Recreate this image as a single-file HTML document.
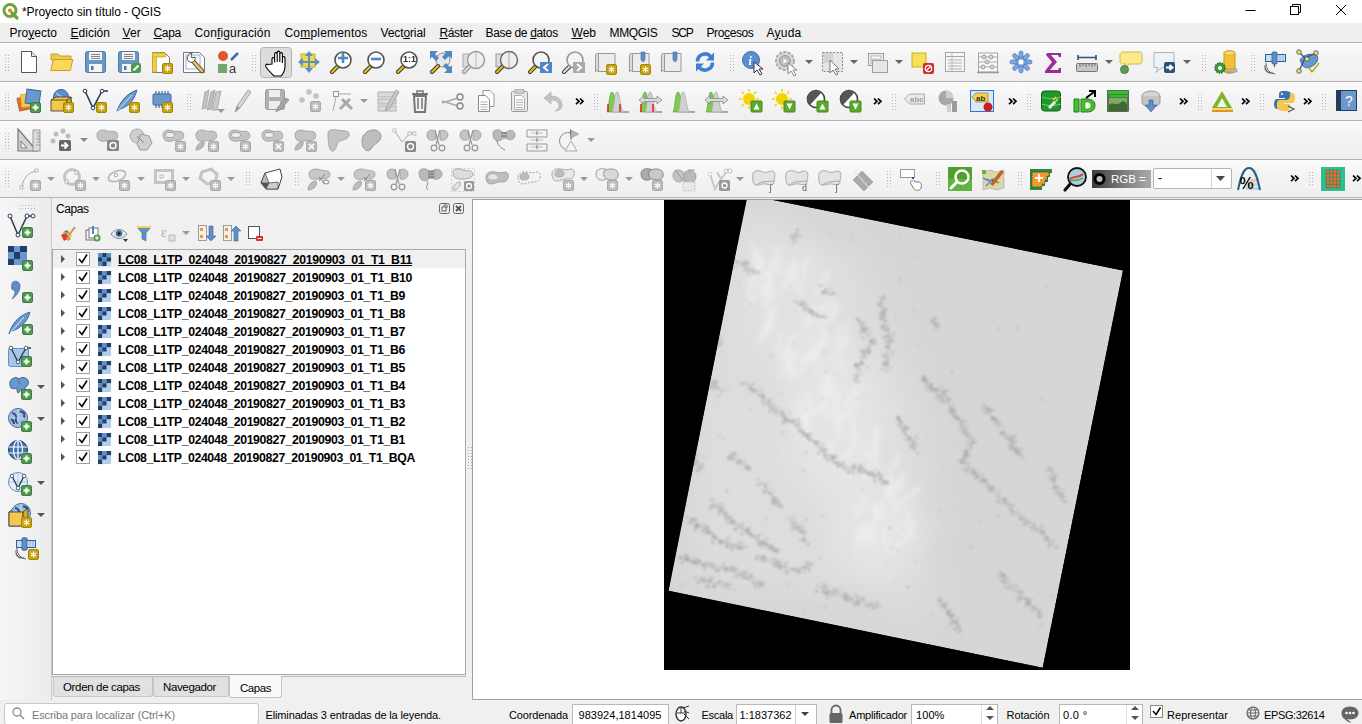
<!DOCTYPE html>
<html><head><meta charset="utf-8">
<style>
*{margin:0;padding:0;box-sizing:border-box}
html,body{width:1362px;height:724px;overflow:hidden;background:#f0f0f0;font-family:"Liberation Sans",sans-serif;position:relative}
.a{position:absolute}
.t{position:absolute;white-space:nowrap}
svg{position:absolute;left:0;top:0}
</style></head><body>
<div class="a" style="left:0px;top:0px;width:1362px;height:23px;background:#fff"></div><div class="t" style="left:22px;top:5.64px;font-size:12px;line-height:13.40px;font-weight:400;color:#000;letter-spacing:-0.064px;">*Proyecto sin título - QGIS</div><div class="a" style="left:0px;top:23px;width:1362px;height:19px;background:#efefef"></div><div class="a" style="left:0px;top:42px;width:1362px;height:1px;background:#b4b4b4"></div><div class="t" style="left:9.5px;top:26.64px;font-size:12px;line-height:13.40px;font-weight:400;color:#000;letter-spacing:0.003px;">Pro<u>y</u>ecto</div><div class="t" style="left:70.5px;top:26.64px;font-size:12px;line-height:13.40px;font-weight:400;color:#000;letter-spacing:0.018px;"><u>E</u>dición</div><div class="t" style="left:122.5px;top:26.64px;font-size:12px;line-height:13.40px;font-weight:400;color:#000;letter-spacing:0.061px;"><u>V</u>er</div><div class="t" style="left:153.5px;top:26.64px;font-size:12px;line-height:13.40px;font-weight:400;color:#000;letter-spacing:-0.326px;"><u>C</u>apa</div><div class="t" style="left:194.5px;top:26.64px;font-size:12px;line-height:13.40px;font-weight:400;color:#000;letter-spacing:0.149px;">Con<u>f</u>iguración</div><div class="t" style="left:284.5px;top:26.64px;font-size:12px;line-height:13.40px;font-weight:400;color:#000;letter-spacing:0.190px;">Co<u>m</u>plementos</div><div class="t" style="left:380.5px;top:26.64px;font-size:12px;line-height:13.40px;font-weight:400;color:#000;letter-spacing:-0.118px;">Vect<u>o</u>rial</div><div class="t" style="left:439.5px;top:26.64px;font-size:12px;line-height:13.40px;font-weight:400;color:#000;letter-spacing:-0.393px;"><u>R</u>áster</div><div class="t" style="left:485.5px;top:26.64px;font-size:12px;line-height:13.40px;font-weight:400;color:#000;letter-spacing:-0.335px;">Base de <u>d</u>atos</div><div class="t" style="left:571.5px;top:26.64px;font-size:12px;line-height:13.40px;font-weight:400;color:#000;letter-spacing:0.010px;"><u>W</u>eb</div><div class="t" style="left:609.5px;top:26.64px;font-size:12px;line-height:13.40px;font-weight:400;color:#000;letter-spacing:-0.333px;">MMQGIS</div><div class="t" style="left:671.5px;top:26.64px;font-size:12px;line-height:13.40px;font-weight:400;color:#000;letter-spacing:-1.229px;">SCP</div><div class="t" style="left:706.5px;top:26.64px;font-size:12px;line-height:13.40px;font-weight:400;color:#000;letter-spacing:-0.381px;">Pro<u>c</u>esos</div><div class="t" style="left:766.5px;top:26.64px;font-size:12px;line-height:13.40px;font-weight:400;color:#000;letter-spacing:0.234px;">A<u>y</u>uda</div><div class="a" style="left:0px;top:43px;width:1362px;height:38px;background:linear-gradient(#fbfbfb,#f4f4f4 40%,#efefef)"></div><div class="a" style="left:0px;top:81px;width:1362px;height:1px;background:#b4b4b4"></div><div class="a" style="left:0px;top:82px;width:1362px;height:38px;background:linear-gradient(#fbfbfb,#f4f4f4 40%,#efefef)"></div><div class="a" style="left:0px;top:120px;width:1362px;height:1px;background:#b4b4b4"></div><div class="a" style="left:0px;top:121px;width:1362px;height:38px;background:linear-gradient(#fbfbfb,#f4f4f4 40%,#efefef)"></div><div class="a" style="left:0px;top:159px;width:1362px;height:1px;background:#b4b4b4"></div><div class="a" style="left:0px;top:160px;width:1362px;height:37px;background:linear-gradient(#fbfbfb,#f4f4f4 40%,#efefef)"></div><div class="a" style="left:0px;top:197px;width:1362px;height:1px;background:#b4b4b4"></div><div class="a" style="left:0px;top:198px;width:51px;height:502px;background:linear-gradient(90deg,#f6f6f6,#ececec)"></div><div class="a" style="left:51px;top:198px;width:1px;height:502px;background:#c8c8c8"></div><div class="a" style="left:52px;top:198px;width:420px;height:502px;background:#f0f0f0"></div><div class="t" style="left:56px;top:203.14px;font-size:12px;line-height:13.40px;font-weight:400;color:#000;letter-spacing:-0.438px;">Capas</div><div class="a" style="left:52px;top:249px;width:414px;height:426px;background:#fff;border:1px solid #a9a9a9"></div><div class="a" style="left:53px;top:250px;width:412px;height:18px;background:#f0f0f0"></div><div class="t" style="left:118px;top:254.27px;font-size:12.3px;line-height:13.74px;font-weight:700;color:#000;text-decoration:underline;letter-spacing:-0.327px;">LC08_L1TP_024048_20190827_20190903_01_T1_B11</div><div class="t" style="left:118px;top:272.27px;font-size:12.3px;line-height:13.74px;font-weight:700;color:#000;letter-spacing:-0.342px;">LC08_L1TP_024048_20190827_20190903_01_T1_B10</div><div class="t" style="left:118px;top:290.27px;font-size:12.3px;line-height:13.74px;font-weight:700;color:#000;letter-spacing:-0.354px;">LC08_L1TP_024048_20190827_20190903_01_T1_B9</div><div class="t" style="left:118px;top:308.27px;font-size:12.3px;line-height:13.74px;font-weight:700;color:#000;letter-spacing:-0.354px;">LC08_L1TP_024048_20190827_20190903_01_T1_B8</div><div class="t" style="left:118px;top:326.27px;font-size:12.3px;line-height:13.74px;font-weight:700;color:#000;letter-spacing:-0.354px;">LC08_L1TP_024048_20190827_20190903_01_T1_B7</div><div class="t" style="left:118px;top:344.27px;font-size:12.3px;line-height:13.74px;font-weight:700;color:#000;letter-spacing:-0.354px;">LC08_L1TP_024048_20190827_20190903_01_T1_B6</div><div class="t" style="left:118px;top:362.27px;font-size:12.3px;line-height:13.74px;font-weight:700;color:#000;letter-spacing:-0.354px;">LC08_L1TP_024048_20190827_20190903_01_T1_B5</div><div class="t" style="left:118px;top:380.27px;font-size:12.3px;line-height:13.74px;font-weight:700;color:#000;letter-spacing:-0.354px;">LC08_L1TP_024048_20190827_20190903_01_T1_B4</div><div class="t" style="left:118px;top:398.27px;font-size:12.3px;line-height:13.74px;font-weight:700;color:#000;letter-spacing:-0.354px;">LC08_L1TP_024048_20190827_20190903_01_T1_B3</div><div class="t" style="left:118px;top:416.27px;font-size:12.3px;line-height:13.74px;font-weight:700;color:#000;letter-spacing:-0.354px;">LC08_L1TP_024048_20190827_20190903_01_T1_B2</div><div class="t" style="left:118px;top:434.27px;font-size:12.3px;line-height:13.74px;font-weight:700;color:#000;letter-spacing:-0.354px;">LC08_L1TP_024048_20190827_20190903_01_T1_B1</div><div class="t" style="left:118px;top:452.27px;font-size:12.3px;line-height:13.74px;font-weight:700;color:#000;letter-spacing:-0.382px;">LC08_L1TP_024048_20190827_20190903_01_T1_BQA</div><div class="a" style="left:52px;top:676px;width:414px;height:1px;background:#b8b8b8"></div><div class="a" style="left:53px;top:677px;width:100px;height:20px;background:#e1e1e1;border:1px solid #c4c4c4;border-top:none;border-radius:0 0 3px 3px"></div><div class="a" style="left:153px;top:677px;width:76px;height:20px;background:#e1e1e1;border:1px solid #c4c4c4;border-top:none;border-radius:0 0 3px 3px"></div><div class="a" style="left:229px;top:676px;width:53px;height:22px;background:#fafafa;border:1px solid #c4c4c4;border-top:none;border-radius:0 0 3px 3px"></div><div class="t" style="left:63px;top:681.09px;font-size:11.5px;line-height:12.85px;font-weight:400;color:#000;letter-spacing:-0.346px;">Orden de capas</div><div class="t" style="left:163px;top:681.09px;font-size:11.5px;line-height:12.85px;font-weight:400;color:#000;letter-spacing:-0.363px;">Navegador</div><div class="t" style="left:240px;top:682.09px;font-size:11.5px;line-height:12.85px;font-weight:400;color:#000;letter-spacing:-0.450px;">Capas</div><div class="a" style="left:472px;top:199px;width:890px;height:501px;background:#fff;border-left:1px solid #a0a0a0;border-top:1px solid #a0a0a0;border-bottom:1px solid #a0a0a0"></div><div class="a" style="left:0px;top:700px;width:1362px;height:24px;background:#f0f0f0"></div><div class="a" style="left:4px;top:703px;width:255px;height:22px;background:#fff;border:1px solid #c8c8c8;border-radius:3px"></div><div class="t" style="left:32px;top:709.04px;font-size:11px;line-height:12.29px;font-weight:400;color:#777;letter-spacing:-0.110px;">Escriba para localizar (Ctrl+K)</div><div class="t" style="left:265.5px;top:709.04px;font-size:11px;line-height:12.29px;font-weight:400;color:#000;letter-spacing:-0.136px;">Eliminadas 3 entradas de la leyenda.</div><div class="t" style="left:509px;top:709.04px;font-size:11px;line-height:12.29px;font-weight:400;color:#000;letter-spacing:-0.156px;">Coordenada</div><div class="a" style="left:572px;top:704px;width:97px;height:21px;background:#fff;border:1px solid #b8b8b8"></div><div class="t" style="left:578.5px;top:709.04px;font-size:11px;line-height:12.29px;font-weight:400;color:#000;letter-spacing:0.029px;">983924,1814095</div><div class="t" style="left:701.5px;top:709.04px;font-size:11px;line-height:12.29px;font-weight:400;color:#000;letter-spacing:-0.255px;">Escala</div><div class="a" style="left:736px;top:704px;width:81px;height:21px;background:#fff;border:1px solid #b8b8b8"></div><div class="a" style="left:795px;top:705px;width:1px;height:19px;background:#d0d0d0"></div><div class="t" style="left:739.5px;top:709.04px;font-size:11px;line-height:12.29px;font-weight:400;color:#000;letter-spacing:0.000px;">1:1837362</div><div class="t" style="left:849px;top:709.04px;font-size:11px;line-height:12.29px;font-weight:400;color:#000;letter-spacing:-0.211px;">Amplificador</div><div class="a" style="left:911px;top:704px;width:87px;height:21px;background:#fff;border:1px solid #b8b8b8"></div><div class="t" style="left:916px;top:709.04px;font-size:11px;line-height:12.29px;font-weight:400;color:#000;letter-spacing:0.090px;">100%</div><div class="t" style="left:1006.5px;top:709.04px;font-size:11px;line-height:12.29px;font-weight:400;color:#000;letter-spacing:-0.053px;">Rotación</div><div class="a" style="left:1059px;top:704px;width:84px;height:21px;background:#fff;border:1px solid #b8b8b8"></div><div class="t" style="left:1063px;top:709.04px;font-size:11px;line-height:12.29px;font-weight:400;color:#000;letter-spacing:0.350px;">0.0 °</div><div class="t" style="left:1167px;top:709.04px;font-size:11px;line-height:12.29px;font-weight:400;color:#000;letter-spacing:0.041px;">Representar</div><div class="t" style="left:1264px;top:709.04px;font-size:11px;line-height:12.29px;font-weight:400;color:#000;letter-spacing:-0.372px;">EPSG:32614</div><div class="a" style="left:1092px;top:170px;width:59px;height:18px;background:linear-gradient(90deg,#3c3c3c,#8a8a8a 65%,#a9a9a9)"></div><div class="t" style="left:1111px;top:173.09px;font-size:11.5px;line-height:12.85px;font-weight:400;color:#fff;">RGB =</div><div class="a" style="left:1153px;top:168px;width:79px;height:21px;background:#fff;border:1px solid #b4b4b4;border-radius:2px"></div><div class="a" style="left:1211px;top:169px;width:1px;height:19px;background:#d4d4d4"></div><div class="t" style="left:1158px;top:172.14px;font-size:12px;line-height:13.40px;font-weight:400;color:#000;">-</div>
<svg width="1362" height="724" viewBox="0 0 1362 724">
<defs>
<clipPath id="mc"><rect x="664" y="200" width="466" height="470"/></clipPath>
<filter id="bl" x="-50%" y="-50%" width="200%" height="200%"><feGaussianBlur stdDeviation="6"/></filter>
<filter id="bl2" x="-50%" y="-50%" width="200%" height="200%"><feGaussianBlur stdDeviation="0.9"/></filter>
<filter id="bl3" x="-50%" y="-50%" width="200%" height="200%"><feGaussianBlur stdDeviation="16"/></filter>
<filter id="bl4" x="-50%" y="-50%" width="200%" height="200%"><feGaussianBlur stdDeviation="1"/></filter>
<filter id="cloud" x="0" y="0" width="100%" height="100%"><feTurbulence type="fractalNoise" baseFrequency="0.09 0.05" numOctaves="3" seed="11"/><feColorMatrix type="matrix" values="0 0 0 0 0.95  0 0 0 0 0.95  0 0 0 0 0.95  2.2 0 0 0 -1.15"/></filter>
<filter id="bl5" x="-50%" y="-50%" width="200%" height="200%"><feGaussianBlur stdDeviation="2.5"/></filter>
<filter id="noise" x="0" y="0" width="100%" height="100%"><feTurbulence type="fractalNoise" baseFrequency="0.35" numOctaves="2" seed="4"/><feColorMatrix type="matrix" values="0 0 0 0 0.72  0 0 0 0 0.72  0 0 0 0 0.72  0.9 0 0 0 -0.42"/></filter>
</defs>
<rect x="664" y="200" width="466" height="470" fill="#000"/>
<clipPath id="pc"><polygon points="747.6,194.9 1123,270.4 1042.7,667.8 668.5,590.7"/></clipPath>
<g clip-path="url(#mc)"><g clip-path="url(#pc)">
<polygon points="747.6,194.9 1123,270.4 1042.7,667.8 668.5,590.7" fill="#d6d6d6"/>
<g filter="url(#bl3)"><polygon points="720,230 860,250 930,420 930,600 690,590 700,400" fill="#dedede" opacity=".8"/><ellipse cx="790" cy="300" rx="45" ry="70" fill="#e2e2e2" opacity="0.9"/><ellipse cx="835" cy="420" rx="50" ry="80" fill="#e6e6e6" opacity="0.9"/><ellipse cx="875" cy="530" rx="45" ry="50" fill="#e6e6e6" opacity="0.9"/><ellipse cx="730" cy="470" rx="35" ry="80" fill="#dedede" opacity="0.8"/><ellipse cx="720" cy="560" rx="35" ry="30" fill="#dcdcdc" opacity="0.7"/><ellipse cx="760" cy="240" rx="35" ry="30" fill="#e0e0e0" opacity="0.8"/><ellipse cx="905" cy="600" rx="30" ry="30" fill="#dedede" opacity="0.6"/></g>
<g filter="url(#bl5)" stroke="#eeeeee" fill="none" stroke-linecap="round"><path d="M791.0,350.2L777.4,363.1" stroke-width="4.5" opacity="0.42"/><path d="M802.5,401.9L795.4,408.6" stroke-width="4.7" opacity="0.73"/><path d="M761.7,286.5L766.2,305.5" stroke-width="4.6" opacity="0.79"/><path d="M808.2,258.8L801.3,266.5" stroke-width="4.2" opacity="0.73"/><path d="M804.2,304.9L795.9,321.9" stroke-width="3.3" opacity="0.42"/><path d="M816.1,306.1L806.3,323.2" stroke-width="4.8" opacity="0.52"/><path d="M891.1,476.6L887.3,494.7" stroke-width="6.5" opacity="0.69"/><path d="M850.3,319.3L841.4,340.6" stroke-width="3.6" opacity="0.60"/><path d="M791.2,262.2L785.9,287.2" stroke-width="4.3" opacity="0.68"/><path d="M852.2,418.6L855.1,445.4" stroke-width="4.9" opacity="0.67"/><path d="M790.5,265.9L797.5,289.3" stroke-width="4.1" opacity="0.55"/><path d="M822.1,450.5L815.4,458.4" stroke-width="3.2" opacity="0.71"/><path d="M765.9,285.8L767.3,295.3" stroke-width="4.8" opacity="0.62"/><path d="M914.8,524.1L906.0,537.8" stroke-width="4.4" opacity="0.75"/><path d="M870.3,527.5L862.9,537.8" stroke-width="4.9" opacity="0.64"/><path d="M768.7,322.7L760.2,340.1" stroke-width="6.8" opacity="0.68"/><path d="M856.1,406.2L836.8,423.7" stroke-width="6.1" opacity="0.75"/><path d="M872.4,483.9L857.9,498.7" stroke-width="3.2" opacity="0.43"/><path d="M773.1,310.1L767.2,315.5" stroke-width="3.6" opacity="0.44"/><path d="M780.2,369.9L778.4,380.7" stroke-width="4.0" opacity="0.54"/><path d="M784.7,366.4L789.7,383.0" stroke-width="4.9" opacity="0.43"/><path d="M770.2,273.0L771.2,284.2" stroke-width="3.1" opacity="0.78"/><path d="M817.5,408.8L803.3,420.8" stroke-width="6.9" opacity="0.75"/><path d="M848.9,450.9L833.8,468.8" stroke-width="5.1" opacity="0.71"/><path d="M787.2,351.2L794.2,375.3" stroke-width="6.2" opacity="0.73"/><path d="M846.3,473.7L842.4,481.3" stroke-width="3.1" opacity="0.51"/><path d="M823.8,334.0L814.3,358.9" stroke-width="7.0" opacity="0.78"/><path d="M798.8,351.4L791.3,361.0" stroke-width="5.5" opacity="0.76"/><path d="M877.3,506.9L877.9,516.6" stroke-width="5.6" opacity="0.76"/><path d="M899.2,479.8L884.2,498.2" stroke-width="4.3" opacity="0.72"/><path d="M885.4,532.6L890.6,554.5" stroke-width="3.7" opacity="0.45"/><path d="M830.2,300.4L813.9,318.7" stroke-width="6.9" opacity="0.66"/><path d="M830.0,340.3L808.9,357.8" stroke-width="5.6" opacity="0.61"/><path d="M885.5,540.2L886.6,552.3" stroke-width="4.0" opacity="0.52"/><path d="M810.2,315.0L806.1,324.8" stroke-width="6.6" opacity="0.54"/><path d="M841.3,392.4L831.2,416.7" stroke-width="5.0" opacity="0.61"/><path d="M802.1,407.1L797.0,413.4" stroke-width="6.2" opacity="0.47"/><path d="M854.0,390.7L845.1,406.8" stroke-width="5.2" opacity="0.71"/><path d="M794.9,269.4L782.3,289.2" stroke-width="5.0" opacity="0.62"/><path d="M903.3,472.4L900.3,490.2" stroke-width="5.0" opacity="0.68"/><path d="M829.0,379.3L834.0,400.7" stroke-width="6.5" opacity="0.78"/><path d="M807.9,340.8L809.1,351.5" stroke-width="3.5" opacity="0.58"/><path d="M759.8,252.2L757.5,275.7" stroke-width="6.6" opacity="0.46"/><path d="M873.7,445.6L878.1,472.6" stroke-width="3.9" opacity="0.78"/><path d="M820.2,383.6L821.3,394.8" stroke-width="4.7" opacity="0.61"/><path d="M789.9,347.1L789.6,355.5" stroke-width="5.2" opacity="0.58"/><path d="M760.2,259.7L757.6,268.6" stroke-width="6.9" opacity="0.72"/><path d="M873.6,531.7L855.8,547.2" stroke-width="4.1" opacity="0.45"/><path d="M860.9,386.7L854.8,395.8" stroke-width="6.7" opacity="0.63"/><path d="M828.8,443.6L827.6,460.1" stroke-width="3.3" opacity="0.78"/><path d="M876.0,428.2L877.2,437.5" stroke-width="6.5" opacity="0.58"/><path d="M821.2,365.1L815.4,374.0" stroke-width="5.1" opacity="0.50"/><path d="M761.5,268.7L752.8,280.0" stroke-width="4.2" opacity="0.70"/><path d="M809.6,328.6L805.8,336.0" stroke-width="4.0" opacity="0.41"/><path d="M873.7,453.0L865.1,478.2" stroke-width="3.4" opacity="0.73"/><path d="M829.5,386.4L822.0,402.9" stroke-width="5.8" opacity="0.79"/><path d="M842.2,356.0L840.0,372.0" stroke-width="4.4" opacity="0.42"/><path d="M755.7,296.5L749.4,305.8" stroke-width="3.3" opacity="0.74"/><path d="M900.8,503.9L892.8,515.3" stroke-width="4.8" opacity="0.46"/><path d="M806.5,393.5L811.5,411.7" stroke-width="4.0" opacity="0.79"/><path d="M802.5,325.0L795.0,340.8" stroke-width="5.0" opacity="0.48"/><path d="M801.7,393.7L790.3,405.0" stroke-width="3.2" opacity="0.41"/><path d="M791.2,337.7L785.2,359.9" stroke-width="5.6" opacity="0.69"/><path d="M873.9,508.2L877.0,518.8" stroke-width="5.9" opacity="0.66"/><path d="M804.2,268.7L800.9,291.1" stroke-width="6.2" opacity="0.46"/><path d="M837.6,409.9L839.2,434.4" stroke-width="5.3" opacity="0.76"/><path d="M878.3,448.3L870.2,455.2" stroke-width="4.4" opacity="0.44"/><path d="M884.9,498.9L881.7,520.3" stroke-width="5.0" opacity="0.40"/><path d="M896.3,484.2L890.9,504.6" stroke-width="3.3" opacity="0.69"/><path d="M768.9,317.6L768.6,329.7" stroke-width="6.0" opacity="0.79"/><path d="M825.7,390.9L823.9,414.2" stroke-width="5.5" opacity="0.66"/><path d="M751.9,263.8L751.8,277.9" stroke-width="5.3" opacity="0.40"/><path d="M760.1,267.6L758.6,289.1" stroke-width="4.2" opacity="0.61"/><path d="M826.7,377.1L828.7,388.9" stroke-width="6.9" opacity="0.77"/><path d="M766.8,261.6L771.2,278.1" stroke-width="4.1" opacity="0.48"/><path d="M875.9,534.2L863.6,548.0" stroke-width="6.8" opacity="0.45"/><path d="M877.7,506.4L877.0,519.0" stroke-width="6.6" opacity="0.59"/><path d="M736.0,255.6L731.0,268.8" stroke-width="3.6" opacity="0.54"/><path d="M838.3,322.5L838.3,347.3" stroke-width="3.5" opacity="0.77"/><path d="M898.3,455.5L891.3,469.7" stroke-width="7.0" opacity="0.64"/><path d="M814.9,353.1L807.4,359.8" stroke-width="6.3" opacity="0.51"/><path d="M873.2,523.0L869.9,534.3" stroke-width="4.5" opacity="0.78"/><path d="M907.3,511.1L912.5,537.4" stroke-width="5.2" opacity="0.69"/><path d="M795.0,257.9L795.1,278.8" stroke-width="4.1" opacity="0.42"/><path d="M863.9,526.0L857.4,538.4" stroke-width="6.0" opacity="0.79"/><path d="M818.1,319.3L814.5,334.8" stroke-width="3.7" opacity="0.46"/><path d="M837.3,306.8L821.7,327.8" stroke-width="7.0" opacity="0.58"/><path d="M765.8,280.3L761.2,288.9" stroke-width="4.0" opacity="0.50"/><path d="M878.2,425.9L871.8,440.9" stroke-width="5.1" opacity="0.55"/><path d="M777.6,344.7L780.3,354.9" stroke-width="5.0" opacity="0.65"/><path d="M864.0,500.4L854.9,513.6" stroke-width="4.8" opacity="0.78"/><path d="M918.6,488.0L901.7,502.5" stroke-width="6.6" opacity="0.59"/><path d="M803.8,415.9L808.9,439.9" stroke-width="6.4" opacity="0.79"/><path d="M773.9,308.8L768.1,329.6" stroke-width="6.8" opacity="0.69"/><path d="M876.4,443.7L874.3,452.2" stroke-width="6.1" opacity="0.49"/><path d="M905.7,520.3L896.8,529.9" stroke-width="5.5" opacity="0.68"/><path d="M751.8,281.7L748.6,297.1" stroke-width="3.9" opacity="0.64"/><path d="M752.9,246.8L758.1,267.1" stroke-width="6.5" opacity="0.59"/><path d="M780.7,332.2L779.9,346.3" stroke-width="3.1" opacity="0.60"/><path d="M852.6,436.9L850.0,463.2" stroke-width="3.9" opacity="0.41"/><path d="M815.0,352.5L800.2,371.3" stroke-width="6.0" opacity="0.60"/><path d="M833.7,304.6L834.8,317.2" stroke-width="3.9" opacity="0.70"/><path d="M848.4,338.5L840.6,348.2" stroke-width="4.7" opacity="0.67"/><path d="M873.3,525.4L856.8,547.4" stroke-width="3.6" opacity="0.42"/><path d="M767.5,273.8L771.1,296.2" stroke-width="7.0" opacity="0.77"/><path d="M787.7,362.5L787.6,371.2" stroke-width="5.7" opacity="0.55"/><path d="M810.5,353.0L799.8,361.5" stroke-width="4.4" opacity="0.78"/><path d="M828.8,272.5L817.7,294.2" stroke-width="6.3" opacity="0.57"/><path d="M773.1,260.2L775.5,271.8" stroke-width="4.5" opacity="0.76"/><path d="M766.7,269.0L766.9,277.8" stroke-width="3.1" opacity="0.43"/><path d="M868.9,531.2L871.5,545.7" stroke-width="4.1" opacity="0.78"/><path d="M834.5,440.7L827.8,452.5" stroke-width="3.0" opacity="0.70"/><path d="M904.7,539.2L895.0,547.3" stroke-width="4.9" opacity="0.78"/><path d="M888.3,525.4L881.6,542.0" stroke-width="6.7" opacity="0.47"/><path d="M893.1,495.4L893.7,515.5" stroke-width="4.3" opacity="0.53"/><path d="M846.7,341.8L832.5,360.0" stroke-width="4.0" opacity="0.43"/><path d="M775.1,247.6L782.1,272.3" stroke-width="7.0" opacity="0.51"/><path d="M749.1,271.7L748.2,288.6" stroke-width="3.9" opacity="0.57"/><path d="M863.3,438.0L865.8,459.1" stroke-width="3.5" opacity="0.74"/><path d="M813.6,333.3L813.5,345.3" stroke-width="4.0" opacity="0.50"/></g>
<g filter="url(#bl2)" fill="none" stroke="#a9a9a9" stroke-linecap="round" stroke-linejoin="round"><path d="M745.0,383.2 L749.2,384.5 L751.7,389.5 L755.0,390.2 L758.9,394.5 L762.5,395.8 L763.9,401.0 L768.0,404.2 L768.6,405.4 L772.4,407.7 L778.4,411.5 L781.8,413.5 L785.1,416.3 L786.8,420.0 L792.3,420.6 L794.8,424.7 L797.2,426.6 L799.9,429.1 L803.3,433.3 L807.5,435.1 L808.5,438.5 L813.5,441.1 L815.4,444.1 L819.9,448.1 L821.0,449.6 L825.4,453.8 L829.4,455.3 L831.3,459.9 L835.4,461.5 L838.4,466.4 L842.4,466.2 L846.6,466.7 L852.1,469.5 L854.6,468.1 L859.7,469.1 L861.5,472.2 L866.8,473.0 L870.9,475.1 L875.3,475.0 L878.1,478.2 L884.2,481.2 L888.0,482.0" stroke-width="2" opacity=".4"/><path d="M768.6,405.4l1.3,-6.4" stroke-width="1.6" opacity=".6"/><path d="M778.4,411.5l-4.7,2.4" stroke-width="1.6" opacity=".6"/><path d="M785.1,416.3l-3.5,-6.8" stroke-width="1.6" opacity=".6"/><path d="M792.3,420.6l3.2,-0.5" stroke-width="1.6" opacity=".6"/><path d="M797.2,426.6l1.5,-7.5" stroke-width="1.6" opacity=".6"/><path d="M803.3,433.3l-5.1,-2.6" stroke-width="1.6" opacity=".6"/><path d="M808.5,438.5l-4.6,-5.5" stroke-width="1.6" opacity=".6"/><path d="M815.4,444.1l3.8,-1.3" stroke-width="1.6" opacity=".6"/><path d="M821.0,449.6l0.3,-3.6" stroke-width="1.6" opacity=".6"/><path d="M829.4,455.3l4.1,1.5" stroke-width="1.6" opacity=".6"/><path d="M852.1,469.5l1.6,-4.7" stroke-width="1.6" opacity=".6"/><path d="M866.8,473.0l-4.6,-5.4" stroke-width="1.6" opacity=".6"/><path d="M875.3,475.0l-1.6,5.5" stroke-width="1.6" opacity=".6"/><path d="M884.2,481.2l-3.0,3.0" stroke-width="1.6" opacity=".6"/><path d="M859.3,322.2 L861.6,327.1 L864.2,331.8 L867.1,335.2 L870.1,340.9 L869.7,345.0 L870.0,348.9 L865.5,353.0 L864.8,354.5 L860.7,361.4 L860.5,363.3 L857.8,367.6 L857.2,374.2 L857.0,378.0" stroke-width="2" opacity=".4"/><path d="M859.3,322.2l-1.5,-3.3" stroke-width="1.6" opacity=".6"/><path d="M864.2,331.8l2.5,-2.7" stroke-width="1.6" opacity=".6"/><path d="M870.1,340.9l6.5,2.1" stroke-width="1.6" opacity=".6"/><path d="M864.8,354.5l-4.5,-4.7" stroke-width="1.6" opacity=".6"/><path d="M857.2,374.2l-2.5,6.2" stroke-width="1.6" opacity=".6"/><path d="M797.6,302.2 L801.3,304.9 L803.9,307.6 L808.1,309.4 L812.4,311.1 L815.2,314.5 L819.0,316.0" stroke-width="2" opacity=".4"/><path d="M797.6,302.2l-3.7,-0.4" stroke-width="1.6" opacity=".6"/><path d="M812.4,311.1l-3.9,-2.7" stroke-width="1.6" opacity=".6"/><path d="M819.0,316.0l7.8,1.7" stroke-width="1.6" opacity=".6"/><path d="M825.0,288.2 L826.8,292.3 L830.0,295.0" stroke-width="2" opacity=".4"/><path d="M792.0,238.6 L794.4,237.1 L796.0,233.0" stroke-width="2" opacity=".4"/><path d="M792.0,238.6l6.5,-3.1" stroke-width="1.6" opacity=".6"/><path d="M796.0,233.0l-3.8,6.0" stroke-width="1.6" opacity=".6"/><path d="M941.7,392.6 L945.2,394.9 L948.1,399.3 L948.7,403.0 L950.3,409.0 L952.5,411.0 L955.0,415.5 L958.2,418.8 L960.8,422.2 L962.9,427.5 L963.1,430.4 L965.7,433.3 L967.8,437.1 L972.5,442.5 L970.9,443.8 L967.6,450.2 L965.5,453.7 L964.8,458.4 L962.5,461.9 L966.6,463.0 L968.7,468.2 L973.4,469.4 L976.3,474.7 L978.7,476.8 L981.6,478.7 L986.6,483.4 L988.0,484.6 L990.8,489.3 L995.0,491.3 L997.1,495.3 L1001.6,498.9 L1004.2,500.1 L1005.7,504.7 L1009.7,507.7 L1011.7,510.9 L1015.9,513.7 L1020.8,515.2 L1021.7,519.1 L1026.4,521.6 L1029.2,522.2 L1034.2,525.4 L1035.6,528.0 L1040.3,529.5 L1043.6,534.3 L1047.0,536.9 L1051.1,542.4 L1054.0,545.0" stroke-width="2" opacity=".4"/><path d="M941.7,392.6l5.8,-2.7" stroke-width="1.6" opacity=".6"/><path d="M950.3,409.0l6.1,2.2" stroke-width="1.6" opacity=".6"/><path d="M960.8,422.2l6.1,-1.2" stroke-width="1.6" opacity=".6"/><path d="M963.1,430.4l4.5,1.7" stroke-width="1.6" opacity=".6"/><path d="M970.9,443.8l0.3,5.6" stroke-width="1.6" opacity=".6"/><path d="M962.5,461.9l0.3,-3.8" stroke-width="1.6" opacity=".6"/><path d="M968.7,468.2l-6.6,1.6" stroke-width="1.6" opacity=".6"/><path d="M976.3,474.7l-1.2,4.7" stroke-width="1.6" opacity=".6"/><path d="M988.0,484.6l1.7,2.9" stroke-width="1.6" opacity=".6"/><path d="M1001.6,498.9l4.2,3.4" stroke-width="1.6" opacity=".6"/><path d="M1034.2,525.4l2.4,5.7" stroke-width="1.6" opacity=".6"/><path d="M1047.0,536.9l2.8,6.5" stroke-width="1.6" opacity=".6"/><path d="M986.0,406.6 L988.5,410.8 L989.6,413.0 L991.0,415.9 L994.6,418.7 L997.2,422.5 L999.0,427.0" stroke-width="2" opacity=".4"/><path d="M986.0,406.6l-3.9,-1.4" stroke-width="1.6" opacity=".6"/><path d="M989.6,413.0l-5.9,-0.5" stroke-width="1.6" opacity=".6"/><path d="M1004.8,435.5 L1009.0,436.1 L1011.7,440.3 L1012.0,445.4 L1015.5,448.2 L1016.6,451.5 L1020.0,454.0" stroke-width="2" opacity=".4"/><path d="M1011.7,440.3l3.7,1.0" stroke-width="1.6" opacity=".6"/><path d="M1015.5,448.2l5.9,0.2" stroke-width="1.6" opacity=".6"/><path d="M1020.0,454.0l3.9,5.0" stroke-width="1.6" opacity=".6"/><path d="M922.2,378.1 L926.4,382.5 L926.6,384.2 L931.8,388.1 L934.8,390.4 L937.4,392.6 L939.3,396.9 L943.0,399.0" stroke-width="2" opacity=".4"/><path d="M922.2,378.1l4.7,1.8" stroke-width="1.6" opacity=".6"/><path d="M926.6,384.2l-0.2,5.3" stroke-width="1.6" opacity=".6"/><path d="M934.8,390.4l-5.0,-4.3" stroke-width="1.6" opacity=".6"/><path d="M932.3,320.2 L936.5,323.3 L940.0,326.0" stroke-width="2" opacity=".4"/><path d="M932.3,320.2l2.3,3.1" stroke-width="1.6" opacity=".6"/><path d="M1000.4,572.0 L1002.4,574.5 L1005.9,577.9 L1007.5,582.2 L1009.8,584.7 L1012.7,587.4 L1016.7,591.1 L1018.7,593.2 L1022.6,597.3 L1027.0,599.4 L1027.7,601.3 L1030.7,604.8 L1033.5,607.1 L1037.9,611.4 L1040.0,614.0" stroke-width="2" opacity=".4"/><path d="M1005.9,577.9l-7.0,-1.2" stroke-width="1.6" opacity=".6"/><path d="M1022.6,597.3l-5.3,4.9" stroke-width="1.6" opacity=".6"/><path d="M1027.7,601.3l2.4,3.5" stroke-width="1.6" opacity=".6"/><path d="M1033.5,607.1l4.2,2.6" stroke-width="1.6" opacity=".6"/><path d="M678.9,558.5 L683.6,559.1 L687.2,559.6 L691.5,560.6 L694.6,561.1 L700.2,561.7 L703.0,564.7 L707.3,564.5 L711.7,567.2 L715.8,567.7 L722.6,567.6 L725.8,570.5 L730.9,570.4 L733.6,571.8 L738.6,574.6 L742.4,575.7 L747.4,578.9 L750.6,579.7 L755.2,583.3 L758.1,585.4 L763.0,586.0" stroke-width="2" opacity=".4"/><path d="M687.2,559.6l6.1,4.1" stroke-width="1.6" opacity=".6"/><path d="M694.6,561.1l2.9,4.9" stroke-width="1.6" opacity=".6"/><path d="M703.0,564.7l1.6,4.8" stroke-width="1.6" opacity=".6"/><path d="M711.7,567.2l2.4,-2.0" stroke-width="1.6" opacity=".6"/><path d="M722.6,567.6l1.5,-5.7" stroke-width="1.6" opacity=".6"/><path d="M730.9,570.4l0.0,-3.8" stroke-width="1.6" opacity=".6"/><path d="M738.6,574.6l2.6,-2.2" stroke-width="1.6" opacity=".6"/><path d="M747.4,578.9l-5.7,-3.9" stroke-width="1.6" opacity=".6"/><path d="M755.2,583.3l0.2,6.0" stroke-width="1.6" opacity=".6"/><path d="M763.0,586.0l-4.8,-4.4" stroke-width="1.6" opacity=".6"/><path d="M714.5,503.9 L717.7,507.3 L719.2,510.3 L723.3,511.7 L725.2,514.2 L730.0,518.5 L731.1,520.5 L733.9,523.1 L737.7,525.8 L743.4,530.2 L746.4,530.9 L749.0,534.2 L753.7,536.4 L756.4,537.1 L759.9,541.4 L763.9,541.4 L767.2,544.5 L769.0,548.7 L774.0,550.4 L777.0,552.0" stroke-width="2" opacity=".4"/><path d="M714.5,503.9l-4.7,6.1" stroke-width="1.6" opacity=".6"/><path d="M725.2,514.2l1.3,-3.3" stroke-width="1.6" opacity=".6"/><path d="M737.7,525.8l6.2,-2.5" stroke-width="1.6" opacity=".6"/><path d="M746.4,530.9l3.9,-4.1" stroke-width="1.6" opacity=".6"/><path d="M759.9,541.4l-1.8,2.8" stroke-width="1.6" opacity=".6"/><path d="M767.2,544.5l-4.8,3.3" stroke-width="1.6" opacity=".6"/><path d="M774.0,550.4l-3.2,-6.0" stroke-width="1.6" opacity=".6"/><path d="M820.2,587.2 L823.6,588.5 L827.2,590.3 L829.5,591.3 L835.0,592.6 L837.6,592.6 L842.5,596.4 L845.3,596.1 L849.2,597.2 L854.5,601.3 L858.9,600.9 L862.6,601.4 L867.0,603.6 L868.5,606.0 L874.0,607.0" stroke-width="2" opacity=".4"/><path d="M827.2,590.3l0.6,7.9" stroke-width="1.6" opacity=".6"/><path d="M842.5,596.4l6.6,4.4" stroke-width="1.6" opacity=".6"/><path d="M849.2,597.2l4.0,1.3" stroke-width="1.6" opacity=".6"/><path d="M858.9,600.9l-3.6,-6.7" stroke-width="1.6" opacity=".6"/><path d="M874.0,607.0l6.5,-1.1" stroke-width="1.6" opacity=".6"/><path d="M761.8,482.9 L766.5,486.7 L766.2,490.1 L770.2,493.5 L772.3,496.4 L775.0,500.4 L777.0,503.0" stroke-width="2" opacity=".4"/><path d="M761.8,482.9l-2.6,1.6" stroke-width="1.6" opacity=".6"/><path d="M777.0,503.0l5.6,4.4" stroke-width="1.6" opacity=".6"/><path d="M702.4,370.0 L704.1,374.4 L707.1,378.3 L709.7,381.2 L713.6,384.4 L714.8,385.1 L718.4,390.2 L722.0,392.0" stroke-width="2" opacity=".4"/><path d="M702.4,370.0l1.3,-4.2" stroke-width="1.6" opacity=".6"/><path d="M707.1,378.3l-3.6,3.2" stroke-width="1.6" opacity=".6"/><path d="M713.6,384.4l2.2,-2.4" stroke-width="1.6" opacity=".6"/><path d="M707.9,337.6 L711.4,338.2 L717.3,340.7 L722.0,344.0" stroke-width="2" opacity=".4"/><path d="M707.9,337.6l-6.6,1.2" stroke-width="1.6" opacity=".6"/><path d="M717.3,340.7l-6.0,0.0" stroke-width="1.6" opacity=".6"/><path d="M733.9,260.9 L739.8,263.1 L743.1,264.3 L746.7,266.0 L748.2,269.6 L753.7,270.4 L756.0,274.0" stroke-width="2" opacity=".4"/><path d="M733.9,260.9l-7.1,-1.3" stroke-width="1.6" opacity=".6"/><path d="M748.2,269.6l0.2,6.3" stroke-width="1.6" opacity=".6"/><path d="M881.4,299.1 L879.7,305.2 L882.2,307.0 L883.6,311.3 L883.2,315.6 L885.1,320.5 L884.7,324.7 L887.4,327.9 L888.5,332.9 L887.5,335.9 L890.5,340.6 L889.7,343.3 L889.9,349.4 L887.1,352.6 L888.5,356.3 L886.2,362.8 L886.9,364.9 L885.0,370.0" stroke-width="2" opacity=".4"/><path d="M881.4,299.1l3.2,-0.7" stroke-width="1.6" opacity=".6"/><path d="M882.2,307.0l2.9,4.9" stroke-width="1.6" opacity=".6"/><path d="M883.2,315.6l3.1,6.1" stroke-width="1.6" opacity=".6"/><path d="M890.5,340.6l-1.4,-6.5" stroke-width="1.6" opacity=".6"/><path d="M691.1,520.2 L691.9,523.0 L697.0,525.6 L701.4,526.1 L704.4,529.8 L706.0,530.7 L709.6,532.9 L713.0,534.4 L715.8,539.0 L719.7,540.4 L725.3,542.1 L727.6,543.9 L733.4,545.5 L737.4,546.1 L741.8,545.9 L745.0,548.0" stroke-width="2" opacity=".4"/><path d="M697.0,525.6l-2.2,5.1" stroke-width="1.6" opacity=".6"/><path d="M704.4,529.8l5.0,-1.8" stroke-width="1.6" opacity=".6"/><path d="M709.6,532.9l-2.4,-7.5" stroke-width="1.6" opacity=".6"/><path d="M725.3,542.1l3.9,-5.4" stroke-width="1.6" opacity=".6"/><path d="M733.4,545.5l-1.7,5.5" stroke-width="1.6" opacity=".6"/><path d="M698.9,579.6 L705.3,581.6 L708.8,582.0 L712.4,583.5 L717.3,582.6 L720.5,582.4 L726.9,585.2 L730.0,585.0" stroke-width="2" opacity=".4"/><path d="M708.8,582.0l4.4,-4.1" stroke-width="1.6" opacity=".6"/><path d="M726.9,585.2l2.2,4.4" stroke-width="1.6" opacity=".6"/><path d="M758.5,555.9 L764.6,556.9 L766.0,559.6 L771.0,561.1 L775.2,563.2 L778.5,565.8 L783.9,567.5 L786.6,567.6 L789.6,569.3 L795.2,569.9 L798.9,569.0 L803.5,567.6 L805.5,566.8 L810.0,565.0" stroke-width="2" opacity=".4"/><path d="M766.0,559.6l-3.6,-2.8" stroke-width="1.6" opacity=".6"/><path d="M775.2,563.2l3.3,-0.6" stroke-width="1.6" opacity=".6"/><path d="M783.9,567.5l3.3,-5.4" stroke-width="1.6" opacity=".6"/><path d="M805.5,566.8l4.9,1.6" stroke-width="1.6" opacity=".6"/><path d="M729.4,455.2 L731.9,457.2 L737.9,460.3 L741.0,461.0 L742.4,464.0 L747.7,466.3 L750.0,470.0" stroke-width="2" opacity=".4"/><path d="M729.4,455.2l-1.6,4.3" stroke-width="1.6" opacity=".6"/><path d="M750.0,470.0l-2.3,-2.3" stroke-width="1.6" opacity=".6"/><path d="M789.5,518.8 L793.2,524.0 L795.0,525.7 L798.0,529.8 L800.5,532.1 L803.7,535.2 L805.0,540.0" stroke-width="2" opacity=".4"/><path d="M805.0,540.0l-5.4,-0.6" stroke-width="1.6" opacity=".6"/><path d="M899.2,419.3 L901.9,423.8 L903.5,428.0 L904.7,431.3 L906.8,435.8 L910.0,439.6 L911.3,441.7 L914.4,446.3 L915.0,450.0" stroke-width="2" opacity=".4"/><path d="M899.2,419.3l2.9,2.8" stroke-width="1.6" opacity=".6"/><path d="M903.5,428.0l4.2,-0.4" stroke-width="1.6" opacity=".6"/><path d="M906.8,435.8l-4.2,-2.5" stroke-width="1.6" opacity=".6"/><path d="M915.0,450.0l-4.9,-4.9" stroke-width="1.6" opacity=".6"/><path d="M1050.1,469.7 L1052.4,472.6 L1052.3,478.3 L1054.3,482.7 L1054.8,484.9 L1056.6,487.3 L1057.8,491.3 L1060.1,496.0 L1062.0,500.0" stroke-width="2" opacity=".4"/><path d="M1052.3,478.3l4.0,-3.3" stroke-width="1.6" opacity=".6"/><path d="M1062.0,500.0l3.1,1.4" stroke-width="1.6" opacity=".6"/><path d="M938.9,599.0 L941.6,602.7 L945.7,607.9 L947.8,611.5 L948.7,614.2 L950.5,617.9 L954.3,620.7 L954.7,622.1 L959.1,626.8 L960.0,630.0" stroke-width="2" opacity=".4"/><path d="M945.7,607.9l-6.3,-2.1" stroke-width="1.6" opacity=".6"/><path d="M948.7,614.2l3.7,2.1" stroke-width="1.6" opacity=".6"/><path d="M954.3,620.7l-4.8,5.0" stroke-width="1.6" opacity=".6"/><path d="M959.1,626.8l0.5,3.0" stroke-width="1.6" opacity=".6"/><path d="M691.5,439.1 L690.0,445.1 L692.6,449.9 L694.0,452.3 L694.4,458.5 L697.2,461.3 L698.4,466.5 L700.0,470.0" stroke-width="2" opacity=".4"/><path d="M691.5,439.1l-4.7,-1.9" stroke-width="1.6" opacity=".6"/><path d="M692.6,449.9l-0.8,-3.2" stroke-width="1.6" opacity=".6"/><path d="M694.4,458.5l-2.1,6.2" stroke-width="1.6" opacity=".6"/><path d="M698.4,466.5l2.4,3.3" stroke-width="1.6" opacity=".6"/></g>
<g filter="url(#bl2)" fill="#a4a4a4"><ellipse cx="741.7" cy="384.1" rx="1.9" ry="1.7" opacity="0.29"/><ellipse cx="743.2" cy="383.3" rx="2.9" ry="1.1" opacity="0.37"/><ellipse cx="751.7" cy="388.2" rx="1.6" ry="1.2" opacity="0.49"/><ellipse cx="753.0" cy="384.3" rx="1.4" ry="2.2" opacity="0.35"/><ellipse cx="754.9" cy="390.4" rx="2.7" ry="1.2" opacity="0.45"/><ellipse cx="749.5" cy="388.7" rx="2.7" ry="2.1" opacity="0.30"/><ellipse cx="752.8" cy="389.4" rx="2.2" ry="1.5" opacity="0.28"/><ellipse cx="753.0" cy="392.0" rx="2.8" ry="1.1" opacity="0.39"/><ellipse cx="761.0" cy="390.8" rx="2.7" ry="1.2" opacity="0.40"/><ellipse cx="759.3" cy="395.5" rx="1.8" ry="1.5" opacity="0.40"/><ellipse cx="761.9" cy="397.1" rx="2.1" ry="1.6" opacity="0.26"/><ellipse cx="763.4" cy="395.7" rx="1.7" ry="2.0" opacity="0.44"/><ellipse cx="763.6" cy="398.4" rx="2.1" ry="1.1" opacity="0.28"/><ellipse cx="763.4" cy="397.7" rx="2.1" ry="1.7" opacity="0.26"/><ellipse cx="769.1" cy="400.9" rx="2.5" ry="2.0" opacity="0.38"/><ellipse cx="764.5" cy="404.3" rx="1.9" ry="2.2" opacity="0.28"/><ellipse cx="771.5" cy="409.4" rx="2.5" ry="2.1" opacity="0.30"/><ellipse cx="772.5" cy="405.3" rx="2.9" ry="2.2" opacity="0.29"/><ellipse cx="774.7" cy="411.1" rx="1.4" ry="1.5" opacity="0.44"/><ellipse cx="769.6" cy="410.9" rx="1.8" ry="2.1" opacity="0.29"/><ellipse cx="778.4" cy="414.9" rx="1.7" ry="1.3" opacity="0.38"/><ellipse cx="777.0" cy="407.8" rx="1.6" ry="1.2" opacity="0.48"/><ellipse cx="783.2" cy="416.7" rx="1.6" ry="2.0" opacity="0.28"/><ellipse cx="782.0" cy="414.6" rx="1.9" ry="2.1" opacity="0.39"/><ellipse cx="785.7" cy="419.4" rx="1.5" ry="2.3" opacity="0.41"/><ellipse cx="784.3" cy="418.7" rx="1.8" ry="2.3" opacity="0.39"/><ellipse cx="785.7" cy="422.1" rx="2.1" ry="1.2" opacity="0.44"/><ellipse cx="783.2" cy="422.5" rx="1.7" ry="1.8" opacity="0.50"/><ellipse cx="793.0" cy="421.9" rx="1.8" ry="1.0" opacity="0.26"/><ellipse cx="789.5" cy="421.5" rx="2.0" ry="1.7" opacity="0.47"/><ellipse cx="791.8" cy="422.6" rx="2.4" ry="1.0" opacity="0.25"/><ellipse cx="793.6" cy="421.6" rx="1.9" ry="1.3" opacity="0.40"/><ellipse cx="797.9" cy="424.2" rx="2.4" ry="1.6" opacity="0.28"/><ellipse cx="800.6" cy="424.6" rx="1.6" ry="1.1" opacity="0.41"/><ellipse cx="802.9" cy="431.4" rx="2.0" ry="1.3" opacity="0.25"/><ellipse cx="801.1" cy="429.6" rx="1.9" ry="1.8" opacity="0.36"/><ellipse cx="806.8" cy="435.2" rx="1.7" ry="2.2" opacity="0.26"/><ellipse cx="803.5" cy="432.5" rx="1.7" ry="1.1" opacity="0.44"/><ellipse cx="803.6" cy="435.5" rx="2.9" ry="1.2" opacity="0.30"/><ellipse cx="808.3" cy="435.2" rx="2.4" ry="2.1" opacity="0.29"/><ellipse cx="807.0" cy="436.9" rx="1.4" ry="2.2" opacity="0.45"/><ellipse cx="810.3" cy="434.5" rx="2.7" ry="2.0" opacity="0.37"/><ellipse cx="815.5" cy="440.7" rx="1.7" ry="1.1" opacity="0.31"/><ellipse cx="809.8" cy="439.7" rx="2.6" ry="1.9" opacity="0.46"/><ellipse cx="817.1" cy="442.2" rx="2.2" ry="1.6" opacity="0.45"/><ellipse cx="815.6" cy="442.2" rx="2.4" ry="2.3" opacity="0.30"/><ellipse cx="822.9" cy="444.3" rx="1.7" ry="1.3" opacity="0.44"/><ellipse cx="823.4" cy="450.1" rx="1.9" ry="2.1" opacity="0.33"/><ellipse cx="818.9" cy="452.9" rx="2.4" ry="1.9" opacity="0.42"/><ellipse cx="824.9" cy="449.4" rx="2.7" ry="1.9" opacity="0.46"/><ellipse cx="824.9" cy="455.6" rx="2.3" ry="1.4" opacity="0.30"/><ellipse cx="826.3" cy="450.4" rx="2.8" ry="1.2" opacity="0.26"/><ellipse cx="826.3" cy="458.7" rx="1.9" ry="1.2" opacity="0.26"/><ellipse cx="825.8" cy="456.8" rx="2.4" ry="1.9" opacity="0.43"/><ellipse cx="827.9" cy="460.6" rx="1.9" ry="2.1" opacity="0.45"/><ellipse cx="834.5" cy="456.4" rx="2.8" ry="2.2" opacity="0.49"/><ellipse cx="832.3" cy="459.2" rx="1.5" ry="1.0" opacity="0.46"/><ellipse cx="837.9" cy="462.6" rx="2.7" ry="1.8" opacity="0.32"/><ellipse cx="835.2" cy="463.1" rx="2.6" ry="1.3" opacity="0.33"/><ellipse cx="837.8" cy="462.5" rx="1.7" ry="1.4" opacity="0.43"/><ellipse cx="841.4" cy="464.8" rx="2.9" ry="1.7" opacity="0.46"/><ellipse cx="843.4" cy="462.4" rx="2.0" ry="1.6" opacity="0.44"/><ellipse cx="845.3" cy="468.4" rx="2.2" ry="1.3" opacity="0.47"/><ellipse cx="843.3" cy="469.3" rx="1.6" ry="1.0" opacity="0.30"/><ellipse cx="854.2" cy="473.3" rx="1.3" ry="1.6" opacity="0.37"/><ellipse cx="854.5" cy="467.0" rx="2.1" ry="1.5" opacity="0.46"/><ellipse cx="852.7" cy="471.6" rx="1.8" ry="1.3" opacity="0.42"/><ellipse cx="854.6" cy="465.0" rx="2.4" ry="1.1" opacity="0.45"/><ellipse cx="861.3" cy="471.4" rx="2.4" ry="1.5" opacity="0.35"/><ellipse cx="858.8" cy="472.2" rx="1.4" ry="2.2" opacity="0.26"/><ellipse cx="859.2" cy="470.3" rx="2.8" ry="1.7" opacity="0.34"/><ellipse cx="864.6" cy="470.1" rx="2.1" ry="1.7" opacity="0.44"/><ellipse cx="868.8" cy="474.1" rx="1.9" ry="1.4" opacity="0.29"/><ellipse cx="869.5" cy="474.3" rx="2.6" ry="1.2" opacity="0.36"/><ellipse cx="873.1" cy="475.8" rx="1.5" ry="1.6" opacity="0.47"/><ellipse cx="868.8" cy="472.7" rx="1.8" ry="1.9" opacity="0.46"/><ellipse cx="872.5" cy="472.2" rx="1.7" ry="1.4" opacity="0.38"/><ellipse cx="872.6" cy="473.6" rx="1.6" ry="2.3" opacity="0.43"/><ellipse cx="875.0" cy="481.9" rx="1.5" ry="1.5" opacity="0.50"/><ellipse cx="880.5" cy="480.0" rx="2.0" ry="1.3" opacity="0.41"/><ellipse cx="881.1" cy="478.9" rx="2.0" ry="1.0" opacity="0.35"/><ellipse cx="886.6" cy="482.8" rx="2.2" ry="1.8" opacity="0.37"/><ellipse cx="885.1" cy="482.8" rx="2.0" ry="2.0" opacity="0.48"/><ellipse cx="887.4" cy="482.6" rx="2.6" ry="1.5" opacity="0.31"/><circle cx="762.1" cy="402.2" r="1.1" opacity=".6"/><circle cx="786.6" cy="419.1" r="1.5" opacity=".6"/><circle cx="824.6" cy="454.5" r="1.5" opacity=".6"/><circle cx="833.0" cy="458.8" r="1.9" opacity=".6"/><circle cx="848.4" cy="472.3" r="2.0" opacity=".6"/><circle cx="860.3" cy="466.4" r="2.2" opacity=".6"/><circle cx="878.6" cy="473.5" r="2.0" opacity=".6"/><circle cx="881.1" cy="476.3" r="1.9" opacity=".6"/><ellipse cx="858.1" cy="319.5" rx="2.8" ry="2.0" opacity="0.29"/><ellipse cx="862.5" cy="323.1" rx="2.6" ry="1.9" opacity="0.47"/><ellipse cx="863.9" cy="329.8" rx="1.6" ry="1.9" opacity="0.38"/><ellipse cx="863.5" cy="326.6" rx="2.8" ry="1.7" opacity="0.32"/><ellipse cx="862.1" cy="328.9" rx="2.1" ry="1.1" opacity="0.37"/><ellipse cx="861.3" cy="331.7" rx="2.1" ry="1.7" opacity="0.47"/><ellipse cx="863.1" cy="337.9" rx="2.1" ry="1.7" opacity="0.42"/><ellipse cx="869.8" cy="334.2" rx="2.0" ry="2.2" opacity="0.27"/><ellipse cx="871.2" cy="342.0" rx="1.3" ry="1.8" opacity="0.42"/><ellipse cx="873.5" cy="339.5" rx="3.0" ry="1.7" opacity="0.37"/><ellipse cx="872.9" cy="341.3" rx="2.5" ry="1.8" opacity="0.33"/><ellipse cx="872.6" cy="343.9" rx="2.1" ry="1.7" opacity="0.44"/><ellipse cx="867.7" cy="348.3" rx="2.0" ry="1.7" opacity="0.46"/><ellipse cx="868.4" cy="351.5" rx="2.0" ry="1.7" opacity="0.32"/><ellipse cx="865.6" cy="356.8" rx="2.4" ry="2.0" opacity="0.33"/><ellipse cx="864.1" cy="351.4" rx="2.3" ry="1.8" opacity="0.45"/><ellipse cx="861.1" cy="356.3" rx="2.8" ry="1.7" opacity="0.26"/><ellipse cx="863.2" cy="350.6" rx="1.6" ry="2.2" opacity="0.40"/><ellipse cx="862.0" cy="363.7" rx="2.8" ry="1.8" opacity="0.40"/><ellipse cx="861.7" cy="362.9" rx="2.3" ry="1.9" opacity="0.30"/><ellipse cx="861.8" cy="362.9" rx="2.6" ry="1.1" opacity="0.30"/><ellipse cx="856.8" cy="365.4" rx="2.9" ry="1.9" opacity="0.34"/><ellipse cx="860.4" cy="369.9" rx="2.3" ry="1.3" opacity="0.33"/><ellipse cx="857.2" cy="366.1" rx="2.0" ry="1.8" opacity="0.48"/><ellipse cx="853.6" cy="374.7" rx="1.4" ry="1.2" opacity="0.45"/><ellipse cx="857.8" cy="377.5" rx="2.1" ry="1.0" opacity="0.35"/><ellipse cx="857.7" cy="381.5" rx="3.0" ry="1.6" opacity="0.35"/><ellipse cx="853.8" cy="379.2" rx="1.7" ry="1.2" opacity="0.25"/><circle cx="866.4" cy="329.2" r="1.9" opacity=".6"/><circle cx="869.1" cy="352.1" r="2.2" opacity=".6"/><circle cx="855.6" cy="364.8" r="2.0" opacity=".6"/><circle cx="860.8" cy="374.0" r="1.1" opacity=".6"/><ellipse cx="801.2" cy="304.5" rx="2.3" ry="1.4" opacity="0.27"/><ellipse cx="801.4" cy="303.9" rx="2.7" ry="1.4" opacity="0.40"/><ellipse cx="805.1" cy="307.5" rx="2.3" ry="1.4" opacity="0.36"/><ellipse cx="804.4" cy="303.9" rx="2.5" ry="1.8" opacity="0.47"/><ellipse cx="806.4" cy="305.8" rx="1.3" ry="1.3" opacity="0.36"/><ellipse cx="804.6" cy="310.1" rx="2.8" ry="1.1" opacity="0.46"/><ellipse cx="810.6" cy="312.4" rx="2.3" ry="1.4" opacity="0.46"/><ellipse cx="810.5" cy="310.9" rx="2.9" ry="1.5" opacity="0.27"/><ellipse cx="812.8" cy="313.5" rx="1.6" ry="2.0" opacity="0.48"/><ellipse cx="810.3" cy="311.9" rx="2.5" ry="1.6" opacity="0.30"/><ellipse cx="813.2" cy="316.5" rx="2.6" ry="1.6" opacity="0.27"/><ellipse cx="817.6" cy="316.7" rx="1.7" ry="1.8" opacity="0.47"/><ellipse cx="822.1" cy="316.2" rx="2.1" ry="1.8" opacity="0.30"/><ellipse cx="816.5" cy="313.4" rx="2.5" ry="1.5" opacity="0.39"/><circle cx="802.6" cy="301.0" r="1.1" opacity=".6"/><ellipse cx="824.4" cy="291.8" rx="2.6" ry="2.1" opacity="0.49"/><ellipse cx="823.0" cy="284.5" rx="1.6" ry="1.2" opacity="0.27"/><ellipse cx="823.2" cy="292.8" rx="2.8" ry="1.6" opacity="0.49"/><ellipse cx="830.1" cy="288.9" rx="2.3" ry="1.5" opacity="0.28"/><ellipse cx="833.7" cy="293.1" rx="2.3" ry="1.8" opacity="0.49"/><ellipse cx="831.4" cy="294.1" rx="2.1" ry="1.2" opacity="0.49"/><circle cx="820.3" cy="285.8" r="1.4" opacity=".6"/><ellipse cx="793.2" cy="242.5" rx="1.4" ry="1.2" opacity="0.44"/><ellipse cx="795.5" cy="240.1" rx="1.8" ry="1.8" opacity="0.44"/><ellipse cx="791.2" cy="235.7" rx="1.7" ry="1.2" opacity="0.37"/><ellipse cx="791.7" cy="235.0" rx="1.5" ry="1.9" opacity="0.25"/><ellipse cx="797.7" cy="230.6" rx="1.4" ry="2.2" opacity="0.31"/><ellipse cx="799.5" cy="235.9" rx="2.8" ry="1.2" opacity="0.36"/><circle cx="797.3" cy="229.4" r="1.3" opacity=".6"/><ellipse cx="944.6" cy="391.2" rx="2.5" ry="1.5" opacity="0.44"/><ellipse cx="938.2" cy="395.6" rx="2.9" ry="1.6" opacity="0.38"/><ellipse cx="945.4" cy="395.2" rx="1.3" ry="2.3" opacity="0.31"/><ellipse cx="942.6" cy="391.8" rx="1.7" ry="2.1" opacity="0.26"/><ellipse cx="944.9" cy="400.9" rx="1.6" ry="1.0" opacity="0.40"/><ellipse cx="948.7" cy="399.5" rx="2.5" ry="1.1" opacity="0.47"/><ellipse cx="950.5" cy="399.3" rx="1.5" ry="1.6" opacity="0.38"/><ellipse cx="947.0" cy="399.9" rx="2.0" ry="1.2" opacity="0.40"/><ellipse cx="953.2" cy="406.2" rx="2.3" ry="2.0" opacity="0.29"/><ellipse cx="952.9" cy="412.5" rx="2.0" ry="1.5" opacity="0.46"/><ellipse cx="952.7" cy="410.2" rx="2.9" ry="2.0" opacity="0.33"/><ellipse cx="950.4" cy="409.7" rx="2.0" ry="2.3" opacity="0.45"/><ellipse cx="958.3" cy="418.0" rx="2.7" ry="1.1" opacity="0.38"/><ellipse cx="958.6" cy="418.9" rx="1.7" ry="1.5" opacity="0.41"/><ellipse cx="957.1" cy="419.1" rx="1.4" ry="1.6" opacity="0.38"/><ellipse cx="954.4" cy="416.0" rx="2.9" ry="2.0" opacity="0.48"/><ellipse cx="961.8" cy="424.6" rx="2.8" ry="2.2" opacity="0.26"/><ellipse cx="961.9" cy="420.3" rx="2.5" ry="1.4" opacity="0.39"/><ellipse cx="966.2" cy="428.5" rx="1.7" ry="1.7" opacity="0.36"/><ellipse cx="966.5" cy="425.8" rx="1.8" ry="1.8" opacity="0.28"/><ellipse cx="963.9" cy="434.1" rx="2.2" ry="1.3" opacity="0.37"/><ellipse cx="963.4" cy="427.6" rx="1.5" ry="1.2" opacity="0.32"/><ellipse cx="964.9" cy="431.6" rx="1.7" ry="1.1" opacity="0.39"/><ellipse cx="968.4" cy="434.2" rx="2.3" ry="1.8" opacity="0.30"/><ellipse cx="969.5" cy="436.8" rx="2.2" ry="1.8" opacity="0.37"/><ellipse cx="966.3" cy="435.0" rx="1.7" ry="1.7" opacity="0.35"/><ellipse cx="973.2" cy="438.6" rx="1.9" ry="2.1" opacity="0.31"/><ellipse cx="972.9" cy="442.4" rx="1.8" ry="2.3" opacity="0.32"/><ellipse cx="973.1" cy="441.1" rx="1.4" ry="2.1" opacity="0.36"/><ellipse cx="967.4" cy="442.9" rx="2.0" ry="2.0" opacity="0.28"/><ellipse cx="965.4" cy="453.9" rx="2.6" ry="1.2" opacity="0.33"/><ellipse cx="966.4" cy="451.6" rx="2.3" ry="2.1" opacity="0.46"/><ellipse cx="965.6" cy="455.6" rx="2.6" ry="2.0" opacity="0.37"/><ellipse cx="967.8" cy="455.3" rx="2.9" ry="1.2" opacity="0.47"/><ellipse cx="960.8" cy="460.6" rx="2.3" ry="1.6" opacity="0.49"/><ellipse cx="965.4" cy="457.8" rx="2.6" ry="2.1" opacity="0.40"/><ellipse cx="961.6" cy="461.5" rx="2.1" ry="1.9" opacity="0.32"/><ellipse cx="961.7" cy="462.4" rx="2.0" ry="1.4" opacity="0.45"/><ellipse cx="969.4" cy="463.0" rx="2.1" ry="1.2" opacity="0.33"/><ellipse cx="963.8" cy="463.6" rx="2.3" ry="1.1" opacity="0.48"/><ellipse cx="967.3" cy="471.0" rx="2.7" ry="2.2" opacity="0.30"/><ellipse cx="968.1" cy="471.5" rx="1.3" ry="1.1" opacity="0.39"/><ellipse cx="973.4" cy="472.8" rx="2.6" ry="1.7" opacity="0.50"/><ellipse cx="973.6" cy="469.5" rx="2.5" ry="1.5" opacity="0.34"/><ellipse cx="977.0" cy="473.5" rx="2.9" ry="1.9" opacity="0.38"/><ellipse cx="973.0" cy="473.7" rx="2.0" ry="1.7" opacity="0.39"/><ellipse cx="981.7" cy="480.5" rx="2.1" ry="1.6" opacity="0.41"/><ellipse cx="982.7" cy="475.5" rx="2.2" ry="2.1" opacity="0.29"/><ellipse cx="980.1" cy="482.5" rx="2.7" ry="1.7" opacity="0.28"/><ellipse cx="984.7" cy="480.2" rx="2.7" ry="2.3" opacity="0.47"/><ellipse cx="986.0" cy="480.7" rx="1.8" ry="1.7" opacity="0.38"/><ellipse cx="984.1" cy="480.9" rx="2.4" ry="1.8" opacity="0.34"/><ellipse cx="991.9" cy="485.7" rx="1.4" ry="1.5" opacity="0.45"/><ellipse cx="986.4" cy="486.2" rx="1.3" ry="1.4" opacity="0.46"/><ellipse cx="991.5" cy="490.7" rx="1.6" ry="1.6" opacity="0.39"/><ellipse cx="988.9" cy="490.5" rx="2.2" ry="2.3" opacity="0.39"/><ellipse cx="994.3" cy="488.3" rx="1.6" ry="2.0" opacity="0.28"/><ellipse cx="991.8" cy="488.7" rx="2.2" ry="2.1" opacity="0.40"/><ellipse cx="999.6" cy="491.8" rx="1.3" ry="2.0" opacity="0.33"/><ellipse cx="998.8" cy="494.2" rx="1.6" ry="1.3" opacity="0.27"/><ellipse cx="1004.9" cy="499.6" rx="1.9" ry="1.6" opacity="0.35"/><ellipse cx="998.1" cy="502.1" rx="2.3" ry="2.2" opacity="0.36"/><ellipse cx="1005.2" cy="498.1" rx="1.4" ry="2.2" opacity="0.46"/><ellipse cx="1002.8" cy="503.3" rx="2.7" ry="1.4" opacity="0.40"/><ellipse cx="1009.4" cy="504.7" rx="2.9" ry="1.3" opacity="0.35"/><ellipse cx="1007.4" cy="502.5" rx="1.8" ry="2.1" opacity="0.37"/><ellipse cx="1012.1" cy="505.6" rx="1.6" ry="1.5" opacity="0.30"/><ellipse cx="1013.5" cy="506.0" rx="2.3" ry="1.1" opacity="0.38"/><ellipse cx="1010.8" cy="510.2" rx="1.4" ry="1.2" opacity="0.46"/><ellipse cx="1010.5" cy="508.9" rx="1.6" ry="1.4" opacity="0.31"/><ellipse cx="1012.2" cy="515.0" rx="1.9" ry="1.2" opacity="0.43"/><ellipse cx="1012.6" cy="511.8" rx="2.7" ry="1.2" opacity="0.36"/><ellipse cx="1023.5" cy="517.7" rx="1.6" ry="1.5" opacity="0.43"/><ellipse cx="1019.9" cy="518.9" rx="1.7" ry="2.2" opacity="0.38"/><ellipse cx="1019.5" cy="518.7" rx="1.5" ry="1.9" opacity="0.32"/><ellipse cx="1024.9" cy="519.8" rx="1.9" ry="1.3" opacity="0.40"/><ellipse cx="1024.1" cy="524.6" rx="1.5" ry="1.7" opacity="0.39"/><ellipse cx="1024.6" cy="523.8" rx="2.0" ry="1.9" opacity="0.39"/><ellipse cx="1027.7" cy="521.3" rx="1.4" ry="1.2" opacity="0.46"/><ellipse cx="1027.7" cy="523.5" rx="1.5" ry="1.7" opacity="0.34"/><ellipse cx="1034.2" cy="523.7" rx="1.4" ry="1.4" opacity="0.31"/><ellipse cx="1031.3" cy="527.1" rx="1.8" ry="1.5" opacity="0.48"/><ellipse cx="1037.8" cy="531.1" rx="2.8" ry="1.2" opacity="0.32"/><ellipse cx="1031.9" cy="529.4" rx="2.4" ry="1.5" opacity="0.35"/><ellipse cx="1041.6" cy="531.1" rx="1.7" ry="2.1" opacity="0.34"/><ellipse cx="1041.3" cy="527.0" rx="1.5" ry="2.2" opacity="0.43"/><ellipse cx="1045.3" cy="530.7" rx="1.4" ry="1.2" opacity="0.30"/><ellipse cx="1042.0" cy="533.4" rx="1.4" ry="1.4" opacity="0.41"/><ellipse cx="1044.5" cy="539.6" rx="2.3" ry="1.9" opacity="0.31"/><ellipse cx="1046.5" cy="538.3" rx="1.9" ry="1.0" opacity="0.46"/><ellipse cx="1053.4" cy="540.7" rx="1.4" ry="2.1" opacity="0.40"/><ellipse cx="1047.5" cy="540.4" rx="1.5" ry="2.0" opacity="0.30"/><ellipse cx="1057.3" cy="547.0" rx="1.4" ry="1.9" opacity="0.35"/><ellipse cx="1056.0" cy="547.6" rx="1.8" ry="1.1" opacity="0.49"/><circle cx="950.4" cy="413.3" r="1.2" opacity=".6"/><circle cx="957.0" cy="418.5" r="1.3" opacity=".6"/><circle cx="960.1" cy="428.5" r="1.2" opacity=".6"/><circle cx="975.2" cy="442.3" r="1.4" opacity=".6"/><circle cx="966.1" cy="452.0" r="2.0" opacity=".6"/><circle cx="971.9" cy="472.5" r="1.2" opacity=".6"/><circle cx="977.7" cy="477.0" r="1.6" opacity=".6"/><circle cx="992.9" cy="487.1" r="1.1" opacity=".6"/><circle cx="998.5" cy="499.4" r="1.0" opacity=".6"/><circle cx="1018.3" cy="511.6" r="1.0" opacity=".6"/><circle cx="1043.1" cy="532.8" r="1.9" opacity=".6"/><circle cx="1045.7" cy="537.4" r="1.4" opacity=".6"/><circle cx="1049.4" cy="545.7" r="1.8" opacity=".6"/><ellipse cx="985.5" cy="410.4" rx="1.5" ry="1.1" opacity="0.36"/><ellipse cx="983.5" cy="408.4" rx="1.3" ry="2.1" opacity="0.46"/><ellipse cx="990.8" cy="410.2" rx="1.8" ry="1.9" opacity="0.38"/><ellipse cx="987.9" cy="409.5" rx="2.0" ry="1.9" opacity="0.46"/><ellipse cx="992.9" cy="410.3" rx="1.8" ry="1.6" opacity="0.39"/><ellipse cx="988.4" cy="410.6" rx="1.4" ry="1.4" opacity="0.37"/><ellipse cx="994.7" cy="419.2" rx="2.8" ry="2.3" opacity="0.49"/><ellipse cx="991.9" cy="418.4" rx="1.4" ry="1.9" opacity="0.40"/><ellipse cx="993.0" cy="419.3" rx="2.9" ry="1.6" opacity="0.41"/><ellipse cx="993.0" cy="417.5" rx="2.8" ry="1.0" opacity="0.30"/><ellipse cx="998.7" cy="422.1" rx="1.4" ry="1.9" opacity="0.34"/><ellipse cx="997.9" cy="421.8" rx="2.2" ry="1.7" opacity="0.35"/><ellipse cx="995.9" cy="424.4" rx="2.8" ry="1.7" opacity="0.28"/><ellipse cx="1001.9" cy="425.0" rx="1.5" ry="1.7" opacity="0.31"/><circle cx="988.7" cy="408.7" r="1.5" opacity=".6"/><ellipse cx="1001.3" cy="433.4" rx="1.9" ry="1.0" opacity="0.40"/><ellipse cx="1002.5" cy="433.9" rx="2.5" ry="1.6" opacity="0.47"/><ellipse cx="1010.0" cy="439.1" rx="2.3" ry="2.2" opacity="0.47"/><ellipse cx="1006.3" cy="438.1" rx="1.9" ry="2.0" opacity="0.42"/><ellipse cx="1014.3" cy="437.3" rx="1.9" ry="2.0" opacity="0.49"/><ellipse cx="1013.4" cy="436.7" rx="2.3" ry="1.1" opacity="0.39"/><ellipse cx="1014.4" cy="442.3" rx="2.9" ry="1.9" opacity="0.31"/><ellipse cx="1009.6" cy="445.0" rx="2.7" ry="1.8" opacity="0.28"/><ellipse cx="1011.7" cy="445.0" rx="2.7" ry="1.2" opacity="0.39"/><ellipse cx="1013.8" cy="449.7" rx="1.9" ry="1.2" opacity="0.47"/><ellipse cx="1016.9" cy="453.0" rx="2.7" ry="2.2" opacity="0.25"/><ellipse cx="1015.3" cy="448.7" rx="2.2" ry="2.1" opacity="0.45"/><ellipse cx="1016.3" cy="451.5" rx="2.7" ry="1.9" opacity="0.35"/><ellipse cx="1019.8" cy="451.3" rx="2.7" ry="1.5" opacity="0.47"/><circle cx="1003.1" cy="432.6" r="2.1" opacity=".6"/><circle cx="1011.3" cy="441.1" r="1.5" opacity=".6"/><circle cx="1010.7" cy="447.8" r="2.2" opacity=".6"/><circle cx="1017.7" cy="454.0" r="1.3" opacity=".6"/><ellipse cx="925.2" cy="381.6" rx="2.5" ry="1.4" opacity="0.44"/><ellipse cx="924.1" cy="378.2" rx="2.4" ry="1.5" opacity="0.39"/><ellipse cx="925.6" cy="379.0" rx="1.9" ry="1.4" opacity="0.50"/><ellipse cx="926.2" cy="381.4" rx="1.7" ry="1.3" opacity="0.34"/><ellipse cx="923.7" cy="380.2" rx="2.8" ry="1.6" opacity="0.36"/><ellipse cx="927.2" cy="382.6" rx="1.6" ry="1.1" opacity="0.33"/><ellipse cx="930.3" cy="389.9" rx="2.2" ry="2.2" opacity="0.34"/><ellipse cx="935.2" cy="388.8" rx="1.4" ry="1.2" opacity="0.40"/><ellipse cx="938.7" cy="389.3" rx="2.6" ry="1.6" opacity="0.47"/><ellipse cx="931.4" cy="390.3" rx="2.8" ry="1.4" opacity="0.31"/><ellipse cx="933.6" cy="389.9" rx="1.8" ry="1.9" opacity="0.30"/><ellipse cx="936.6" cy="390.2" rx="2.3" ry="2.1" opacity="0.41"/><ellipse cx="936.9" cy="398.8" rx="2.9" ry="1.8" opacity="0.27"/><ellipse cx="941.8" cy="399.9" rx="1.9" ry="1.2" opacity="0.30"/><ellipse cx="943.3" cy="402.0" rx="2.4" ry="2.2" opacity="0.30"/><ellipse cx="941.6" cy="401.0" rx="2.4" ry="1.5" opacity="0.42"/><circle cx="923.5" cy="376.4" r="1.6" opacity=".6"/><circle cx="930.9" cy="384.8" r="2.2" opacity=".6"/><circle cx="930.8" cy="387.0" r="1.2" opacity=".6"/><circle cx="942.5" cy="396.1" r="1.6" opacity=".6"/><ellipse cx="930.9" cy="322.1" rx="1.7" ry="1.9" opacity="0.44"/><ellipse cx="934.5" cy="318.6" rx="2.6" ry="2.3" opacity="0.36"/><ellipse cx="934.7" cy="323.5" rx="2.9" ry="1.2" opacity="0.25"/><ellipse cx="936.3" cy="324.5" rx="2.6" ry="1.5" opacity="0.50"/><ellipse cx="937.8" cy="328.1" rx="1.5" ry="1.0" opacity="0.28"/><ellipse cx="936.5" cy="326.0" rx="2.2" ry="1.2" opacity="0.48"/><circle cx="935.3" cy="328.8" r="1.3" opacity=".6"/><ellipse cx="998.8" cy="576.0" rx="1.7" ry="1.7" opacity="0.29"/><ellipse cx="1003.4" cy="575.0" rx="1.8" ry="2.0" opacity="0.46"/><ellipse cx="1000.7" cy="573.2" rx="2.1" ry="2.2" opacity="0.29"/><ellipse cx="1003.9" cy="575.3" rx="2.1" ry="1.8" opacity="0.47"/><ellipse cx="1003.6" cy="580.9" rx="1.9" ry="2.0" opacity="0.47"/><ellipse cx="1003.4" cy="580.8" rx="3.0" ry="1.4" opacity="0.26"/><ellipse cx="1004.4" cy="586.0" rx="1.3" ry="2.2" opacity="0.29"/><ellipse cx="1009.4" cy="579.0" rx="1.6" ry="1.9" opacity="0.27"/><ellipse cx="1008.5" cy="588.0" rx="2.5" ry="2.1" opacity="0.49"/><ellipse cx="1006.1" cy="582.6" rx="2.6" ry="1.9" opacity="0.26"/><ellipse cx="1012.7" cy="585.3" rx="2.0" ry="1.1" opacity="0.25"/><ellipse cx="1016.6" cy="586.0" rx="2.8" ry="1.2" opacity="0.37"/><ellipse cx="1013.8" cy="590.5" rx="1.6" ry="1.9" opacity="0.29"/><ellipse cx="1018.6" cy="591.1" rx="1.5" ry="1.5" opacity="0.37"/><ellipse cx="1022.0" cy="592.0" rx="1.7" ry="2.3" opacity="0.47"/><ellipse cx="1020.5" cy="591.4" rx="1.6" ry="1.3" opacity="0.27"/><ellipse cx="1018.9" cy="597.3" rx="2.0" ry="1.7" opacity="0.34"/><ellipse cx="1018.7" cy="598.8" rx="2.4" ry="1.7" opacity="0.39"/><ellipse cx="1028.6" cy="603.2" rx="2.8" ry="1.9" opacity="0.35"/><ellipse cx="1025.6" cy="598.7" rx="3.0" ry="1.5" opacity="0.35"/><ellipse cx="1027.0" cy="598.4" rx="3.0" ry="1.0" opacity="0.40"/><ellipse cx="1031.2" cy="599.3" rx="2.3" ry="1.5" opacity="0.31"/><ellipse cx="1028.3" cy="601.7" rx="2.7" ry="2.0" opacity="0.48"/><ellipse cx="1027.1" cy="606.4" rx="1.9" ry="1.8" opacity="0.39"/><ellipse cx="1032.0" cy="610.9" rx="1.3" ry="2.0" opacity="0.46"/><ellipse cx="1033.6" cy="607.8" rx="3.0" ry="1.3" opacity="0.41"/><ellipse cx="1039.9" cy="610.5" rx="2.5" ry="1.5" opacity="0.38"/><ellipse cx="1038.8" cy="612.8" rx="1.8" ry="1.8" opacity="0.39"/><ellipse cx="1037.8" cy="614.9" rx="1.8" ry="2.2" opacity="0.37"/><ellipse cx="1041.8" cy="614.2" rx="2.1" ry="1.3" opacity="0.29"/><circle cx="1002.6" cy="581.1" r="1.6" opacity=".6"/><circle cx="1026.3" cy="604.3" r="1.6" opacity=".6"/><circle cx="1039.8" cy="617.0" r="1.9" opacity=".6"/><ellipse cx="680.6" cy="557.5" rx="2.4" ry="1.4" opacity="0.27"/><ellipse cx="681.0" cy="557.6" rx="2.2" ry="1.6" opacity="0.48"/><ellipse cx="685.7" cy="555.3" rx="2.3" ry="1.6" opacity="0.37"/><ellipse cx="686.3" cy="558.4" rx="2.1" ry="2.2" opacity="0.36"/><ellipse cx="687.1" cy="559.7" rx="2.7" ry="1.9" opacity="0.44"/><ellipse cx="686.4" cy="555.9" rx="2.5" ry="1.7" opacity="0.44"/><ellipse cx="693.7" cy="557.6" rx="1.7" ry="1.1" opacity="0.45"/><ellipse cx="688.3" cy="557.3" rx="2.6" ry="1.7" opacity="0.26"/><ellipse cx="696.0" cy="562.8" rx="2.1" ry="1.1" opacity="0.42"/><ellipse cx="693.9" cy="561.8" rx="3.0" ry="2.1" opacity="0.47"/><ellipse cx="697.4" cy="560.3" rx="2.2" ry="1.0" opacity="0.50"/><ellipse cx="698.4" cy="559.8" rx="1.8" ry="1.3" opacity="0.46"/><ellipse cx="703.5" cy="564.7" rx="2.0" ry="1.1" opacity="0.33"/><ellipse cx="706.0" cy="567.1" rx="2.8" ry="1.3" opacity="0.30"/><ellipse cx="703.7" cy="564.8" rx="1.9" ry="1.6" opacity="0.37"/><ellipse cx="708.0" cy="563.4" rx="2.7" ry="1.3" opacity="0.48"/><ellipse cx="712.2" cy="563.6" rx="1.8" ry="1.7" opacity="0.35"/><ellipse cx="712.2" cy="565.8" rx="1.8" ry="2.0" opacity="0.32"/><ellipse cx="717.5" cy="570.2" rx="2.3" ry="1.6" opacity="0.48"/><ellipse cx="715.3" cy="570.8" rx="1.4" ry="1.6" opacity="0.41"/><ellipse cx="719.0" cy="570.5" rx="1.4" ry="1.8" opacity="0.30"/><ellipse cx="726.0" cy="568.1" rx="2.7" ry="1.6" opacity="0.42"/><ellipse cx="727.2" cy="568.9" rx="1.7" ry="2.1" opacity="0.29"/><ellipse cx="729.1" cy="568.2" rx="1.5" ry="1.1" opacity="0.45"/><ellipse cx="734.5" cy="569.8" rx="2.4" ry="1.3" opacity="0.48"/><ellipse cx="732.3" cy="567.7" rx="1.4" ry="1.9" opacity="0.26"/><ellipse cx="736.3" cy="570.2" rx="1.7" ry="1.8" opacity="0.33"/><ellipse cx="734.1" cy="569.1" rx="2.9" ry="1.4" opacity="0.46"/><ellipse cx="735.8" cy="577.0" rx="3.0" ry="1.5" opacity="0.26"/><ellipse cx="737.6" cy="575.8" rx="1.7" ry="1.7" opacity="0.27"/><ellipse cx="742.1" cy="577.5" rx="2.0" ry="1.9" opacity="0.28"/><ellipse cx="745.0" cy="572.7" rx="2.9" ry="2.3" opacity="0.48"/><ellipse cx="747.7" cy="577.3" rx="1.9" ry="2.0" opacity="0.37"/><ellipse cx="750.9" cy="575.7" rx="2.1" ry="2.1" opacity="0.40"/><ellipse cx="750.9" cy="576.4" rx="1.5" ry="1.4" opacity="0.47"/><ellipse cx="753.3" cy="577.5" rx="2.9" ry="1.0" opacity="0.40"/><ellipse cx="759.0" cy="582.0" rx="2.9" ry="1.9" opacity="0.26"/><ellipse cx="753.9" cy="582.9" rx="1.7" ry="2.0" opacity="0.29"/><ellipse cx="760.4" cy="583.8" rx="1.4" ry="1.7" opacity="0.27"/><ellipse cx="758.5" cy="587.7" rx="2.3" ry="1.6" opacity="0.26"/><ellipse cx="763.1" cy="582.8" rx="2.4" ry="1.2" opacity="0.39"/><ellipse cx="761.8" cy="585.0" rx="2.4" ry="1.2" opacity="0.29"/><circle cx="682.4" cy="562.3" r="1.6" opacity=".6"/><circle cx="687.2" cy="560.0" r="1.1" opacity=".6"/><circle cx="699.3" cy="562.1" r="2.0" opacity=".6"/><circle cx="726.2" cy="569.4" r="1.6" opacity=".6"/><ellipse cx="711.6" cy="506.6" rx="2.9" ry="2.2" opacity="0.44"/><ellipse cx="717.2" cy="506.3" rx="2.3" ry="1.6" opacity="0.46"/><ellipse cx="720.0" cy="510.2" rx="1.8" ry="2.2" opacity="0.38"/><ellipse cx="721.3" cy="504.2" rx="2.9" ry="2.0" opacity="0.31"/><ellipse cx="722.0" cy="508.2" rx="1.6" ry="1.6" opacity="0.31"/><ellipse cx="719.2" cy="513.6" rx="2.5" ry="1.9" opacity="0.35"/><ellipse cx="725.6" cy="514.1" rx="2.5" ry="2.2" opacity="0.46"/><ellipse cx="722.6" cy="508.4" rx="2.4" ry="2.1" opacity="0.33"/><ellipse cx="726.0" cy="516.9" rx="2.6" ry="1.0" opacity="0.37"/><ellipse cx="721.3" cy="511.1" rx="2.7" ry="1.5" opacity="0.40"/><ellipse cx="729.6" cy="517.2" rx="1.7" ry="1.5" opacity="0.46"/><ellipse cx="730.9" cy="516.9" rx="1.4" ry="1.4" opacity="0.43"/><ellipse cx="730.6" cy="521.8" rx="2.7" ry="1.2" opacity="0.42"/><ellipse cx="727.4" cy="523.1" rx="1.6" ry="1.4" opacity="0.49"/><ellipse cx="732.8" cy="520.9" rx="2.8" ry="1.8" opacity="0.47"/><ellipse cx="733.1" cy="523.1" rx="2.9" ry="1.7" opacity="0.50"/><ellipse cx="735.2" cy="528.5" rx="1.6" ry="1.7" opacity="0.25"/><ellipse cx="735.1" cy="529.4" rx="2.1" ry="2.1" opacity="0.31"/><ellipse cx="742.2" cy="527.0" rx="2.2" ry="2.1" opacity="0.38"/><ellipse cx="742.4" cy="533.6" rx="2.8" ry="1.9" opacity="0.27"/><ellipse cx="747.4" cy="530.5" rx="2.9" ry="1.5" opacity="0.42"/><ellipse cx="747.4" cy="529.9" rx="2.2" ry="1.9" opacity="0.48"/><ellipse cx="749.0" cy="533.1" rx="3.0" ry="1.1" opacity="0.46"/><ellipse cx="750.5" cy="534.6" rx="2.1" ry="2.0" opacity="0.47"/><ellipse cx="755.6" cy="538.4" rx="1.4" ry="1.4" opacity="0.28"/><ellipse cx="757.3" cy="539.6" rx="1.5" ry="1.8" opacity="0.39"/><ellipse cx="752.8" cy="536.2" rx="2.6" ry="1.8" opacity="0.32"/><ellipse cx="758.5" cy="535.4" rx="2.2" ry="1.5" opacity="0.49"/><ellipse cx="761.1" cy="543.8" rx="2.5" ry="1.5" opacity="0.49"/><ellipse cx="761.6" cy="542.9" rx="1.8" ry="1.2" opacity="0.39"/><ellipse cx="766.5" cy="543.8" rx="1.9" ry="1.2" opacity="0.38"/><ellipse cx="766.9" cy="538.7" rx="2.6" ry="1.2" opacity="0.33"/><ellipse cx="763.6" cy="542.9" rx="2.0" ry="2.3" opacity="0.49"/><ellipse cx="764.6" cy="543.0" rx="2.9" ry="1.3" opacity="0.33"/><ellipse cx="768.5" cy="545.6" rx="1.7" ry="1.5" opacity="0.35"/><ellipse cx="772.7" cy="546.9" rx="1.6" ry="2.2" opacity="0.36"/><ellipse cx="776.7" cy="551.5" rx="2.6" ry="1.4" opacity="0.29"/><ellipse cx="776.1" cy="550.2" rx="2.2" ry="1.9" opacity="0.44"/><ellipse cx="775.2" cy="550.9" rx="2.9" ry="1.7" opacity="0.32"/><ellipse cx="778.0" cy="550.1" rx="2.6" ry="1.1" opacity="0.46"/><circle cx="712.0" cy="499.6" r="1.7" opacity=".6"/><circle cx="726.6" cy="518.9" r="1.8" opacity=".6"/><circle cx="736.6" cy="528.9" r="1.4" opacity=".6"/><circle cx="759.9" cy="544.9" r="1.8" opacity=".6"/><circle cx="770.6" cy="547.4" r="2.0" opacity=".6"/><ellipse cx="817.3" cy="585.4" rx="1.4" ry="1.6" opacity="0.39"/><ellipse cx="822.7" cy="583.5" rx="2.7" ry="1.1" opacity="0.31"/><ellipse cx="824.6" cy="587.3" rx="1.9" ry="1.7" opacity="0.30"/><ellipse cx="825.9" cy="586.2" rx="2.7" ry="2.1" opacity="0.38"/><ellipse cx="823.4" cy="592.5" rx="1.3" ry="1.7" opacity="0.36"/><ellipse cx="823.7" cy="591.3" rx="2.5" ry="1.8" opacity="0.35"/><ellipse cx="829.6" cy="592.0" rx="1.7" ry="2.1" opacity="0.50"/><ellipse cx="831.9" cy="595.0" rx="1.9" ry="2.3" opacity="0.27"/><ellipse cx="834.9" cy="589.7" rx="2.1" ry="1.9" opacity="0.43"/><ellipse cx="834.7" cy="591.4" rx="1.6" ry="1.5" opacity="0.32"/><ellipse cx="835.2" cy="594.4" rx="2.2" ry="1.6" opacity="0.30"/><ellipse cx="839.2" cy="590.1" rx="1.8" ry="1.7" opacity="0.43"/><ellipse cx="846.2" cy="598.4" rx="2.9" ry="2.2" opacity="0.43"/><ellipse cx="844.2" cy="592.9" rx="1.6" ry="1.0" opacity="0.47"/><ellipse cx="847.1" cy="597.2" rx="1.7" ry="1.5" opacity="0.29"/><ellipse cx="846.4" cy="600.1" rx="1.8" ry="1.1" opacity="0.29"/><ellipse cx="848.0" cy="600.4" rx="2.7" ry="1.6" opacity="0.28"/><ellipse cx="846.0" cy="594.4" rx="2.6" ry="1.6" opacity="0.50"/><ellipse cx="857.8" cy="603.6" rx="2.1" ry="2.1" opacity="0.28"/><ellipse cx="851.4" cy="601.8" rx="2.2" ry="1.3" opacity="0.31"/><ellipse cx="855.1" cy="604.1" rx="2.5" ry="2.2" opacity="0.50"/><ellipse cx="858.4" cy="602.7" rx="2.0" ry="2.1" opacity="0.46"/><ellipse cx="859.7" cy="597.5" rx="1.7" ry="1.8" opacity="0.34"/><ellipse cx="858.7" cy="604.1" rx="2.6" ry="1.6" opacity="0.26"/><ellipse cx="870.1" cy="603.9" rx="1.4" ry="1.4" opacity="0.41"/><ellipse cx="870.1" cy="603.5" rx="2.4" ry="1.3" opacity="0.31"/><ellipse cx="871.8" cy="605.0" rx="1.5" ry="1.8" opacity="0.28"/><ellipse cx="866.1" cy="605.6" rx="2.3" ry="1.8" opacity="0.43"/><ellipse cx="873.5" cy="603.5" rx="2.5" ry="1.1" opacity="0.37"/><ellipse cx="873.2" cy="608.4" rx="2.5" ry="1.3" opacity="0.41"/><circle cx="816.6" cy="591.3" r="1.7" opacity=".6"/><circle cx="826.1" cy="593.2" r="2.0" opacity=".6"/><circle cx="863.5" cy="598.8" r="1.9" opacity=".6"/><circle cx="877.1" cy="603.6" r="1.6" opacity=".6"/><ellipse cx="758.4" cy="479.3" rx="2.2" ry="1.4" opacity="0.35"/><ellipse cx="757.9" cy="484.8" rx="1.3" ry="2.1" opacity="0.45"/><ellipse cx="766.2" cy="483.7" rx="2.4" ry="1.3" opacity="0.36"/><ellipse cx="763.4" cy="490.6" rx="2.2" ry="1.5" opacity="0.27"/><ellipse cx="768.0" cy="492.9" rx="2.7" ry="1.1" opacity="0.34"/><ellipse cx="764.6" cy="492.2" rx="1.6" ry="1.8" opacity="0.49"/><ellipse cx="772.3" cy="489.5" rx="1.4" ry="1.1" opacity="0.42"/><ellipse cx="771.0" cy="493.6" rx="2.1" ry="1.5" opacity="0.40"/><ellipse cx="773.5" cy="499.7" rx="2.5" ry="2.0" opacity="0.48"/><ellipse cx="775.0" cy="498.1" rx="1.4" ry="1.9" opacity="0.46"/><ellipse cx="774.4" cy="503.4" rx="1.6" ry="2.2" opacity="0.36"/><ellipse cx="776.6" cy="498.4" rx="1.8" ry="1.5" opacity="0.33"/><ellipse cx="773.8" cy="502.5" rx="3.0" ry="1.9" opacity="0.48"/><ellipse cx="779.1" cy="505.7" rx="3.0" ry="2.0" opacity="0.32"/><circle cx="765.7" cy="487.1" r="1.4" opacity=".6"/><circle cx="778.3" cy="501.7" r="1.6" opacity=".6"/><ellipse cx="698.5" cy="368.1" rx="2.5" ry="2.3" opacity="0.29"/><ellipse cx="701.9" cy="371.5" rx="2.5" ry="2.0" opacity="0.44"/><ellipse cx="702.1" cy="372.5" rx="1.3" ry="1.9" opacity="0.30"/><ellipse cx="702.2" cy="378.2" rx="2.4" ry="1.8" opacity="0.41"/><ellipse cx="707.9" cy="379.9" rx="1.8" ry="1.1" opacity="0.27"/><ellipse cx="703.2" cy="377.2" rx="1.5" ry="1.1" opacity="0.37"/><ellipse cx="713.5" cy="382.7" rx="1.8" ry="2.0" opacity="0.29"/><ellipse cx="706.5" cy="379.7" rx="2.0" ry="1.9" opacity="0.36"/><ellipse cx="715.4" cy="381.2" rx="2.9" ry="1.4" opacity="0.46"/><ellipse cx="709.8" cy="387.0" rx="1.7" ry="2.1" opacity="0.45"/><ellipse cx="716.1" cy="383.4" rx="1.3" ry="1.2" opacity="0.48"/><ellipse cx="712.0" cy="386.4" rx="2.3" ry="1.9" opacity="0.30"/><ellipse cx="715.5" cy="387.0" rx="3.0" ry="1.5" opacity="0.41"/><ellipse cx="718.9" cy="388.0" rx="1.4" ry="1.0" opacity="0.46"/><ellipse cx="719.0" cy="395.7" rx="1.9" ry="1.9" opacity="0.28"/><ellipse cx="724.3" cy="390.0" rx="1.9" ry="1.7" opacity="0.28"/><circle cx="705.0" cy="367.2" r="1.2" opacity=".6"/><circle cx="713.7" cy="389.6" r="1.1" opacity=".6"/><ellipse cx="705.7" cy="337.2" rx="1.5" ry="1.1" opacity="0.34"/><ellipse cx="707.6" cy="341.1" rx="2.2" ry="1.1" opacity="0.31"/><ellipse cx="713.4" cy="338.7" rx="2.8" ry="2.3" opacity="0.46"/><ellipse cx="708.3" cy="341.7" rx="2.2" ry="1.3" opacity="0.29"/><ellipse cx="720.2" cy="338.4" rx="1.4" ry="1.3" opacity="0.48"/><ellipse cx="717.0" cy="342.5" rx="1.4" ry="1.6" opacity="0.33"/><ellipse cx="719.6" cy="345.3" rx="1.9" ry="1.2" opacity="0.50"/><ellipse cx="721.9" cy="341.4" rx="1.3" ry="1.8" opacity="0.38"/><ellipse cx="731.7" cy="257.2" rx="2.0" ry="1.2" opacity="0.30"/><ellipse cx="735.9" cy="261.6" rx="2.9" ry="1.5" opacity="0.42"/><ellipse cx="735.9" cy="266.6" rx="1.7" ry="1.6" opacity="0.38"/><ellipse cx="743.4" cy="263.0" rx="3.0" ry="1.8" opacity="0.30"/><ellipse cx="745.7" cy="261.9" rx="3.0" ry="1.6" opacity="0.31"/><ellipse cx="746.8" cy="262.8" rx="2.0" ry="1.4" opacity="0.42"/><ellipse cx="742.9" cy="265.0" rx="1.6" ry="2.1" opacity="0.25"/><ellipse cx="747.6" cy="264.1" rx="2.1" ry="1.7" opacity="0.43"/><ellipse cx="745.3" cy="267.6" rx="1.5" ry="2.2" opacity="0.29"/><ellipse cx="745.3" cy="269.8" rx="2.3" ry="2.2" opacity="0.26"/><ellipse cx="751.6" cy="267.8" rx="2.3" ry="1.6" opacity="0.35"/><ellipse cx="756.8" cy="271.7" rx="2.8" ry="2.2" opacity="0.32"/><ellipse cx="759.5" cy="273.3" rx="1.4" ry="2.2" opacity="0.28"/><ellipse cx="752.1" cy="272.3" rx="1.8" ry="2.3" opacity="0.47"/><ellipse cx="883.3" cy="298.0" rx="2.4" ry="2.0" opacity="0.28"/><ellipse cx="879.2" cy="296.8" rx="1.8" ry="1.0" opacity="0.28"/><ellipse cx="879.0" cy="304.6" rx="1.4" ry="1.8" opacity="0.49"/><ellipse cx="880.3" cy="304.0" rx="2.5" ry="1.6" opacity="0.29"/><ellipse cx="882.1" cy="303.2" rx="2.4" ry="1.2" opacity="0.34"/><ellipse cx="885.9" cy="309.2" rx="2.7" ry="1.8" opacity="0.41"/><ellipse cx="885.2" cy="315.0" rx="1.6" ry="2.0" opacity="0.33"/><ellipse cx="881.6" cy="313.8" rx="2.3" ry="2.1" opacity="0.47"/><ellipse cx="883.9" cy="313.2" rx="1.3" ry="1.7" opacity="0.43"/><ellipse cx="881.4" cy="312.2" rx="1.3" ry="1.2" opacity="0.42"/><ellipse cx="881.1" cy="318.4" rx="1.8" ry="1.9" opacity="0.50"/><ellipse cx="881.2" cy="317.4" rx="2.9" ry="2.3" opacity="0.29"/><ellipse cx="883.4" cy="324.9" rx="1.8" ry="1.5" opacity="0.37"/><ellipse cx="882.8" cy="321.2" rx="1.4" ry="1.2" opacity="0.27"/><ellipse cx="888.4" cy="329.5" rx="1.7" ry="2.0" opacity="0.43"/><ellipse cx="886.1" cy="327.8" rx="1.6" ry="2.2" opacity="0.39"/><ellipse cx="884.9" cy="330.1" rx="2.5" ry="1.5" opacity="0.43"/><ellipse cx="886.4" cy="335.3" rx="2.7" ry="1.1" opacity="0.40"/><ellipse cx="885.1" cy="337.6" rx="2.7" ry="2.0" opacity="0.31"/><ellipse cx="884.3" cy="337.2" rx="2.3" ry="1.2" opacity="0.30"/><ellipse cx="891.2" cy="337.5" rx="2.4" ry="1.3" opacity="0.31"/><ellipse cx="889.9" cy="340.9" rx="2.5" ry="1.0" opacity="0.43"/><ellipse cx="887.5" cy="341.7" rx="2.4" ry="1.9" opacity="0.40"/><ellipse cx="892.9" cy="341.0" rx="1.8" ry="1.9" opacity="0.32"/><ellipse cx="887.2" cy="347.2" rx="2.6" ry="2.1" opacity="0.43"/><ellipse cx="893.6" cy="351.8" rx="1.8" ry="1.4" opacity="0.43"/><ellipse cx="883.5" cy="353.5" rx="1.5" ry="1.1" opacity="0.38"/><ellipse cx="884.3" cy="356.1" rx="2.8" ry="1.6" opacity="0.30"/><ellipse cx="885.5" cy="356.3" rx="2.2" ry="1.5" opacity="0.43"/><ellipse cx="888.8" cy="358.5" rx="1.5" ry="1.1" opacity="0.35"/><ellipse cx="886.0" cy="360.8" rx="2.4" ry="1.3" opacity="0.33"/><ellipse cx="886.0" cy="364.5" rx="2.6" ry="1.5" opacity="0.36"/><ellipse cx="890.3" cy="368.4" rx="2.4" ry="1.1" opacity="0.36"/><ellipse cx="888.0" cy="363.1" rx="1.4" ry="2.3" opacity="0.48"/><ellipse cx="882.0" cy="369.7" rx="2.4" ry="1.4" opacity="0.27"/><ellipse cx="887.0" cy="372.2" rx="2.0" ry="1.1" opacity="0.35"/><circle cx="884.1" cy="295.4" r="1.1" opacity=".6"/><circle cx="881.6" cy="311.8" r="1.3" opacity=".6"/><circle cx="882.3" cy="327.1" r="2.1" opacity=".6"/><circle cx="893.1" cy="333.9" r="1.3" opacity=".6"/><circle cx="887.5" cy="345.2" r="1.1" opacity=".6"/><circle cx="887.4" cy="347.0" r="1.6" opacity=".6"/><circle cx="892.1" cy="354.5" r="1.2" opacity=".6"/><circle cx="883.8" cy="364.1" r="2.0" opacity=".6"/><ellipse cx="692.3" cy="519.3" rx="2.7" ry="1.2" opacity="0.38"/><ellipse cx="689.8" cy="522.8" rx="1.9" ry="2.1" opacity="0.46"/><ellipse cx="694.9" cy="520.1" rx="2.9" ry="2.0" opacity="0.42"/><ellipse cx="693.1" cy="519.4" rx="2.8" ry="1.7" opacity="0.36"/><ellipse cx="695.7" cy="527.9" rx="2.6" ry="2.1" opacity="0.30"/><ellipse cx="695.7" cy="523.6" rx="1.5" ry="1.4" opacity="0.26"/><ellipse cx="703.7" cy="524.0" rx="1.4" ry="1.1" opacity="0.44"/><ellipse cx="698.9" cy="525.8" rx="2.0" ry="2.0" opacity="0.49"/><ellipse cx="702.9" cy="530.9" rx="2.8" ry="1.6" opacity="0.47"/><ellipse cx="706.2" cy="528.3" rx="2.8" ry="1.7" opacity="0.28"/><ellipse cx="706.7" cy="533.3" rx="2.2" ry="1.6" opacity="0.35"/><ellipse cx="709.0" cy="532.0" rx="1.7" ry="1.5" opacity="0.34"/><ellipse cx="713.3" cy="534.5" rx="1.5" ry="2.2" opacity="0.26"/><ellipse cx="710.4" cy="532.4" rx="2.5" ry="1.6" opacity="0.27"/><ellipse cx="713.2" cy="536.9" rx="2.6" ry="1.5" opacity="0.31"/><ellipse cx="714.9" cy="536.8" rx="1.7" ry="2.1" opacity="0.50"/><ellipse cx="715.3" cy="538.1" rx="2.5" ry="2.2" opacity="0.30"/><ellipse cx="714.3" cy="537.6" rx="2.5" ry="1.2" opacity="0.39"/><ellipse cx="719.7" cy="541.8" rx="1.5" ry="2.2" opacity="0.50"/><ellipse cx="720.2" cy="542.8" rx="1.6" ry="2.2" opacity="0.39"/><ellipse cx="727.4" cy="545.0" rx="1.9" ry="2.2" opacity="0.30"/><ellipse cx="721.5" cy="542.1" rx="2.8" ry="2.2" opacity="0.49"/><ellipse cx="727.7" cy="547.4" rx="2.3" ry="1.2" opacity="0.41"/><ellipse cx="730.0" cy="543.3" rx="2.3" ry="1.3" opacity="0.32"/><ellipse cx="732.8" cy="545.6" rx="2.1" ry="1.1" opacity="0.25"/><ellipse cx="732.1" cy="547.2" rx="2.6" ry="1.3" opacity="0.31"/><ellipse cx="737.5" cy="543.5" rx="2.3" ry="2.2" opacity="0.30"/><ellipse cx="738.0" cy="547.9" rx="2.6" ry="1.9" opacity="0.43"/><ellipse cx="740.0" cy="548.6" rx="2.9" ry="1.1" opacity="0.49"/><ellipse cx="741.3" cy="542.6" rx="1.4" ry="2.0" opacity="0.42"/><ellipse cx="742.1" cy="547.7" rx="2.4" ry="2.3" opacity="0.33"/><ellipse cx="747.1" cy="546.0" rx="1.6" ry="1.2" opacity="0.35"/><circle cx="687.7" cy="517.4" r="1.1" opacity=".6"/><circle cx="696.8" cy="525.0" r="2.2" opacity=".6"/><circle cx="705.3" cy="526.3" r="1.2" opacity=".6"/><circle cx="708.2" cy="532.1" r="1.4" opacity=".6"/><circle cx="712.4" cy="542.6" r="1.7" opacity=".6"/><circle cx="726.6" cy="546.3" r="1.5" opacity=".6"/><ellipse cx="695.1" cy="578.2" rx="2.1" ry="1.6" opacity="0.34"/><ellipse cx="702.1" cy="578.4" rx="2.2" ry="2.2" opacity="0.41"/><ellipse cx="705.2" cy="580.2" rx="2.0" ry="1.8" opacity="0.45"/><ellipse cx="703.4" cy="580.6" rx="2.0" ry="1.5" opacity="0.48"/><ellipse cx="709.2" cy="580.2" rx="1.9" ry="2.1" opacity="0.29"/><ellipse cx="710.4" cy="578.1" rx="1.6" ry="1.1" opacity="0.45"/><ellipse cx="709.6" cy="581.3" rx="1.4" ry="1.3" opacity="0.43"/><ellipse cx="714.1" cy="586.8" rx="2.9" ry="1.7" opacity="0.48"/><ellipse cx="714.0" cy="586.0" rx="2.0" ry="1.3" opacity="0.44"/><ellipse cx="720.2" cy="581.7" rx="1.5" ry="2.1" opacity="0.44"/><ellipse cx="721.3" cy="586.2" rx="1.4" ry="1.1" opacity="0.28"/><ellipse cx="716.7" cy="584.1" rx="2.4" ry="1.1" opacity="0.29"/><ellipse cx="724.4" cy="586.1" rx="2.4" ry="2.3" opacity="0.34"/><ellipse cx="730.7" cy="584.7" rx="2.0" ry="1.3" opacity="0.31"/><ellipse cx="733.8" cy="589.0" rx="2.5" ry="1.2" opacity="0.29"/><ellipse cx="727.2" cy="583.8" rx="2.6" ry="1.1" opacity="0.38"/><circle cx="698.3" cy="582.5" r="1.7" opacity=".6"/><circle cx="707.8" cy="586.4" r="2.0" opacity=".6"/><ellipse cx="756.6" cy="556.8" rx="1.6" ry="2.1" opacity="0.37"/><ellipse cx="756.7" cy="559.3" rx="1.4" ry="2.2" opacity="0.44"/><ellipse cx="761.8" cy="559.0" rx="2.3" ry="2.2" opacity="0.40"/><ellipse cx="764.0" cy="560.4" rx="1.4" ry="2.0" opacity="0.28"/><ellipse cx="764.2" cy="556.6" rx="2.8" ry="1.6" opacity="0.43"/><ellipse cx="764.1" cy="561.5" rx="2.4" ry="1.1" opacity="0.37"/><ellipse cx="772.8" cy="558.8" rx="2.4" ry="1.4" opacity="0.34"/><ellipse cx="774.4" cy="564.7" rx="3.0" ry="1.6" opacity="0.39"/><ellipse cx="777.7" cy="565.3" rx="2.1" ry="2.1" opacity="0.35"/><ellipse cx="778.8" cy="563.0" rx="1.5" ry="2.0" opacity="0.29"/><ellipse cx="779.9" cy="562.2" rx="3.0" ry="1.7" opacity="0.44"/><ellipse cx="775.5" cy="566.8" rx="1.9" ry="1.3" opacity="0.45"/><ellipse cx="780.1" cy="567.4" rx="1.4" ry="2.1" opacity="0.47"/><ellipse cx="780.1" cy="567.3" rx="2.1" ry="1.9" opacity="0.43"/><ellipse cx="785.3" cy="571.0" rx="1.6" ry="1.2" opacity="0.45"/><ellipse cx="783.6" cy="565.1" rx="2.2" ry="1.4" opacity="0.29"/><ellipse cx="793.1" cy="569.1" rx="2.6" ry="1.3" opacity="0.48"/><ellipse cx="787.4" cy="572.6" rx="2.3" ry="2.3" opacity="0.44"/><ellipse cx="796.3" cy="570.1" rx="2.8" ry="1.6" opacity="0.27"/><ellipse cx="798.5" cy="572.3" rx="2.5" ry="2.0" opacity="0.31"/><ellipse cx="798.6" cy="571.5" rx="2.9" ry="2.2" opacity="0.29"/><ellipse cx="800.3" cy="569.4" rx="2.0" ry="1.2" opacity="0.28"/><ellipse cx="803.2" cy="567.5" rx="1.8" ry="1.5" opacity="0.39"/><ellipse cx="805.6" cy="568.3" rx="1.6" ry="2.2" opacity="0.34"/><ellipse cx="809.1" cy="570.6" rx="1.5" ry="1.8" opacity="0.49"/><ellipse cx="804.5" cy="567.2" rx="1.8" ry="1.0" opacity="0.30"/><ellipse cx="807.0" cy="563.3" rx="2.4" ry="1.7" opacity="0.49"/><ellipse cx="811.5" cy="563.9" rx="2.9" ry="1.8" opacity="0.39"/><circle cx="775.7" cy="560.2" r="1.6" opacity=".6"/><ellipse cx="732.9" cy="453.3" rx="2.8" ry="1.7" opacity="0.33"/><ellipse cx="733.2" cy="454.4" rx="2.5" ry="1.1" opacity="0.46"/><ellipse cx="735.7" cy="454.1" rx="2.6" ry="1.4" opacity="0.29"/><ellipse cx="730.8" cy="458.5" rx="2.9" ry="2.3" opacity="0.50"/><ellipse cx="738.9" cy="461.5" rx="1.6" ry="1.9" opacity="0.39"/><ellipse cx="736.7" cy="463.5" rx="1.7" ry="1.2" opacity="0.29"/><ellipse cx="738.2" cy="461.7" rx="2.7" ry="1.2" opacity="0.38"/><ellipse cx="741.6" cy="461.5" rx="2.0" ry="1.7" opacity="0.25"/><ellipse cx="738.9" cy="463.4" rx="1.7" ry="2.0" opacity="0.31"/><ellipse cx="745.0" cy="462.0" rx="1.5" ry="1.6" opacity="0.35"/><ellipse cx="746.3" cy="468.4" rx="1.7" ry="1.9" opacity="0.46"/><ellipse cx="747.3" cy="466.3" rx="2.9" ry="1.8" opacity="0.30"/><ellipse cx="746.6" cy="466.7" rx="1.9" ry="1.1" opacity="0.41"/><ellipse cx="749.4" cy="468.5" rx="2.2" ry="2.2" opacity="0.31"/><circle cx="734.5" cy="455.7" r="1.1" opacity=".6"/><ellipse cx="787.3" cy="518.0" rx="1.6" ry="1.1" opacity="0.42"/><ellipse cx="793.5" cy="517.5" rx="1.8" ry="1.9" opacity="0.31"/><ellipse cx="792.4" cy="525.5" rx="2.0" ry="1.2" opacity="0.27"/><ellipse cx="793.6" cy="527.9" rx="2.9" ry="1.1" opacity="0.38"/><ellipse cx="794.9" cy="523.2" rx="2.4" ry="1.6" opacity="0.45"/><ellipse cx="793.4" cy="529.1" rx="2.7" ry="1.6" opacity="0.29"/><ellipse cx="797.9" cy="526.8" rx="2.5" ry="1.9" opacity="0.39"/><ellipse cx="801.8" cy="526.2" rx="2.5" ry="2.0" opacity="0.28"/><ellipse cx="799.1" cy="528.5" rx="2.3" ry="1.9" opacity="0.34"/><ellipse cx="802.0" cy="531.0" rx="2.5" ry="1.4" opacity="0.49"/><ellipse cx="803.2" cy="531.2" rx="1.5" ry="1.9" opacity="0.47"/><ellipse cx="804.8" cy="532.4" rx="2.8" ry="1.9" opacity="0.28"/><ellipse cx="804.0" cy="541.4" rx="1.3" ry="1.1" opacity="0.34"/><ellipse cx="808.0" cy="544.0" rx="1.8" ry="2.2" opacity="0.45"/><circle cx="803.7" cy="540.1" r="1.7" opacity=".6"/><ellipse cx="898.2" cy="417.7" rx="2.0" ry="1.9" opacity="0.45"/><ellipse cx="899.0" cy="421.2" rx="1.7" ry="1.6" opacity="0.34"/><ellipse cx="900.3" cy="422.6" rx="2.6" ry="2.0" opacity="0.30"/><ellipse cx="899.8" cy="426.0" rx="2.4" ry="1.9" opacity="0.41"/><ellipse cx="905.1" cy="426.2" rx="1.4" ry="1.5" opacity="0.26"/><ellipse cx="907.2" cy="428.2" rx="2.4" ry="2.3" opacity="0.45"/><ellipse cx="902.5" cy="430.0" rx="1.5" ry="2.0" opacity="0.43"/><ellipse cx="904.6" cy="430.3" rx="1.8" ry="1.6" opacity="0.43"/><ellipse cx="910.0" cy="438.6" rx="2.8" ry="1.6" opacity="0.36"/><ellipse cx="905.3" cy="439.6" rx="1.6" ry="1.2" opacity="0.32"/><ellipse cx="913.4" cy="442.4" rx="1.9" ry="2.1" opacity="0.47"/><ellipse cx="909.4" cy="437.1" rx="2.6" ry="1.5" opacity="0.28"/><ellipse cx="914.5" cy="441.3" rx="2.0" ry="1.8" opacity="0.31"/><ellipse cx="907.5" cy="440.9" rx="1.9" ry="1.0" opacity="0.34"/><ellipse cx="916.5" cy="444.9" rx="2.5" ry="1.8" opacity="0.30"/><ellipse cx="910.6" cy="447.7" rx="2.3" ry="1.4" opacity="0.30"/><ellipse cx="917.8" cy="453.3" rx="1.7" ry="1.8" opacity="0.39"/><ellipse cx="913.6" cy="446.3" rx="1.9" ry="1.8" opacity="0.40"/><circle cx="898.3" cy="418.0" r="2.1" opacity=".6"/><circle cx="909.8" cy="438.9" r="1.3" opacity=".6"/><circle cx="916.2" cy="437.3" r="1.5" opacity=".6"/><ellipse cx="1050.2" cy="468.0" rx="2.5" ry="1.7" opacity="0.50"/><ellipse cx="1047.5" cy="469.7" rx="2.1" ry="1.5" opacity="0.47"/><ellipse cx="1050.1" cy="475.6" rx="1.9" ry="1.4" opacity="0.40"/><ellipse cx="1052.9" cy="470.8" rx="1.4" ry="2.2" opacity="0.34"/><ellipse cx="1049.2" cy="479.5" rx="2.2" ry="1.4" opacity="0.33"/><ellipse cx="1055.0" cy="477.0" rx="2.0" ry="2.2" opacity="0.34"/><ellipse cx="1053.5" cy="480.0" rx="2.4" ry="1.9" opacity="0.36"/><ellipse cx="1053.6" cy="480.6" rx="2.6" ry="1.6" opacity="0.46"/><ellipse cx="1053.8" cy="486.8" rx="1.3" ry="1.3" opacity="0.49"/><ellipse cx="1056.2" cy="486.3" rx="2.1" ry="1.6" opacity="0.30"/><ellipse cx="1054.0" cy="488.4" rx="2.5" ry="1.3" opacity="0.41"/><ellipse cx="1053.7" cy="488.2" rx="1.6" ry="1.7" opacity="0.33"/><ellipse cx="1058.2" cy="488.3" rx="2.1" ry="1.8" opacity="0.28"/><ellipse cx="1056.2" cy="492.7" rx="2.2" ry="1.8" opacity="0.44"/><ellipse cx="1060.7" cy="493.8" rx="2.1" ry="2.1" opacity="0.39"/><ellipse cx="1062.1" cy="495.0" rx="2.1" ry="2.3" opacity="0.46"/><ellipse cx="1063.2" cy="496.9" rx="2.3" ry="1.0" opacity="0.48"/><ellipse cx="1065.8" cy="501.8" rx="1.8" ry="2.1" opacity="0.29"/><circle cx="1061.8" cy="489.7" r="1.0" opacity=".6"/><ellipse cx="939.8" cy="601.9" rx="1.5" ry="1.9" opacity="0.37"/><ellipse cx="941.2" cy="598.6" rx="1.6" ry="2.2" opacity="0.32"/><ellipse cx="943.6" cy="605.3" rx="1.7" ry="1.9" opacity="0.35"/><ellipse cx="939.4" cy="600.4" rx="2.9" ry="1.5" opacity="0.38"/><ellipse cx="945.7" cy="604.1" rx="2.6" ry="2.0" opacity="0.47"/><ellipse cx="944.6" cy="605.6" rx="1.9" ry="2.0" opacity="0.41"/><ellipse cx="947.0" cy="611.7" rx="1.6" ry="2.2" opacity="0.37"/><ellipse cx="947.8" cy="613.8" rx="1.6" ry="1.9" opacity="0.34"/><ellipse cx="951.2" cy="611.0" rx="1.8" ry="1.8" opacity="0.37"/><ellipse cx="947.7" cy="614.8" rx="1.7" ry="1.6" opacity="0.25"/><ellipse cx="952.8" cy="616.0" rx="2.7" ry="1.7" opacity="0.40"/><ellipse cx="951.5" cy="614.9" rx="2.6" ry="1.4" opacity="0.47"/><ellipse cx="956.6" cy="622.1" rx="2.7" ry="1.6" opacity="0.42"/><ellipse cx="957.9" cy="618.2" rx="1.5" ry="1.5" opacity="0.38"/><ellipse cx="951.9" cy="619.9" rx="2.8" ry="1.5" opacity="0.29"/><ellipse cx="952.2" cy="622.7" rx="1.6" ry="1.6" opacity="0.38"/><ellipse cx="958.6" cy="626.9" rx="2.7" ry="1.0" opacity="0.48"/><ellipse cx="956.6" cy="623.1" rx="2.6" ry="1.7" opacity="0.38"/><ellipse cx="957.7" cy="632.2" rx="1.8" ry="1.9" opacity="0.31"/><ellipse cx="960.6" cy="631.2" rx="1.9" ry="1.6" opacity="0.27"/><circle cx="949.1" cy="611.6" r="1.1" opacity=".6"/><circle cx="948.6" cy="611.7" r="1.4" opacity=".6"/><circle cx="955.1" cy="628.8" r="1.9" opacity=".6"/><ellipse cx="694.1" cy="438.9" rx="1.6" ry="1.5" opacity="0.47"/><ellipse cx="690.7" cy="440.4" rx="2.3" ry="1.6" opacity="0.39"/><ellipse cx="688.0" cy="445.5" rx="2.8" ry="1.1" opacity="0.34"/><ellipse cx="693.1" cy="448.9" rx="1.3" ry="1.8" opacity="0.41"/><ellipse cx="695.3" cy="449.6" rx="1.5" ry="1.4" opacity="0.43"/><ellipse cx="694.4" cy="447.5" rx="2.4" ry="1.9" opacity="0.41"/><ellipse cx="690.1" cy="451.8" rx="1.9" ry="1.8" opacity="0.33"/><ellipse cx="691.0" cy="453.7" rx="1.8" ry="2.0" opacity="0.33"/><ellipse cx="694.8" cy="461.0" rx="1.5" ry="2.0" opacity="0.27"/><ellipse cx="697.9" cy="454.7" rx="2.5" ry="1.5" opacity="0.29"/><ellipse cx="696.3" cy="461.3" rx="2.0" ry="1.2" opacity="0.38"/><ellipse cx="695.6" cy="465.0" rx="2.0" ry="1.6" opacity="0.31"/><ellipse cx="702.1" cy="465.1" rx="2.4" ry="2.1" opacity="0.35"/><ellipse cx="700.4" cy="464.8" rx="1.5" ry="1.1" opacity="0.36"/><ellipse cx="703.0" cy="467.6" rx="2.0" ry="2.0" opacity="0.32"/><ellipse cx="697.2" cy="470.2" rx="2.0" ry="2.2" opacity="0.47"/><circle cx="690.9" cy="443.3" r="1.4" opacity=".6"/><circle cx="693.2" cy="454.8" r="1.6" opacity=".6"/><circle cx="694.3" cy="463.5" r="1.6" opacity=".6"/><circle cx="732.0" cy="566.7" r="1.2" opacity="0.26"/><circle cx="771.6" cy="574.2" r="0.8" opacity="0.39"/><circle cx="717.1" cy="617.3" r="1.2" opacity="0.35"/><circle cx="943.6" cy="470.9" r="1.1" opacity="0.32"/><circle cx="750.9" cy="409.2" r="1.1" opacity="0.35"/><circle cx="793.6" cy="342.7" r="1.4" opacity="0.22"/><circle cx="723.7" cy="438.6" r="1.3" opacity="0.38"/><circle cx="822.1" cy="399.0" r="1.7" opacity="0.27"/><circle cx="1052.8" cy="595.9" r="1.7" opacity="0.26"/><circle cx="1059.1" cy="495.5" r="1.4" opacity="0.22"/><circle cx="914.2" cy="309.5" r="1.3" opacity="0.38"/><circle cx="716.5" cy="500.9" r="0.9" opacity="0.32"/><circle cx="926.8" cy="511.8" r="0.8" opacity="0.25"/><circle cx="822.3" cy="515.4" r="1.5" opacity="0.36"/><circle cx="832.9" cy="463.5" r="1.3" opacity="0.25"/><circle cx="1040.8" cy="625.6" r="1.8" opacity="0.32"/><circle cx="998.9" cy="328.7" r="1.5" opacity="0.43"/><circle cx="820.0" cy="557.5" r="1.6" opacity="0.41"/><circle cx="895.8" cy="316.9" r="1.1" opacity="0.23"/><circle cx="738.8" cy="524.0" r="1.0" opacity="0.41"/><circle cx="805.1" cy="578.0" r="1.1" opacity="0.27"/><circle cx="830.0" cy="235.0" r="1.2" opacity="0.29"/><circle cx="684.8" cy="583.2" r="1.2" opacity="0.20"/><circle cx="689.2" cy="270.8" r="1.5" opacity="0.35"/><circle cx="871.5" cy="330.9" r="1.1" opacity="0.44"/><circle cx="821.4" cy="635.7" r="1.7" opacity="0.23"/><circle cx="1002.3" cy="238.6" r="1.6" opacity="0.37"/><circle cx="888.9" cy="563.3" r="1.0" opacity="0.33"/><circle cx="781.0" cy="393.7" r="1.0" opacity="0.38"/><circle cx="897.8" cy="549.5" r="1.4" opacity="0.35"/><circle cx="803.9" cy="610.4" r="1.2" opacity="0.23"/><circle cx="806.6" cy="519.6" r="1.7" opacity="0.36"/><circle cx="931.8" cy="614.3" r="1.2" opacity="0.32"/><circle cx="915.5" cy="561.7" r="1.0" opacity="0.37"/><circle cx="867.3" cy="367.1" r="1.7" opacity="0.45"/><circle cx="849.3" cy="555.2" r="1.4" opacity="0.24"/><circle cx="852.0" cy="237.3" r="1.3" opacity="0.30"/><circle cx="1042.6" cy="399.6" r="1.6" opacity="0.35"/><circle cx="770.4" cy="355.0" r="1.3" opacity="0.30"/><circle cx="925.3" cy="437.2" r="1.1" opacity="0.35"/><circle cx="684.6" cy="268.4" r="0.9" opacity="0.31"/><circle cx="997.9" cy="516.1" r="1.6" opacity="0.35"/><circle cx="900.6" cy="235.1" r="1.2" opacity="0.27"/><circle cx="915.9" cy="256.8" r="1.3" opacity="0.29"/><circle cx="867.0" cy="395.8" r="0.9" opacity="0.38"/><circle cx="907.7" cy="587.1" r="1.8" opacity="0.39"/><circle cx="697.4" cy="590.2" r="1.5" opacity="0.27"/><circle cx="1029.6" cy="568.7" r="1.0" opacity="0.34"/><circle cx="824.0" cy="351.3" r="1.6" opacity="0.35"/><circle cx="806.1" cy="452.6" r="1.7" opacity="0.34"/><circle cx="1027.1" cy="462.1" r="0.8" opacity="0.31"/><circle cx="889.9" cy="528.0" r="1.8" opacity="0.36"/><circle cx="861.6" cy="490.0" r="1.3" opacity="0.38"/><circle cx="1013.0" cy="254.5" r="0.8" opacity="0.36"/><circle cx="766.0" cy="519.0" r="1.3" opacity="0.35"/><circle cx="803.7" cy="470.6" r="1.8" opacity="0.39"/><circle cx="826.6" cy="371.9" r="1.6" opacity="0.24"/><circle cx="892.2" cy="547.4" r="1.7" opacity="0.20"/><circle cx="782.9" cy="432.2" r="1.7" opacity="0.24"/><circle cx="739.2" cy="284.9" r="1.1" opacity="0.38"/><circle cx="900.6" cy="279.9" r="1.6" opacity="0.33"/><circle cx="734.4" cy="566.4" r="1.6" opacity="0.25"/><circle cx="680.4" cy="585.6" r="1.6" opacity="0.22"/><circle cx="971.2" cy="547.0" r="1.6" opacity="0.45"/><circle cx="804.6" cy="571.9" r="1.7" opacity="0.28"/><circle cx="939.7" cy="510.6" r="1.4" opacity="0.27"/><circle cx="775.6" cy="452.5" r="0.9" opacity="0.41"/><circle cx="1017.9" cy="329.3" r="1.5" opacity="0.23"/><circle cx="717.3" cy="345.5" r="1.6" opacity="0.32"/><circle cx="812.6" cy="590.7" r="1.0" opacity="0.22"/><circle cx="966.1" cy="267.4" r="0.9" opacity="0.26"/><circle cx="850.8" cy="242.7" r="1.1" opacity="0.26"/><circle cx="979.7" cy="522.8" r="1.3" opacity="0.37"/><circle cx="728.3" cy="387.9" r="1.1" opacity="0.27"/><circle cx="787.3" cy="584.2" r="1.4" opacity="0.32"/><circle cx="824.3" cy="607.9" r="1.7" opacity="0.31"/><circle cx="895.4" cy="583.6" r="1.1" opacity="0.26"/><circle cx="719.2" cy="435.8" r="1.6" opacity="0.24"/><circle cx="844.3" cy="636.2" r="1.3" opacity="0.30"/><circle cx="726.9" cy="491.0" r="1.5" opacity="0.43"/><circle cx="789.4" cy="412.9" r="1.3" opacity="0.43"/><circle cx="1046.5" cy="287.0" r="1.4" opacity="0.42"/><circle cx="837.1" cy="636.3" r="0.8" opacity="0.41"/><circle cx="991.4" cy="383.4" r="1.0" opacity="0.39"/><circle cx="858.0" cy="398.6" r="1.0" opacity="0.40"/><circle cx="957.8" cy="266.5" r="1.0" opacity="0.29"/><circle cx="837.6" cy="466.4" r="1.7" opacity="0.44"/><circle cx="920.6" cy="379.9" r="0.9" opacity="0.22"/><circle cx="877.2" cy="469.1" r="1.2" opacity="0.45"/><circle cx="837.2" cy="373.9" r="1.2" opacity="0.24"/><circle cx="841.8" cy="332.5" r="1.1" opacity="0.32"/><circle cx="849.6" cy="631.5" r="1.4" opacity="0.25"/><circle cx="700.4" cy="295.3" r="1.1" opacity="0.40"/><circle cx="1017.9" cy="326.9" r="1.2" opacity="0.33"/><circle cx="882.5" cy="247.4" r="0.9" opacity="0.37"/><circle cx="941.9" cy="385.9" r="1.6" opacity="0.28"/><circle cx="705.4" cy="456.9" r="1.5" opacity="0.26"/><circle cx="696.7" cy="429.7" r="0.8" opacity="0.38"/><circle cx="917.7" cy="344.5" r="1.2" opacity="0.26"/><circle cx="750.7" cy="304.4" r="1.6" opacity="0.31"/><circle cx="951.9" cy="372.5" r="1.4" opacity="0.36"/></g>
<polygon points="747.6,194.9 1123,270.4 1042.7,667.8 668.5,590.7" fill="#fff" filter="url(#noise)" opacity=".5"/>
</g></g>
<circle cx="10" cy="10.5" r="6" fill="none" stroke="#6aa53a" stroke-width="3"/><path d="M12,13 l5,5" stroke="#6aa53a" stroke-width="3.2" stroke-linecap="round"/><circle cx="10" cy="10.5" r="2" fill="#ee7913"/><path d="M1245.5,10.5h10" stroke="#000"/><rect x="1290.5" y="6.5" width="8" height="8" fill="none" stroke="#000"/><path d="M1292.5,6.5v-2h8v8h-2" fill="none" stroke="#000"/><path d="M1336,5l10,10M1346,5l-10,10" stroke="#000"/><rect x="439.5" y="203.5" width="10" height="10" rx="2" fill="none" stroke="#666"/><rect x="442" y="207" width="4" height="4" fill="none" stroke="#666"/><path d="M444,207v-2h3v3h-1" fill="none" stroke="#666"/><rect x="453.5" y="203.5" width="10" height="10" rx="2" fill="none" stroke="#666"/><path d="M456,206l5,5M461,206l-5,5" stroke="#555" stroke-width="1.8"/><path d="M61,255l4,4l-4,4z" fill="#555"/><rect x="76.5" y="252.5" width="13" height="13" fill="#fff" stroke="#a0a0a0"/><path d="M79,259l3,3.5l5,-8" fill="none" stroke="#000" stroke-width="1.6"/><rect x="98" y="253" width="13" height="13" fill="#b5cde8"/><rect x="98.00" y="253.00" width="4.4" height="4.4" fill="#5d8fc8"/><rect x="102.33" y="253.00" width="4.4" height="4.4" fill="#1f3f6a"/><rect x="106.66" y="253.00" width="4.4" height="4.4" fill="#5d8fc8"/><rect x="98.00" y="257.33" width="4.4" height="4.4" fill="#1f3f6a"/><rect x="102.33" y="257.33" width="4.4" height="4.4" fill="#5d8fc8"/><rect x="106.66" y="257.33" width="4.4" height="4.4" fill="#1f3f6a"/><rect x="98.00" y="261.66" width="4.4" height="4.4" fill="#5d8fc8"/><rect x="102.33" y="261.66" width="4.4" height="4.4" fill="#1f3f6a"/><rect x="106.66" y="261.66" width="4.4" height="4.4" fill="#b5cde8"/><path d="M61,273l4,4l-4,4z" fill="#555"/><rect x="76.5" y="270.5" width="13" height="13" fill="#fff" stroke="#a0a0a0"/><path d="M79,277l3,3.5l5,-8" fill="none" stroke="#000" stroke-width="1.6"/><rect x="98" y="271" width="13" height="13" fill="#b5cde8"/><rect x="98.00" y="271.00" width="4.4" height="4.4" fill="#1f3f6a"/><rect x="102.33" y="271.00" width="4.4" height="4.4" fill="#5d8fc8"/><rect x="106.66" y="271.00" width="4.4" height="4.4" fill="#1f3f6a"/><rect x="98.00" y="275.33" width="4.4" height="4.4" fill="#5d8fc8"/><rect x="102.33" y="275.33" width="4.4" height="4.4" fill="#1f3f6a"/><rect x="106.66" y="275.33" width="4.4" height="4.4" fill="#b5cde8"/><rect x="98.00" y="279.66" width="4.4" height="4.4" fill="#1f3f6a"/><rect x="102.33" y="279.66" width="4.4" height="4.4" fill="#b5cde8"/><rect x="106.66" y="279.66" width="4.4" height="4.4" fill="#b5cde8"/><path d="M61,291l4,4l-4,4z" fill="#555"/><rect x="76.5" y="288.5" width="13" height="13" fill="#fff" stroke="#a0a0a0"/><path d="M79,295l3,3.5l5,-8" fill="none" stroke="#000" stroke-width="1.6"/><rect x="98" y="289" width="13" height="13" fill="#b5cde8"/><rect x="98.00" y="289.00" width="4.4" height="4.4" fill="#1f3f6a"/><rect x="102.33" y="289.00" width="4.4" height="4.4" fill="#5d8fc8"/><rect x="106.66" y="289.00" width="4.4" height="4.4" fill="#1f3f6a"/><rect x="98.00" y="293.33" width="4.4" height="4.4" fill="#5d8fc8"/><rect x="102.33" y="293.33" width="4.4" height="4.4" fill="#1f3f6a"/><rect x="106.66" y="293.33" width="4.4" height="4.4" fill="#b5cde8"/><rect x="98.00" y="297.66" width="4.4" height="4.4" fill="#1f3f6a"/><rect x="102.33" y="297.66" width="4.4" height="4.4" fill="#b5cde8"/><rect x="106.66" y="297.66" width="4.4" height="4.4" fill="#b5cde8"/><path d="M61,309l4,4l-4,4z" fill="#555"/><rect x="76.5" y="306.5" width="13" height="13" fill="#fff" stroke="#a0a0a0"/><path d="M79,313l3,3.5l5,-8" fill="none" stroke="#000" stroke-width="1.6"/><rect x="98" y="307" width="13" height="13" fill="#b5cde8"/><rect x="98.00" y="307.00" width="4.4" height="4.4" fill="#1f3f6a"/><rect x="102.33" y="307.00" width="4.4" height="4.4" fill="#5d8fc8"/><rect x="106.66" y="307.00" width="4.4" height="4.4" fill="#1f3f6a"/><rect x="98.00" y="311.33" width="4.4" height="4.4" fill="#5d8fc8"/><rect x="102.33" y="311.33" width="4.4" height="4.4" fill="#1f3f6a"/><rect x="106.66" y="311.33" width="4.4" height="4.4" fill="#b5cde8"/><rect x="98.00" y="315.66" width="4.4" height="4.4" fill="#1f3f6a"/><rect x="102.33" y="315.66" width="4.4" height="4.4" fill="#b5cde8"/><rect x="106.66" y="315.66" width="4.4" height="4.4" fill="#b5cde8"/><path d="M61,327l4,4l-4,4z" fill="#555"/><rect x="76.5" y="324.5" width="13" height="13" fill="#fff" stroke="#a0a0a0"/><path d="M79,331l3,3.5l5,-8" fill="none" stroke="#000" stroke-width="1.6"/><rect x="98" y="325" width="13" height="13" fill="#b5cde8"/><rect x="98.00" y="325.00" width="4.4" height="4.4" fill="#1f3f6a"/><rect x="102.33" y="325.00" width="4.4" height="4.4" fill="#5d8fc8"/><rect x="106.66" y="325.00" width="4.4" height="4.4" fill="#1f3f6a"/><rect x="98.00" y="329.33" width="4.4" height="4.4" fill="#5d8fc8"/><rect x="102.33" y="329.33" width="4.4" height="4.4" fill="#1f3f6a"/><rect x="106.66" y="329.33" width="4.4" height="4.4" fill="#b5cde8"/><rect x="98.00" y="333.66" width="4.4" height="4.4" fill="#1f3f6a"/><rect x="102.33" y="333.66" width="4.4" height="4.4" fill="#b5cde8"/><rect x="106.66" y="333.66" width="4.4" height="4.4" fill="#b5cde8"/><path d="M61,345l4,4l-4,4z" fill="#555"/><rect x="76.5" y="342.5" width="13" height="13" fill="#fff" stroke="#a0a0a0"/><path d="M79,349l3,3.5l5,-8" fill="none" stroke="#000" stroke-width="1.6"/><rect x="98" y="343" width="13" height="13" fill="#b5cde8"/><rect x="98.00" y="343.00" width="4.4" height="4.4" fill="#1f3f6a"/><rect x="102.33" y="343.00" width="4.4" height="4.4" fill="#5d8fc8"/><rect x="106.66" y="343.00" width="4.4" height="4.4" fill="#1f3f6a"/><rect x="98.00" y="347.33" width="4.4" height="4.4" fill="#5d8fc8"/><rect x="102.33" y="347.33" width="4.4" height="4.4" fill="#1f3f6a"/><rect x="106.66" y="347.33" width="4.4" height="4.4" fill="#b5cde8"/><rect x="98.00" y="351.66" width="4.4" height="4.4" fill="#1f3f6a"/><rect x="102.33" y="351.66" width="4.4" height="4.4" fill="#b5cde8"/><rect x="106.66" y="351.66" width="4.4" height="4.4" fill="#b5cde8"/><path d="M61,363l4,4l-4,4z" fill="#555"/><rect x="76.5" y="360.5" width="13" height="13" fill="#fff" stroke="#a0a0a0"/><path d="M79,367l3,3.5l5,-8" fill="none" stroke="#000" stroke-width="1.6"/><rect x="98" y="361" width="13" height="13" fill="#b5cde8"/><rect x="98.00" y="361.00" width="4.4" height="4.4" fill="#1f3f6a"/><rect x="102.33" y="361.00" width="4.4" height="4.4" fill="#5d8fc8"/><rect x="106.66" y="361.00" width="4.4" height="4.4" fill="#1f3f6a"/><rect x="98.00" y="365.33" width="4.4" height="4.4" fill="#5d8fc8"/><rect x="102.33" y="365.33" width="4.4" height="4.4" fill="#1f3f6a"/><rect x="106.66" y="365.33" width="4.4" height="4.4" fill="#b5cde8"/><rect x="98.00" y="369.66" width="4.4" height="4.4" fill="#1f3f6a"/><rect x="102.33" y="369.66" width="4.4" height="4.4" fill="#b5cde8"/><rect x="106.66" y="369.66" width="4.4" height="4.4" fill="#b5cde8"/><path d="M61,381l4,4l-4,4z" fill="#555"/><rect x="76.5" y="378.5" width="13" height="13" fill="#fff" stroke="#a0a0a0"/><path d="M79,385l3,3.5l5,-8" fill="none" stroke="#000" stroke-width="1.6"/><rect x="98" y="379" width="13" height="13" fill="#b5cde8"/><rect x="98.00" y="379.00" width="4.4" height="4.4" fill="#1f3f6a"/><rect x="102.33" y="379.00" width="4.4" height="4.4" fill="#5d8fc8"/><rect x="106.66" y="379.00" width="4.4" height="4.4" fill="#1f3f6a"/><rect x="98.00" y="383.33" width="4.4" height="4.4" fill="#5d8fc8"/><rect x="102.33" y="383.33" width="4.4" height="4.4" fill="#1f3f6a"/><rect x="106.66" y="383.33" width="4.4" height="4.4" fill="#b5cde8"/><rect x="98.00" y="387.66" width="4.4" height="4.4" fill="#1f3f6a"/><rect x="102.33" y="387.66" width="4.4" height="4.4" fill="#b5cde8"/><rect x="106.66" y="387.66" width="4.4" height="4.4" fill="#b5cde8"/><path d="M61,399l4,4l-4,4z" fill="#555"/><rect x="76.5" y="396.5" width="13" height="13" fill="#fff" stroke="#a0a0a0"/><path d="M79,403l3,3.5l5,-8" fill="none" stroke="#000" stroke-width="1.6"/><rect x="98" y="397" width="13" height="13" fill="#b5cde8"/><rect x="98.00" y="397.00" width="4.4" height="4.4" fill="#1f3f6a"/><rect x="102.33" y="397.00" width="4.4" height="4.4" fill="#5d8fc8"/><rect x="106.66" y="397.00" width="4.4" height="4.4" fill="#1f3f6a"/><rect x="98.00" y="401.33" width="4.4" height="4.4" fill="#5d8fc8"/><rect x="102.33" y="401.33" width="4.4" height="4.4" fill="#1f3f6a"/><rect x="106.66" y="401.33" width="4.4" height="4.4" fill="#b5cde8"/><rect x="98.00" y="405.66" width="4.4" height="4.4" fill="#1f3f6a"/><rect x="102.33" y="405.66" width="4.4" height="4.4" fill="#b5cde8"/><rect x="106.66" y="405.66" width="4.4" height="4.4" fill="#b5cde8"/><path d="M61,417l4,4l-4,4z" fill="#555"/><rect x="76.5" y="414.5" width="13" height="13" fill="#fff" stroke="#a0a0a0"/><path d="M79,421l3,3.5l5,-8" fill="none" stroke="#000" stroke-width="1.6"/><rect x="98" y="415" width="13" height="13" fill="#b5cde8"/><rect x="98.00" y="415.00" width="4.4" height="4.4" fill="#1f3f6a"/><rect x="102.33" y="415.00" width="4.4" height="4.4" fill="#5d8fc8"/><rect x="106.66" y="415.00" width="4.4" height="4.4" fill="#1f3f6a"/><rect x="98.00" y="419.33" width="4.4" height="4.4" fill="#5d8fc8"/><rect x="102.33" y="419.33" width="4.4" height="4.4" fill="#1f3f6a"/><rect x="106.66" y="419.33" width="4.4" height="4.4" fill="#b5cde8"/><rect x="98.00" y="423.66" width="4.4" height="4.4" fill="#1f3f6a"/><rect x="102.33" y="423.66" width="4.4" height="4.4" fill="#b5cde8"/><rect x="106.66" y="423.66" width="4.4" height="4.4" fill="#b5cde8"/><path d="M61,435l4,4l-4,4z" fill="#555"/><rect x="76.5" y="432.5" width="13" height="13" fill="#fff" stroke="#a0a0a0"/><path d="M79,439l3,3.5l5,-8" fill="none" stroke="#000" stroke-width="1.6"/><rect x="98" y="433" width="13" height="13" fill="#b5cde8"/><rect x="98.00" y="433.00" width="4.4" height="4.4" fill="#1f3f6a"/><rect x="102.33" y="433.00" width="4.4" height="4.4" fill="#5d8fc8"/><rect x="106.66" y="433.00" width="4.4" height="4.4" fill="#1f3f6a"/><rect x="98.00" y="437.33" width="4.4" height="4.4" fill="#5d8fc8"/><rect x="102.33" y="437.33" width="4.4" height="4.4" fill="#1f3f6a"/><rect x="106.66" y="437.33" width="4.4" height="4.4" fill="#b5cde8"/><rect x="98.00" y="441.66" width="4.4" height="4.4" fill="#1f3f6a"/><rect x="102.33" y="441.66" width="4.4" height="4.4" fill="#b5cde8"/><rect x="106.66" y="441.66" width="4.4" height="4.4" fill="#b5cde8"/><path d="M61,453l4,4l-4,4z" fill="#555"/><rect x="76.5" y="450.5" width="13" height="13" fill="#fff" stroke="#a0a0a0"/><path d="M79,457l3,3.5l5,-8" fill="none" stroke="#000" stroke-width="1.6"/><rect x="98" y="451" width="13" height="13" fill="#b5cde8"/><rect x="98.00" y="451.00" width="4.4" height="4.4" fill="#1f3f6a"/><rect x="102.33" y="451.00" width="4.4" height="4.4" fill="#5d8fc8"/><rect x="106.66" y="451.00" width="4.4" height="4.4" fill="#1f3f6a"/><rect x="98.00" y="455.33" width="4.4" height="4.4" fill="#5d8fc8"/><rect x="102.33" y="455.33" width="4.4" height="4.4" fill="#1f3f6a"/><rect x="106.66" y="455.33" width="4.4" height="4.4" fill="#b5cde8"/><rect x="98.00" y="459.66" width="4.4" height="4.4" fill="#1f3f6a"/><rect x="102.33" y="459.66" width="4.4" height="4.4" fill="#b5cde8"/><rect x="106.66" y="459.66" width="4.4" height="4.4" fill="#b5cde8"/><rect x="468" y="447" width="1" height="1" fill="#a8a8a8"/><rect x="471" y="447" width="1" height="1" fill="#a8a8a8"/><rect x="468" y="450" width="1" height="1" fill="#a8a8a8"/><rect x="471" y="450" width="1" height="1" fill="#a8a8a8"/><rect x="468" y="453" width="1" height="1" fill="#a8a8a8"/><rect x="471" y="453" width="1" height="1" fill="#a8a8a8"/><rect x="468" y="456" width="1" height="1" fill="#a8a8a8"/><rect x="471" y="456" width="1" height="1" fill="#a8a8a8"/><rect x="468" y="459" width="1" height="1" fill="#a8a8a8"/><rect x="471" y="459" width="1" height="1" fill="#a8a8a8"/><rect x="468" y="462" width="1" height="1" fill="#a8a8a8"/><rect x="471" y="462" width="1" height="1" fill="#a8a8a8"/><rect x="468" y="465" width="1" height="1" fill="#a8a8a8"/><rect x="471" y="465" width="1" height="1" fill="#a8a8a8"/><rect x="468" y="468" width="1" height="1" fill="#a8a8a8"/><rect x="471" y="468" width="1" height="1" fill="#a8a8a8"/><circle cx="17" cy="712" r="4" fill="none" stroke="#8a8a8a" stroke-width="1.3"/><path d="M20,715l4,4" stroke="#8a8a8a" stroke-width="1.6"/><rect x="1150.5" y="705.5" width="12" height="12" fill="#fff" stroke="#888"/><path d="M1153,711l3,3.5l4.5,-7" fill="none" stroke="#000" stroke-width="1.5"/><g transform="translate(674,705)"><ellipse cx="7" cy="9" rx="5" ry="7" fill="#fff" stroke="#333" stroke-width="1.4"/><path d="M7,2v6M3,8h8" stroke="#333"/><path d="M9,3l6,-2M10,6l5,2M10,9l5,5" stroke="#333"/></g><path d="M801,712h8l-4,4z" fill="#444"/><g transform="translate(828,705)"><path d="M3.5,8v-3a4.5,4.5 0 0 1 9,0v3" fill="none" stroke="#666" stroke-width="1.8"/><rect x="1.5" y="8" width="13" height="10" rx="1.5" fill="#666"/></g><path d="M986,710l4,-4l4,4z M986,716l4,4l4,-4z" fill="#555"/><rect x="981" y="705" width="1" height="19" fill="#e0e0e0"/><path d="M1131,710l4,-4l4,4z M1131,716l4,4l4,-4z" fill="#555"/><rect x="1126" y="705" width="1" height="19" fill="#e0e0e0"/><g transform="translate(1246,706)"><circle cx="7" cy="7" r="6" fill="none" stroke="#666" stroke-width="1.2"/><ellipse cx="7" cy="7" rx="2.5" ry="6" fill="none" stroke="#666"/><path d="M1,7h12M2,4h10M2,10h10" stroke="#666"/></g><g transform="translate(1341,705)"><path d="M9,1.5c5,0 8.5,2.8 8.5,6.5s-3.5,6.5 -8.5,6.5c-1,0 -2,-.1 -3,-.4c1.5,1.5 3,2.5 4.5,3.2c-2,.5 -5,-1 -7,-3.3c-2,-1.2 -3,-3.5 -3,-6c0,-3.7 3.5,-6.5 8.5,-6.5z" fill="#666"/><circle cx="5.5" cy="8" r="1.3" fill="#fff"/><circle cx="9" cy="8" r="1.3" fill="#fff"/><circle cx="12.5" cy="8" r="1.3" fill="#fff"/></g><rect x="5" y="55" width="1" height="1" fill="#b4b4b4"/><rect x="8" y="55" width="1" height="1" fill="#b4b4b4"/><rect x="5" y="58" width="1" height="1" fill="#b4b4b4"/><rect x="8" y="58" width="1" height="1" fill="#b4b4b4"/><rect x="5" y="61" width="1" height="1" fill="#b4b4b4"/><rect x="8" y="61" width="1" height="1" fill="#b4b4b4"/><rect x="5" y="64" width="1" height="1" fill="#b4b4b4"/><rect x="8" y="64" width="1" height="1" fill="#b4b4b4"/><rect x="5" y="67" width="1" height="1" fill="#b4b4b4"/><rect x="8" y="67" width="1" height="1" fill="#b4b4b4"/><rect x="5" y="70" width="1" height="1" fill="#b4b4b4"/><rect x="8" y="70" width="1" height="1" fill="#b4b4b4"/><g transform="translate(21,51)"><path d="M.5,.5h10l5,5v16h-15z" fill="#fff" stroke="#555"/><path d="M10.5,.5v5h5" fill="#e6e6e6" stroke="#555"/></g><g transform="translate(50,53)"><path d="M1,3.5v-2.5h7l2,2h11v4h-20z" fill="#f2c94c" stroke="#c9a02a"/><path d="M.8,17.5l2.5,-11h19.5l-2.5,11z" fill="#fbd85a" stroke="#c9a02a"/></g><rect x="85.5" y="51.5" width="20" height="21" rx="2" fill="#6b97c7" stroke="#4d78aa"/><rect x="89" y="52" width="13" height="8" fill="#f4f4f4"/><path d="M91,54.5h9M91,56.5h9M91,58.5h9" stroke="#666" stroke-width=".8"/><rect x="89" y="64" width="13" height="8" fill="#f4f4f4"/><rect x="91" y="66" width="2.5" height="4" fill="#4d78aa"/><rect x="118.5" y="51.5" width="20" height="21" rx="2" fill="#6b97c7" stroke="#4d78aa"/><rect x="122" y="52" width="13" height="8" fill="#f4f4f4"/><path d="M124,54.5h9M124,56.5h9M124,58.5h9" stroke="#666" stroke-width=".8"/><rect x="122" y="64" width="13" height="8" fill="#f4f4f4"/><rect x="124" y="66" width="2.5" height="4" fill="#4d78aa"/><rect x="131" y="63" width="10" height="10" rx="2" fill="#4e9a4e"/><path d="M133.5,70.5l5,-5" stroke="#fff" stroke-width="1.8"/><g transform="translate(150,51)"><path d="M2.5,1.5h12l5,5v15h-17z" fill="#fff" stroke="#777"/><path d="M2.5,2h4v19h-4z" fill="#f0d04a" stroke="#c9a62e" stroke-width=".8"/><path d="M2.5,2h13v4h-13z" fill="#f0d04a" stroke="#c9a62e" stroke-width=".8"/><rect x="12.5" y="12.5" width="10" height="10" rx="1.5" fill="#c8a414" stroke="#a78600"/><path d="M17.5,14.5v6M14.8,16l5.4,3M14.8,19l5.4,-3" stroke="#fff" stroke-width="1.2"/></g><g transform="translate(183,51)"><path d="M.5,1.5h16l5,5v15h-21z" fill="#fff" stroke="#777"/><rect x="3" y="4" width="14" height="14" fill="none" stroke="#8ab0dd"/><path d="M9,9l10,11" stroke="#555" stroke-width="4.5" stroke-linecap="round"/><path d="M9,9l10,11" stroke="#f0c94c" stroke-width="2.6" stroke-linecap="round"/><path d="M5,5a4,4 0 1 0 7,1l-3,1l-1,-2l1,-3a4,4 0 0 0 -4,3z" fill="#fff" stroke="#555" stroke-width="1"/></g><g transform="translate(217,51)"><circle cx="6" cy="5" r="5" fill="#e0582a"/><path d="M14,9l7,-7" stroke="#3f6fb0" stroke-width="2.5"/><rect x="1" y="13" width="9" height="9" fill="#6fa76f"/><text x="12" y="21.5" font-size="13" font-family="Liberation Sans" fill="#333">a</text></g><rect x="252" y="55" width="1" height="1" fill="#b4b4b4"/><rect x="255" y="55" width="1" height="1" fill="#b4b4b4"/><rect x="252" y="58" width="1" height="1" fill="#b4b4b4"/><rect x="255" y="58" width="1" height="1" fill="#b4b4b4"/><rect x="252" y="61" width="1" height="1" fill="#b4b4b4"/><rect x="255" y="61" width="1" height="1" fill="#b4b4b4"/><rect x="252" y="64" width="1" height="1" fill="#b4b4b4"/><rect x="255" y="64" width="1" height="1" fill="#b4b4b4"/><rect x="252" y="67" width="1" height="1" fill="#b4b4b4"/><rect x="255" y="67" width="1" height="1" fill="#b4b4b4"/><rect x="252" y="70" width="1" height="1" fill="#b4b4b4"/><rect x="255" y="70" width="1" height="1" fill="#b4b4b4"/><g transform="translate(260,47)"><rect x=".5" y=".5" width="31" height="30" rx="3" fill="#dcdcdc" stroke="#b4b4b4"/></g><g transform="translate(267,50)"><path d="M5,14v-5c0,-1.8 2.6,-1.8 2.6,0v3.5v-8.5c0,-1.8 2.6,-1.8 2.6,0v8v-9.5c0,-1.8 2.6,-1.8 2.6,0v9.5v-8c0,-1.8 2.6,-1.8 2.6,0v9v-5c0,-1.8 2.6,-1.8 2.6,0v8c0,5 -2,8 -4,10h-7c-2,-2 -6,-6 -8,-9c-1,-2 0.5,-3.5 2,-2.5z" fill="#fff" stroke="#000" stroke-width="1.1"/></g><g transform="translate(298,51)"><rect x="3" y="3" width="14" height="13" fill="#f2d94a" stroke="#c5a92a"/><path d="M11,0l4,5h-8zM11,22l4,-5h-8zM0,11l5,-4v8zM22,11l-5,-4v8z" fill="#5f8fc4"/><path d="M11,4v14M4,11h14" stroke="#5f8fc4" stroke-width="2"/></g><path d="M332,72l6,-6" stroke="#333" stroke-width="4" stroke-linecap="round"/><path d="M332,72l6,-6" stroke="#e8c20f" stroke-width="2.2" stroke-linecap="round"/><circle cx="343" cy="60" r="8" fill="#fff" stroke="#555" stroke-width="1.6"/><path d="M365,72l6,-6" stroke="#333" stroke-width="4" stroke-linecap="round"/><path d="M365,72l6,-6" stroke="#e8c20f" stroke-width="2.2" stroke-linecap="round"/><circle cx="376" cy="60" r="8" fill="#fff" stroke="#555" stroke-width="1.6"/><path d="M398,72l6,-6" stroke="#333" stroke-width="4" stroke-linecap="round"/><path d="M398,72l6,-6" stroke="#e8c20f" stroke-width="2.2" stroke-linecap="round"/><circle cx="409" cy="60" r="8" fill="#fff" stroke="#555" stroke-width="1.6"/><path d="M343,53v10M338,58h10" stroke="#4f86c6" stroke-width="2.6"/><path d="M371,59h10" stroke="#4f86c6" stroke-width="2.6"/><text x="403" y="62" font-size="9" font-weight="bold" font-family="Liberation Sans" fill="#333">1:1</text><g transform="translate(429,51)"><path d="M14,9m-7,0a7,7 0 1 0 14,0a7,7 0 1 0 -14,0" fill="#e8e8e8" stroke="#888"/><path d="M3,21l6,-6" stroke="#333" stroke-width="4" stroke-linecap="round"/><path d="M3,21l6,-6" stroke="#e8c20f" stroke-width="2.2" stroke-linecap="round"/><path d="M1,0h8l-3,3l4,4l-3,3l-4,-4l-2,2zM23,0v8l-3,-3l-4,4l-3,-3l4,-4l-2,-2zM23,22h-8l3,-3l-4,-4l3,-3l4,4l2,-2z" fill="#5686c0"/></g><g transform="translate(462,51)"><rect x="1" y="3" width="10" height="13" fill="#dcdcdc" stroke="#aaa"/><path d="M2,21l6,-6" stroke="#888" stroke-width="4" stroke-linecap="round"/><path d="M2,21l6,-6" stroke="#ddd" stroke-width="2.2" stroke-linecap="round"/><circle cx="14" cy="9" r="8.5" fill="#efefef" stroke="#999" stroke-width="1.4"/><path d="M14,1v16" stroke="#bbb"/></g><g transform="translate(495,51)"><rect x="1" y="3" width="10" height="13" fill="#dcdcdc" stroke="#999"/><path d="M2,21l6,-6" stroke="#333" stroke-width="4" stroke-linecap="round"/><path d="M2,21l6,-6" stroke="#e8c20f" stroke-width="2.2" stroke-linecap="round"/><circle cx="14" cy="9" r="8.5" fill="#efefef" stroke="#666" stroke-width="1.4"/><path d="M14,1v16" stroke="#aaa"/></g><path d="M530,72l6,-6" stroke="#333" stroke-width="4" stroke-linecap="round"/><path d="M530,72l6,-6" stroke="#e8c20f" stroke-width="2.2" stroke-linecap="round"/><circle cx="541" cy="60" r="8" fill="#f4f4f4" stroke="#555" stroke-width="1.6"/><rect x="540" y="62" width="12" height="11" fill="#4f86c6"/><path d="M548,64l-4,3.5l4,3.5" fill="none" stroke="#fff" stroke-width="2"/><path d="M564,72l6,-6" stroke="#333" stroke-width="4" stroke-linecap="round"/><path d="M564,72l6,-6" stroke="#ddd" stroke-width="2.2" stroke-linecap="round"/><circle cx="575" cy="60" r="8" fill="#f4f4f4" stroke="#999" stroke-width="1.6"/><rect x="573" y="62" width="12" height="11" fill="#a9a9a9"/><path d="M577,64l4,3.5l-4,3.5" fill="none" stroke="#fff" stroke-width="2"/><path d="M598,53.5h17v18h-17z" fill="#ececec" stroke="#999"/><path d="M595.5,55c0,-2 3,-2 3,0v17c0,-2 -3,-2 -3,0z" fill="#ddd" stroke="#999"/><rect x="606.5" y="64.5" width="10" height="10" rx="1.5" fill="#c8a414" stroke="#a78600"/><path d="M611.5,66.5v6M608.8,68l5.4,3M608.8,71l5.4,-3" stroke="#fff" stroke-width="1.2"/><path d="M632,53.5h17v18h-17z" fill="#ececec" stroke="#999"/><path d="M629.5,55c0,-2 3,-2 3,0v17c0,-2 -3,-2 -3,0z" fill="#ddd" stroke="#999"/><path d="M641,52h4v8l-2,2l-2,-2z" fill="#5f8fc4" stroke="#3f6a9e" stroke-width=".6"/><rect x="640.5" y="64.5" width="10" height="10" rx="1.5" fill="#c8a414" stroke="#a78600"/><path d="M645.5,66.5v6M642.8,68l5.4,3M642.8,71l5.4,-3" stroke="#fff" stroke-width="1.2"/><path d="M664,53.5h17v18h-17z" fill="#ececec" stroke="#999"/><path d="M661.5,55c0,-2 3,-2 3,0v17c0,-2 -3,-2 -3,0z" fill="#ddd" stroke="#999"/><path d="M673,52h4v8l-2,2l-2,-2z" fill="#5f8fc4" stroke="#3f6a9e" stroke-width=".6"/><g transform="translate(694,51)"><path d="M3.5,10.5a7.5,7.5 0 0 1 13.5,-4.5" fill="none" stroke="#3f7fcf" stroke-width="3.6"/><path d="M20,1.5v8h-8z" fill="#3f7fcf"/><path d="M18.5,11.5a7.5,7.5 0 0 1 -13.5,4.5" fill="none" stroke="#3f7fcf" stroke-width="3.6"/><path d="M2,20.5v-8h8z" fill="#3f7fcf"/></g><rect x="730" y="55" width="1" height="1" fill="#b4b4b4"/><rect x="733" y="55" width="1" height="1" fill="#b4b4b4"/><rect x="730" y="58" width="1" height="1" fill="#b4b4b4"/><rect x="733" y="58" width="1" height="1" fill="#b4b4b4"/><rect x="730" y="61" width="1" height="1" fill="#b4b4b4"/><rect x="733" y="61" width="1" height="1" fill="#b4b4b4"/><rect x="730" y="64" width="1" height="1" fill="#b4b4b4"/><rect x="733" y="64" width="1" height="1" fill="#b4b4b4"/><rect x="730" y="67" width="1" height="1" fill="#b4b4b4"/><rect x="733" y="67" width="1" height="1" fill="#b4b4b4"/><rect x="730" y="70" width="1" height="1" fill="#b4b4b4"/><rect x="733" y="70" width="1" height="1" fill="#b4b4b4"/><g transform="translate(742,51)"><circle cx="9" cy="9" r="8.5" fill="#5b8fd0" stroke="#3f70b0"/><text x="6.5" y="14" font-size="12" font-style="italic" font-weight="bold" font-family="Liberation Serif" fill="#fff">i</text><path d="M12,11v11l3,-3l3,5l2,-1l-3,-5h4z" fill="#fff" stroke="#333" stroke-width="1"/></g><g transform="translate(775,51)"><circle cx="10" cy="10" r="9" fill="#d8d8d8" stroke="#aaa" stroke-dasharray="3,1.5" stroke-width="2"/><circle cx="10" cy="10" r="5.5" fill="#bdbdbd" stroke="#999"/><path d="M8.5,7.5v5l4,-2.5z" fill="#fff"/><path d="M13,12v11l3,-3l3,5l2,-1l-3,-5h4z" fill="#fff" stroke="#888" stroke-width="1"/></g><path d="M805,60h8l-4,4z" fill="#666"/><g transform="translate(821,51)"><rect x="1.5" y="1.5" width="20" height="19" fill="#e6e6e6" stroke="#888" stroke-dasharray="2,1.5"/><rect x="2" y="2" width="10" height="10" fill="#d2d2d2"/><path d="M9,9v13l3,-3l3,5l2,-1l-3,-5h4z" fill="#fff" stroke="#777" stroke-width="1"/></g><path d="M850,60h8l-4,4z" fill="#666"/><g transform="translate(868,53)"><rect x=".5" y=".5" width="15" height="12" fill="#ededed" stroke="#9e9e9e"/><rect x="3" y="3" width="10" height="3" fill="#fff" stroke="#9e9e9e" stroke-width=".7"/><rect x="3" y="7.5" width="10" height="3" fill="#fff" stroke="#9e9e9e" stroke-width=".7"/><rect x="4.5" y="7.5" width="15" height="12" fill="#e6e6e6" stroke="#9e9e9e"/></g><path d="M895,60h8l-4,4z" fill="#666"/><g transform="translate(911,52)"><rect x="1" y="1" width="14" height="14" fill="#f9df55" stroke="#c7ad2e"/><rect x="12" y="11" width="11" height="11" rx="2" fill="#d42a2a"/><circle cx="17.5" cy="16.5" r="3.2" fill="none" stroke="#fff" stroke-width="1.2"/><path d="M15,19l5,-5" stroke="#fff" stroke-width="1.2"/></g><g transform="translate(945,52)"><rect x=".5" y=".5" width="19" height="19" fill="#f6f6f6" stroke="#a6a6a6"/><path d="M.5,4.5h19" stroke="#a6a6a6"/><path d="M3,8h14M3,11h14M3,14h14M3,17h14" stroke="#b0b0b0"/><path d="M7,1v19" stroke="#bbb"/></g><g transform="translate(977,51)"><rect x="1.5" y="2" width="19" height="19" fill="#fafafa" stroke="#a5a5a5"/><path d="M0,21.5h22" stroke="#999" stroke-width="1.5"/><path d="M2,6h18M2,11h18M2,16h18" stroke="#aaa"/><circle cx="7" cy="6" r="2" fill="#ddd" stroke="#999"/><circle cx="14" cy="6" r="2" fill="#ddd" stroke="#999"/><circle cx="10" cy="11" r="2" fill="#ddd" stroke="#999"/><circle cx="6" cy="16" r="2" fill="#ddd" stroke="#999"/><circle cx="15" cy="16" r="2" fill="#ddd" stroke="#999"/></g><g transform="translate(1010,51)"><g fill="#7fa8d8" stroke="#4f7fbf" stroke-width=".8"><circle cx="11" cy="11" r="6"/><rect x="9" y="0" width="4" height="7" rx="2" transform="rotate(0 11 11)"/><rect x="9" y="0" width="4" height="7" rx="2" transform="rotate(45 11 11)"/><rect x="9" y="0" width="4" height="7" rx="2" transform="rotate(90 11 11)"/><rect x="9" y="0" width="4" height="7" rx="2" transform="rotate(135 11 11)"/><rect x="9" y="0" width="4" height="7" rx="2" transform="rotate(180 11 11)"/><rect x="9" y="0" width="4" height="7" rx="2" transform="rotate(225 11 11)"/><rect x="9" y="0" width="4" height="7" rx="2" transform="rotate(270 11 11)"/><rect x="9" y="0" width="4" height="7" rx="2" transform="rotate(315 11 11)"/></g><circle cx="11" cy="11" r="2.5" fill="#fff"/></g><g transform="translate(1046,52)"><path d="M1,1h14v4h-2l-1,-2h-7l6,7l-7,8h8l1,-2h2v5h-16v-2l7,-9l-6,-7z" fill="#9b2d9b"/></g><g transform="translate(1076,53)"><path d="M2,2v5M20,2v5M2,4.5h18" stroke="#2f4f7f" stroke-width="1.6"/><rect x=".5" y="10.5" width="21" height="8" rx="1" fill="#c7c7c7" stroke="#777"/><path d="M4,11v3M7,11v2M10,11v3M13,11v2M16,11v3M19,11v2" stroke="#555" stroke-width=".8"/></g><path d="M1105,60h8l-4,4z" fill="#666"/><g transform="translate(1120,51)"><path d="M3,1h16c2,0 3,1 3,3v6c0,2 -1,3 -3,3h-10l-3,4v-4h-3c-2,0 -3,-1 -3,-3v-6c0,-2 1,-3 3,-3z" fill="#fbe98a" stroke="#d4b83a"/><circle cx="4.5" cy="18.5" r="4" fill="#5e9a5e" stroke="#4a7f4a"/></g><g transform="translate(1153,52)"><path d="M1,.5h20v15h-12l-6,5l2,-5h-4z" fill="#eef2f6" stroke="#a9b3bd"/><rect x="11" y="10" width="11" height="11" rx="2" fill="#2c5278"/><path d="M13,15.5h6M16.5,13l3,2.5l-3,2.5" fill="#fff" stroke="#fff" stroke-width="2"/></g><path d="M1183,60h8l-4,4z" fill="#666"/><rect x="1202" y="55" width="1" height="1" fill="#b4b4b4"/><rect x="1205" y="55" width="1" height="1" fill="#b4b4b4"/><rect x="1202" y="58" width="1" height="1" fill="#b4b4b4"/><rect x="1205" y="58" width="1" height="1" fill="#b4b4b4"/><rect x="1202" y="61" width="1" height="1" fill="#b4b4b4"/><rect x="1205" y="61" width="1" height="1" fill="#b4b4b4"/><rect x="1202" y="64" width="1" height="1" fill="#b4b4b4"/><rect x="1205" y="64" width="1" height="1" fill="#b4b4b4"/><rect x="1202" y="67" width="1" height="1" fill="#b4b4b4"/><rect x="1205" y="67" width="1" height="1" fill="#b4b4b4"/><rect x="1202" y="70" width="1" height="1" fill="#b4b4b4"/><rect x="1205" y="70" width="1" height="1" fill="#b4b4b4"/><g transform="translate(1214,50)"><path d="M10,3c0,-3 11,-3 11,0v18c0,3 -11,3 -11,0z" fill="#f1c232" stroke="#c79a14"/><ellipse cx="15.5" cy="3" rx="5.5" ry="2" fill="#f9dc7a" stroke="#c79a14" stroke-width=".6"/><rect x="13" y="19" width="10" height="3" fill="#bbb" stroke="#888" stroke-width=".6"/><circle cx="6" cy="18" r="5" fill="#3b9b3b" stroke="#1f6f1f" stroke-width="1.5" stroke-dasharray="1.5,1"/><circle cx="6" cy="18" r="2" fill="#fff"/></g><rect x="1251" y="55" width="1" height="1" fill="#b4b4b4"/><rect x="1254" y="55" width="1" height="1" fill="#b4b4b4"/><rect x="1251" y="58" width="1" height="1" fill="#b4b4b4"/><rect x="1254" y="58" width="1" height="1" fill="#b4b4b4"/><rect x="1251" y="61" width="1" height="1" fill="#b4b4b4"/><rect x="1254" y="61" width="1" height="1" fill="#b4b4b4"/><rect x="1251" y="64" width="1" height="1" fill="#b4b4b4"/><rect x="1254" y="64" width="1" height="1" fill="#b4b4b4"/><rect x="1251" y="67" width="1" height="1" fill="#b4b4b4"/><rect x="1254" y="67" width="1" height="1" fill="#b4b4b4"/><rect x="1251" y="70" width="1" height="1" fill="#b4b4b4"/><rect x="1254" y="70" width="1" height="1" fill="#b4b4b4"/><g transform="translate(1265,51)"><rect x=".5" y="3.5" width="20" height="7" fill="#c9dcf0" stroke="#2f5f9f"/><rect x="7" y="1" width="5" height="12" rx="1" fill="#5f8fc4" stroke="#2f5f9f" stroke-width=".8"/><path d="M15,4v6M18,4v6" stroke="#8fb3dd"/><path d="M9.5,13v3" stroke="#2f5f9f" stroke-width="1.2"/><path d="M0,14a7,7 0 0 0 8,8M0,17a5,5 0 0 0 5,5M1,12a10,10 0 0 0 9,11" fill="none" stroke="#444" stroke-width=".8"/></g><g transform="translate(1296,50)"><path d="M4,10c3,-5 10,-7 16,-5c3,2 2,7 -2,10c-4,3 -8,4 -11,1z" fill="#6b98cc" stroke="#3f6aa3"/><path d="M3,2l6,6l11,-5M9,8l-6,13" fill="none" stroke="#2f4f7f" stroke-width="1.2"/><circle cx="3" cy="2" r="2.3" fill="#f5e04a" stroke="#2f4f7f" stroke-width=".8"/><circle cx="20" cy="3" r="2.3" fill="#f5e04a" stroke="#2f4f7f" stroke-width=".8"/><circle cx="11" cy="9" r="2.3" fill="#f5e04a" stroke="#2f4f7f" stroke-width=".8"/><circle cx="3" cy="21" r="2.3" fill="#f5e04a" stroke="#2f4f7f" stroke-width=".8"/><path d="M13,18l3,4l7,-9" fill="none" stroke="#f5e04a" stroke-width="2.2"/><path d="M13,18l3,4l7,-9" fill="none" stroke="#2f4f7f" stroke-width=".6"/></g><rect x="5" y="94" width="1" height="1" fill="#b4b4b4"/><rect x="8" y="94" width="1" height="1" fill="#b4b4b4"/><rect x="5" y="97" width="1" height="1" fill="#b4b4b4"/><rect x="8" y="97" width="1" height="1" fill="#b4b4b4"/><rect x="5" y="100" width="1" height="1" fill="#b4b4b4"/><rect x="8" y="100" width="1" height="1" fill="#b4b4b4"/><rect x="5" y="103" width="1" height="1" fill="#b4b4b4"/><rect x="8" y="103" width="1" height="1" fill="#b4b4b4"/><rect x="5" y="106" width="1" height="1" fill="#b4b4b4"/><rect x="8" y="106" width="1" height="1" fill="#b4b4b4"/><rect x="5" y="109" width="1" height="1" fill="#b4b4b4"/><rect x="8" y="109" width="1" height="1" fill="#b4b4b4"/><g transform="translate(17,89)"><rect x="1" y="8" width="13" height="13" transform="rotate(-12 7 14)" fill="#e06a2a" stroke="#b44f1a" stroke-width=".7"/><rect x="4" y="5" width="13" height="13" transform="rotate(-6 10 11)" fill="#f2c94c" stroke="#c9a02a" stroke-width=".7"/><rect x="9" y="1" width="14" height="14" transform="rotate(8 16 8)" fill="#6b98cc" stroke="#3f6aa3"/><rect x="13.5" y="13.5" width="10" height="10" rx="1.5" fill="#4f9a4f" stroke="#3d7d3d"/><path d="M18.5,15.5v6M15.5,18.5h6" stroke="#fff" stroke-width="2"/></g><g transform="translate(50,89)"><circle cx="11" cy="8" r="7.5" fill="#5f8fc4" stroke="#2f5f9f"/><path d="M6,4c2,1 3,4 6,3M8,10c2,-1 4,1 6,0" stroke="#a9c6e6" stroke-width="1.3" fill="none"/><path d="M1,11l5,-3h15v9l-4,5h-16z" fill="#f2c94c" stroke="#333" stroke-width=".8"/><path d="M1,11h16v11M17,11l4,-3" fill="none" stroke="#333" stroke-width=".8"/><path d="M17,11l4,-3v9l-4,5z" fill="#d9ad22" stroke="#333" stroke-width=".8"/><rect x="13.5" y="13.5" width="10" height="10" rx="1.5" fill="#c8a414" stroke="#a78600"/><path d="M18.5,15.5v6M15.8,17l5.4,3M15.8,20l5.4,-3" stroke="#fff" stroke-width="1.2"/></g><g transform="translate(83,89)"><path d="M2,2l8,17l9,-17l6,0" fill="none" stroke="#263b57" stroke-width="1.6"/><circle cx="2" cy="2" r="1.8" fill="#fff" stroke="#263b57"/><circle cx="10" cy="19" r="1.8" fill="#fff" stroke="#263b57"/><circle cx="19" cy="2" r="1.8" fill="#fff" stroke="#263b57"/><rect x="13.5" y="13.5" width="10" height="10" rx="1.5" fill="#c8a414" stroke="#a78600"/><path d="M18.5,15.5v6M15.8,17l5.4,3M15.8,20l5.4,-3" stroke="#fff" stroke-width="1.2"/></g><g transform="translate(116,89)"><path d="M1,22c3,-8 8,-17 20,-21c-2,7 -6,16 -17,19z" fill="#6b98cc" stroke="#3f6aa3"/><path d="M2,21l14,-15" stroke="#dde8f4" stroke-width="1"/><rect x="13.5" y="13.5" width="10" height="10" rx="1.5" fill="#c8a414" stroke="#a78600"/><path d="M18.5,15.5v6M15.8,17l5.4,3M15.8,20l5.4,-3" stroke="#fff" stroke-width="1.2"/></g><g transform="translate(152,89)"><rect x="1" y="5" width="18" height="11" rx="1" fill="#6b98cc" stroke="#3f6aa3"/><path d="M4,2v3M7,2v3M10,2v3M13,2v3M16,2v3M4,16v3M7,16v3M10,16v3M13,16v3M16,16v3" stroke="#2f4f7f" stroke-width="1"/><rect x="10.5" y="13.5" width="10" height="10" rx="1.5" fill="#c8a414" stroke="#a78600"/><path d="M15.5,15.5v6M12.8,17l5.4,3M12.8,20l5.4,-3" stroke="#fff" stroke-width="1.2"/></g><rect x="187" y="94" width="1" height="1" fill="#b4b4b4"/><rect x="190" y="94" width="1" height="1" fill="#b4b4b4"/><rect x="187" y="97" width="1" height="1" fill="#b4b4b4"/><rect x="190" y="97" width="1" height="1" fill="#b4b4b4"/><rect x="187" y="100" width="1" height="1" fill="#b4b4b4"/><rect x="190" y="100" width="1" height="1" fill="#b4b4b4"/><rect x="187" y="103" width="1" height="1" fill="#b4b4b4"/><rect x="190" y="103" width="1" height="1" fill="#b4b4b4"/><rect x="187" y="106" width="1" height="1" fill="#b4b4b4"/><rect x="190" y="106" width="1" height="1" fill="#b4b4b4"/><rect x="187" y="109" width="1" height="1" fill="#b4b4b4"/><rect x="190" y="109" width="1" height="1" fill="#b4b4b4"/><g transform="translate(200,89)"><path d="M2,20l3,-17l4,-2l-3,18z" fill="#c3c3c3" stroke="#9a9a9a" stroke-width=".7"/><path d="M7,21l4,-18l4,-2l-4,19z" fill="#bdbdbd" stroke="#9a9a9a" stroke-width=".7"/><path d="M12,21l4,-18l5,-1l-4,19z" fill="#c9c9c9" stroke="#9a9a9a" stroke-width=".7"/></g><path d="M217,109h8l-4,4z" fill="#999"/><g transform="translate(234,89)"><path d="M1,23l2,-6l11,-16l3,2l-11,16z" fill="#d4d4d4" stroke="#a5a5a5"/><path d="M1,23l2,-6l3,2z" fill="#999"/></g><g transform="translate(265,89)"><rect x=".5" y=".5" width="19" height="20" rx="2" fill="#b1b1b1" stroke="#999"/><rect x="4" y="1" width="11" height="7" fill="#eee"/><rect x="4" y="12" width="11" height="8" fill="#eee"/><path d="M11,23l2,-5l8,-9l3,2l-8,9z" fill="#a6a6a6" stroke="#888" stroke-width=".8"/></g><g transform="translate(298,89)"><circle cx="4" cy="11" r="2.8" fill="#c3c3c3"/><circle cx="11" cy="3" r="2.8" fill="#c3c3c3"/><circle cx="18" cy="7" r="2.8" fill="#c3c3c3"/><rect x="12.5" y="12.5" width="10" height="10" rx="1.5" fill="#bdbdbd" stroke="#a8a8a8"/><path d="M17.5,14.5v6M14.8,16l5.4,3M14.8,19l5.4,-3" stroke="#fff" stroke-width="1.2"/></g><g transform="translate(332,89)"><rect x="1.5" y="2.5" width="5" height="5" fill="none" stroke="#999"/><path d="M6,5h13M4,8l-3,14" stroke="#aaa"/><path d="M8,20l10,-10M10,10l10,10" stroke="#a8a8a8" stroke-width="3"/></g><path d="M360,99h8l-4,4z" fill="#999"/><g transform="translate(377,89)"><rect x="1" y="3" width="18" height="5" fill="#dadada" stroke="#b0b0b0"/><rect x="1" y="10" width="18" height="5" fill="#dadada" stroke="#b0b0b0"/><rect x="1" y="17" width="18" height="5" fill="#dadada" stroke="#b0b0b0"/><path d="M8,22l2,-5l9,-16l3,2l-9,16z" fill="#c8c8c8" stroke="#999" stroke-width=".8"/></g><g transform="translate(411,89)"><path d="M1,5h16" stroke="#777" stroke-width="2"/><path d="M6,4v-2h6v2" fill="none" stroke="#777" stroke-width="1.5"/><path d="M3,7h12l-1,16h-10z" fill="none" stroke="#777" stroke-width="2"/><path d="M7,9v11M11,9v11" stroke="#777" stroke-width="1.5"/></g><g transform="translate(441,92)"><path d="M1,9l16,5M1,11l16,-5" stroke="#aaa" stroke-width="1.6"/><circle cx="19" cy="5" r="3" fill="none" stroke="#888" stroke-width="1.4"/><circle cx="19" cy="14" r="3" fill="none" stroke="#888" stroke-width="1.4"/></g><g transform="translate(478,90)"><path d="M5,.5h7l4,4v12h-11z" fill="#fff" stroke="#999"/><path d="M.5,5.5h7l4,4v12h-11z" fill="#fff" stroke="#888"/><path d="M2.5,12h7M2.5,14.5h7M2.5,17h7M2.5,19.5h7" stroke="#999" stroke-width=".8"/></g><g transform="translate(511,89)"><rect x=".5" y="2.5" width="16" height="20" rx="1" fill="#eaeaea" stroke="#999"/><rect x="4" y=".5" width="9" height="4" fill="#ccc" stroke="#999" stroke-width=".6"/><path d="M3.5,6.5h7l3,3v11h-10z" fill="#fff" stroke="#999" stroke-width=".8"/><path d="M5,11h7M5,13.5h7M5,16h7M5,18.5h7" stroke="#999" stroke-width=".8"/></g><g transform="translate(543,91)"><path d="M8,1l-7,6l7,6v-4c5,0 8,2 8,6c0,2 -2,4 -4,5c5,0 7,-3 7,-6c0,-5 -4,-9 -11,-9z" fill="#c2c2c2" stroke="#aaa" stroke-width=".6"/></g><path d="M576,98.5l3,2.8l-3,2.8M580,98.5l3,2.8l-3,2.8" fill="none" stroke="#000" stroke-width="1.7"/><rect x="594" y="94" width="1" height="1" fill="#b4b4b4"/><rect x="597" y="94" width="1" height="1" fill="#b4b4b4"/><rect x="594" y="97" width="1" height="1" fill="#b4b4b4"/><rect x="597" y="97" width="1" height="1" fill="#b4b4b4"/><rect x="594" y="100" width="1" height="1" fill="#b4b4b4"/><rect x="597" y="100" width="1" height="1" fill="#b4b4b4"/><rect x="594" y="103" width="1" height="1" fill="#b4b4b4"/><rect x="597" y="103" width="1" height="1" fill="#b4b4b4"/><rect x="594" y="106" width="1" height="1" fill="#b4b4b4"/><rect x="597" y="106" width="1" height="1" fill="#b4b4b4"/><rect x="594" y="109" width="1" height="1" fill="#b4b4b4"/><rect x="597" y="109" width="1" height="1" fill="#b4b4b4"/><path d="M607,112c2,-2 2,-20 5,-20c3,0 3,16 6,19c2,1 6,1 11,1z" fill="#7ccd4a" stroke="#4f9a2a" stroke-width=".6"/><path d="M612,112c2,-2 2,-20 5,-20c3,0 3,16 6,19c2,1 4,1 6,1z" fill="#d0d0d0" stroke="#999" stroke-width=".6"/><path d="M608,104v8M620,104v8" stroke="#e52a2a" stroke-width="1.6"/><path d="M640,112c2,-2 2,-20 5,-20c3,0 3,16 6,19c2,1 6,1 11,1z" fill="#7ccd4a" stroke="#4f9a2a" stroke-width=".6"/><path d="M645,112c2,-2 2,-20 5,-20c3,0 3,16 6,19c2,1 4,1 6,1z" fill="#d0d0d0" stroke="#999" stroke-width=".6"/><path d="M641,104v8M653,104v8" stroke="#e52a2a" stroke-width="1.6"/><path d="M639,100l5,-4v2.5h13v-2.5l5,4l-5,4v-2.5h-13v2.5z" fill="#dcdcdc" stroke="#888" stroke-width=".8"/><path d="M673,112c2,-2 2,-20 5,-20c3,0 3,16 6,19c2,1 6,1 11,1z" fill="#7ccd4a" stroke="#4f9a2a" stroke-width=".6"/><path d="M678,112c2,-2 2,-20 5,-20c3,0 3,16 6,19c2,1 4,1 6,1z" fill="#d0d0d0" stroke="#999" stroke-width=".6"/><path d="M706,112c2,-2 2,-20 5,-20c3,0 3,16 6,19c2,1 6,1 11,1z" fill="#7ccd4a" stroke="#4f9a2a" stroke-width=".6"/><path d="M711,112c2,-2 2,-20 5,-20c3,0 3,16 6,19c2,1 4,1 6,1z" fill="#d0d0d0" stroke="#999" stroke-width=".6"/><path d="M705,100l5,-4v2.5h13v-2.5l5,4l-5,4v-2.5h-13v2.5z" fill="#dcdcdc" stroke="#888" stroke-width=".8"/><circle cx="749" cy="99" r="6" fill="#f2d400"/><path d="M749.0,91.8l0.0,-2.6999999999999997" stroke="#f2d400" stroke-width="1.6"/><path d="M749.0,106.2l0.0,2.6999999999999997" stroke="#f2d400" stroke-width="1.6"/><path d="M741.8,99.0l-2.6999999999999997,0.0" stroke="#f2d400" stroke-width="1.6"/><path d="M756.2,99.0l2.6999999999999997,0.0" stroke="#f2d400" stroke-width="1.6"/><path d="M743.8,93.8l-1.95,-1.95" stroke="#f2d400" stroke-width="1.6"/><path d="M754.2,93.8l1.95,-1.95" stroke="#f2d400" stroke-width="1.6"/><path d="M743.8,104.2l-1.95,1.95" stroke="#f2d400" stroke-width="1.6"/><path d="M754.2,104.2l1.95,1.95" stroke="#f2d400" stroke-width="1.6"/><rect x="751" y="101" width="11" height="11" rx="1" fill="#5ea82e" stroke="#3f8a1a"/><path d="M753.5,109.5h6l-3,-6z" fill="#fff"/><circle cx="782" cy="99" r="6" fill="#f2d400"/><path d="M782.0,91.8l0.0,-2.6999999999999997" stroke="#f2d400" stroke-width="1.6"/><path d="M782.0,106.2l0.0,2.6999999999999997" stroke="#f2d400" stroke-width="1.6"/><path d="M774.8,99.0l-2.6999999999999997,0.0" stroke="#f2d400" stroke-width="1.6"/><path d="M789.2,99.0l2.6999999999999997,0.0" stroke="#f2d400" stroke-width="1.6"/><path d="M776.8,93.8l-1.95,-1.95" stroke="#f2d400" stroke-width="1.6"/><path d="M787.2,93.8l1.95,-1.95" stroke="#f2d400" stroke-width="1.6"/><path d="M776.8,104.2l-1.95,1.95" stroke="#f2d400" stroke-width="1.6"/><path d="M787.2,104.2l1.95,1.95" stroke="#f2d400" stroke-width="1.6"/><rect x="784" y="101" width="11" height="11" rx="1" fill="#5ea82e" stroke="#3f8a1a"/><path d="M786.5,103.5h6l-3,6z" fill="#fff"/><circle cx="816" cy="99" r="8.5" fill="#fff" stroke="#444" stroke-width="1.6"/><path d="M816,99m-6,6a8,8 0 0 1 11,-12z" fill="#555"/><rect x="817" y="101" width="11" height="11" rx="1" fill="#5ea82e" stroke="#3f8a1a"/><path d="M819.5,109.5h6l-3,-6z" fill="#fff"/><circle cx="849" cy="99" r="8.5" fill="#fff" stroke="#444" stroke-width="1.6"/><path d="M849,99m-6,6a8,8 0 0 1 11,-12z" fill="#555"/><rect x="850" y="101" width="11" height="11" rx="1" fill="#5ea82e" stroke="#3f8a1a"/><path d="M852.5,103.5h6l-3,6z" fill="#fff"/><path d="M874,98.5l3,2.8l-3,2.8M878,98.5l3,2.8l-3,2.8" fill="none" stroke="#000" stroke-width="1.7"/><rect x="892" y="94" width="1" height="1" fill="#b4b4b4"/><rect x="895" y="94" width="1" height="1" fill="#b4b4b4"/><rect x="892" y="97" width="1" height="1" fill="#b4b4b4"/><rect x="895" y="97" width="1" height="1" fill="#b4b4b4"/><rect x="892" y="100" width="1" height="1" fill="#b4b4b4"/><rect x="895" y="100" width="1" height="1" fill="#b4b4b4"/><rect x="892" y="103" width="1" height="1" fill="#b4b4b4"/><rect x="895" y="103" width="1" height="1" fill="#b4b4b4"/><rect x="892" y="106" width="1" height="1" fill="#b4b4b4"/><rect x="895" y="106" width="1" height="1" fill="#b4b4b4"/><rect x="892" y="109" width="1" height="1" fill="#b4b4b4"/><rect x="895" y="109" width="1" height="1" fill="#b4b4b4"/><g transform="translate(904,93)"><path d="M.5,6l5,-5h15v10h-15z" fill="#eaeaea" stroke="#aaa"/><text x="6" y="9" font-size="8" font-weight="bold" font-family="Liberation Sans" fill="#999">abc</text></g><g transform="translate(938,90)"><circle cx="8" cy="8" r="7.5" fill="#a8a8a8"/><path d="M8,8v-7.5a7.5,7.5 0 0 1 7.5,7.5z" fill="#cfcfcf"/><rect x="9" y="14" width="4" height="8" fill="#cfcfcf"/><rect x="14" y="11" width="5" height="11" fill="#9a9a9a"/></g><g transform="translate(970,90)"><rect x=".5" y=".5" width="23" height="21" fill="#dce8f6" stroke="#2f74d0"/><path d="M2,7l4,-4h12v9h-12z" fill="#f2d44a" stroke="#7a6a20" stroke-width=".6"/><text x="6" y="11" font-size="8" font-weight="bold" font-family="Liberation Sans" fill="#333">ab</text><circle cx="18" cy="17" r="4.5" fill="#c51f1f"/></g><path d="M1009,98.5l3,2.8l-3,2.8M1013,98.5l3,2.8l-3,2.8" fill="none" stroke="#000" stroke-width="1.7"/><rect x="1027" y="94" width="1" height="1" fill="#b4b4b4"/><rect x="1030" y="94" width="1" height="1" fill="#b4b4b4"/><rect x="1027" y="97" width="1" height="1" fill="#b4b4b4"/><rect x="1030" y="97" width="1" height="1" fill="#b4b4b4"/><rect x="1027" y="100" width="1" height="1" fill="#b4b4b4"/><rect x="1030" y="100" width="1" height="1" fill="#b4b4b4"/><rect x="1027" y="103" width="1" height="1" fill="#b4b4b4"/><rect x="1030" y="103" width="1" height="1" fill="#b4b4b4"/><rect x="1027" y="106" width="1" height="1" fill="#b4b4b4"/><rect x="1030" y="106" width="1" height="1" fill="#b4b4b4"/><rect x="1027" y="109" width="1" height="1" fill="#b4b4b4"/><rect x="1030" y="109" width="1" height="1" fill="#b4b4b4"/><g transform="translate(1041,90)"><rect x=".5" y="1" width="19" height="20" rx="3" fill="#1f9a2a" stroke="#0f5f1a"/><path d="M1,7c5,2 13,2 19,0M1,14c5,2 13,2 19,0" stroke="#6fd06f" fill="none"/><path d="M7,17l6,-6l2,2l-6,6z" fill="#eee"/><path d="M12,10l3,-3M14,12l3,-3" stroke="#f2d44a" stroke-width="1.5"/></g><g transform="translate(1073,90)"><path d="M1,9h5v13h-5z" fill="#47c02a" stroke="#1f7f1a"/><path d="M8,9h6c6,0 8,3 8,6.5s-2,6.5 -8,6.5h-6z" fill="#47c02a" stroke="#1f7f1a"/><path d="M12,12h2c3,0 4,1.5 4,3.5s-1,3.5 -4,3.5h-2z" fill="#fff" stroke="#1f7f1a" stroke-width=".6"/><path d="M13,8l8,-6M16,1h6v6" fill="none" stroke="#000" stroke-width="2"/></g><g transform="translate(1107,90)"><rect x=".5" y=".5" width="21" height="21" fill="#4a7f3a" stroke="#333" stroke-width=".6"/><rect x="1" y="1" width="20" height="3" fill="#2fc02f"/><rect x="3" y="5" width="18" height="2" fill="#2fc02f"/><path d="M2,8h18v13h-18z" fill="#7fa86a"/><path d="M2,15c4,-4 8,2 12,-3c3,-2 5,1 6,2v7h-18z" fill="#3f6a2f"/></g><g transform="translate(1141,90)"><ellipse cx="10" cy="6" rx="9" ry="5" fill="#d4d4d4" stroke="#999"/><path d="M1,6v6c0,3 4,5 9,5s9,-2 9,-5v-6" fill="#c4c4c4" stroke="#999"/><path d="M10,22l-6,-7h4v-5h4v5h4z" fill="#5f8fc4" stroke="#2f5f9f" stroke-width=".6"/></g><path d="M1180,98.5l3,2.8l-3,2.8M1184,98.5l3,2.8l-3,2.8" fill="none" stroke="#000" stroke-width="1.7"/><rect x="1198" y="94" width="1" height="1" fill="#b4b4b4"/><rect x="1201" y="94" width="1" height="1" fill="#b4b4b4"/><rect x="1198" y="97" width="1" height="1" fill="#b4b4b4"/><rect x="1201" y="97" width="1" height="1" fill="#b4b4b4"/><rect x="1198" y="100" width="1" height="1" fill="#b4b4b4"/><rect x="1201" y="100" width="1" height="1" fill="#b4b4b4"/><rect x="1198" y="103" width="1" height="1" fill="#b4b4b4"/><rect x="1201" y="103" width="1" height="1" fill="#b4b4b4"/><rect x="1198" y="106" width="1" height="1" fill="#b4b4b4"/><rect x="1201" y="106" width="1" height="1" fill="#b4b4b4"/><rect x="1198" y="109" width="1" height="1" fill="#b4b4b4"/><rect x="1201" y="109" width="1" height="1" fill="#b4b4b4"/><g transform="translate(1211,90)"><path d="M11,1l10,17h-20z" fill="#7fb52a"/><path d="M11,8l5,9h-10z" fill="#f4f4f4"/><rect x="1" y="18" width="21" height="2" fill="#e8e060"/><rect x="1" y="20" width="21" height="2" fill="#f08a2a"/></g><path d="M1242,98.5l3,2.8l-3,2.8M1246,98.5l3,2.8l-3,2.8" fill="none" stroke="#000" stroke-width="1.7"/><rect x="1260" y="94" width="1" height="1" fill="#b4b4b4"/><rect x="1263" y="94" width="1" height="1" fill="#b4b4b4"/><rect x="1260" y="97" width="1" height="1" fill="#b4b4b4"/><rect x="1263" y="97" width="1" height="1" fill="#b4b4b4"/><rect x="1260" y="100" width="1" height="1" fill="#b4b4b4"/><rect x="1263" y="100" width="1" height="1" fill="#b4b4b4"/><rect x="1260" y="103" width="1" height="1" fill="#b4b4b4"/><rect x="1263" y="103" width="1" height="1" fill="#b4b4b4"/><rect x="1260" y="106" width="1" height="1" fill="#b4b4b4"/><rect x="1263" y="106" width="1" height="1" fill="#b4b4b4"/><rect x="1260" y="109" width="1" height="1" fill="#b4b4b4"/><rect x="1263" y="109" width="1" height="1" fill="#b4b4b4"/><g transform="translate(1274,90)"><path d="M10,1c-5,0 -5,2 -5,4v3h6v1h-8c-2,0 -3,2 -3,5s1,5 3,5h2v-3c0,-2 2,-4 4,-4h6c2,0 3,-1 3,-3v-4c0,-2 -2,-4 -8,-4z" fill="#3f74b0"/><circle cx="8" cy="4" r="1" fill="#fff"/><path d="M11,21c5,0 5,-2 5,-4v-3h-6v-1h8c2,0 3,-2 3,-5s-1,-5 -3,-5h-2v3c0,2 -2,4 -4,4h-6c-2,0 -3,1 -3,3v4c0,2 2,4 8,4z" fill="#f2c94c"/><path d="M14,16l6,3l-6,3" fill="none" stroke="#555" stroke-width="1.2"/></g><path d="M1304,98.5l3,2.8l-3,2.8M1308,98.5l3,2.8l-3,2.8" fill="none" stroke="#000" stroke-width="1.7"/><rect x="1322" y="94" width="1" height="1" fill="#b4b4b4"/><rect x="1325" y="94" width="1" height="1" fill="#b4b4b4"/><rect x="1322" y="97" width="1" height="1" fill="#b4b4b4"/><rect x="1325" y="97" width="1" height="1" fill="#b4b4b4"/><rect x="1322" y="100" width="1" height="1" fill="#b4b4b4"/><rect x="1325" y="100" width="1" height="1" fill="#b4b4b4"/><rect x="1322" y="103" width="1" height="1" fill="#b4b4b4"/><rect x="1325" y="103" width="1" height="1" fill="#b4b4b4"/><rect x="1322" y="106" width="1" height="1" fill="#b4b4b4"/><rect x="1325" y="106" width="1" height="1" fill="#b4b4b4"/><rect x="1322" y="109" width="1" height="1" fill="#b4b4b4"/><rect x="1325" y="109" width="1" height="1" fill="#b4b4b4"/><g transform="translate(1336,90)"><rect x=".5" y=".5" width="20" height="20" fill="#6b98cc" stroke="#263b57"/><rect x="1" y="1" width="4" height="19" fill="#263b57"/><text x="9" y="16" font-size="14" font-family="Liberation Sans" fill="#fff">?</text></g><rect x="5" y="133" width="1" height="1" fill="#b4b4b4"/><rect x="8" y="133" width="1" height="1" fill="#b4b4b4"/><rect x="5" y="136" width="1" height="1" fill="#b4b4b4"/><rect x="8" y="136" width="1" height="1" fill="#b4b4b4"/><rect x="5" y="139" width="1" height="1" fill="#b4b4b4"/><rect x="8" y="139" width="1" height="1" fill="#b4b4b4"/><rect x="5" y="142" width="1" height="1" fill="#b4b4b4"/><rect x="8" y="142" width="1" height="1" fill="#b4b4b4"/><rect x="5" y="145" width="1" height="1" fill="#b4b4b4"/><rect x="8" y="145" width="1" height="1" fill="#b4b4b4"/><rect x="5" y="148" width="1" height="1" fill="#b4b4b4"/><rect x="8" y="148" width="1" height="1" fill="#b4b4b4"/><g transform="translate(17,128)"><path d="M1,1l19,22h-19z" fill="#d4d4d4" stroke="#777" stroke-width="1.2"/><path d="M4,13l6,7h-6z" fill="#f4f4f4" stroke="#777"/><rect x="16" y="2" width="7" height="21" fill="#dedede" stroke="#888" stroke-width=".8"/><path d="M19,5h4M20,8h3M19,11h4M20,14h3M19,17h4" stroke="#888" stroke-width=".7"/></g><g transform="translate(50,128)"><circle cx="6" cy="6" r="2.5" fill="#bdbdbd"/><circle cx="13" cy="3" r="2.5" fill="#bdbdbd"/><circle cx="18" cy="8" r="2.5" fill="#bdbdbd"/><circle cx="3" cy="13" r="2.5" fill="#bdbdbd"/><rect x="9" y="12" width="12" height="11" rx="1.5" fill="#666"/><path d="M11,17.5h6M14.5,14.5l3,3l-3,3" fill="none" stroke="#fff" stroke-width="2"/></g><path d="M80,138h8l-4,4z" fill="#888"/><path d="M97,135c0,-5 6,-6 10,-4c4,1 8,-1 10,2c2,3 0,7 -3,7c-3,1 -5,0 -8,1c-4,1 -9,0 -9,-6z" fill="#c4c4c4" stroke="#9a9a9a" stroke-width=".8"/><rect x="107" y="140" width="12" height="11" rx="1.5" fill="#888"/><circle cx="113" cy="145.5" r="3" fill="none" stroke="#fff" stroke-width="1.4"/><g transform="translate(129,128)"><circle cx="8" cy="8" r="7" fill="#cfcfcf" stroke="#aaa"/><path d="M12,6l8,2l3,7l-5,7h-7l-3,-6z" fill="#cfcfcf" stroke="#999"/><path d="M8,8l7,7" stroke="#888"/></g><path d="M163,135c0,-5 6,-6 10,-4c4,1 8,-1 10,2c2,3 0,7 -3,7c-3,1 -5,0 -8,1c-4,1 -9,0 -9,-6z" fill="#c4c4c4" stroke="#9a9a9a" stroke-width=".8"/><ellipse cx="170" cy="135" rx="4.5" ry="2.6" fill="#eee" stroke="#999" stroke-width=".8"/><rect x="175.5" y="141.5" width="10" height="10" rx="1.5" fill="#bdbdbd" stroke="#a8a8a8"/><path d="M180.5,143.5v6M177.8,145l5.4,3M177.8,148l5.4,-3" stroke="#fff" stroke-width="1.2"/><path d="M196,135c0,-5 6,-6 10,-4c4,1 8,-1 10,2c2,3 0,7 -3,7c-3,1 -5,0 -8,1c-4,1 -9,0 -9,-6z" fill="#c4c4c4" stroke="#9a9a9a" stroke-width=".8"/><path d="M196,150c0,-4 3,-8 8,-8c1,3 -2,8 -8,8z" fill="#b9b9b9" stroke="#999" stroke-width=".8"/><rect x="208.5" y="141.5" width="10" height="10" rx="1.5" fill="#bdbdbd" stroke="#a8a8a8"/><path d="M213.5,143.5v6M210.8,145l5.4,3M210.8,148l5.4,-3" stroke="#fff" stroke-width="1.2"/><path d="M229,135c0,-5 6,-6 10,-4c4,1 8,-1 10,2c2,3 0,7 -3,7c-3,1 -5,0 -8,1c-4,1 -9,0 -9,-6z" fill="#c4c4c4" stroke="#9a9a9a" stroke-width=".8"/><ellipse cx="236" cy="135" rx="4.5" ry="2.6" fill="#eee" stroke="#999" stroke-width=".8"/><rect x="240.5" y="141.5" width="10" height="10" rx="1.5" fill="#bdbdbd" stroke="#a8a8a8"/><path d="M245.5,143.5v6M242.8,145l5.4,3M242.8,148l5.4,-3" stroke="#fff" stroke-width="1.2"/><path d="M262,135c0,-5 6,-6 10,-4c4,1 8,-1 10,2c2,3 0,7 -3,7c-3,1 -5,0 -8,1c-4,1 -9,0 -9,-6z" fill="#c4c4c4" stroke="#9a9a9a" stroke-width=".8"/><ellipse cx="269" cy="135" rx="4.5" ry="2.6" fill="#eee" stroke="#999" stroke-width=".8"/><rect x="273.5" y="141.5" width="10" height="10" rx="1.5" fill="#bdbdbd" stroke="#a8a8a8"/><path d="M276,144l5,5M281,144l-5,5" stroke="#fff" stroke-width="1.6"/><path d="M295,135c0,-5 6,-6 10,-4c4,1 8,-1 10,2c2,3 0,7 -3,7c-3,1 -5,0 -8,1c-4,1 -9,0 -9,-6z" fill="#c4c4c4" stroke="#9a9a9a" stroke-width=".8"/><path d="M295,150c0,-4 3,-8 8,-8c1,3 -2,8 -8,8z" fill="#b9b9b9" stroke="#999" stroke-width=".8"/><rect x="306.5" y="141.5" width="10" height="10" rx="1.5" fill="#bdbdbd" stroke="#a8a8a8"/><path d="M309,144l5,5M314,144l-5,5" stroke="#fff" stroke-width="1.6"/><g transform="translate(327,129)"><path d="M1,4c0,-3 4,-4 9,-3c5,1 11,0 12,3c1,4 -2,6 -6,7c-3,1 -5,1 -6,4c-1,5 -3,8 -5,7c-3,-1 -4,-8 -4,-18z" fill="#c4c4c4" stroke="#999" stroke-width=".8"/></g><g transform="translate(360,129)"><path d="M2,12c0,-7 7,-12 13,-11c6,1 8,7 4,11c-3,3 -6,4 -8,8c-3,4 -9,1 -9,-8z" fill="#bdbdbd" stroke="#999" stroke-width="1"/></g><g transform="translate(393,129)"><path d="M1,1l8,12l8,-9h6" fill="none" stroke="#aaa"/><rect x="0" y="0" width="3" height="3" fill="#fff" stroke="#999" stroke-width=".6"/><rect x="15" y="3" width="3" height="3" fill="#fff" stroke="#999" stroke-width=".6"/><rect x="20" y="3" width="3" height="3" fill="#fff" stroke="#999" stroke-width=".6"/><rect x="12" y="12" width="11" height="11" rx="1.5" fill="#888"/><circle cx="17.5" cy="17.5" r="3" fill="none" stroke="#fff" stroke-width="1.4"/></g><path d="M427,135c0,-5 5,-6 8,-4l1,8c-3,2 -9,2 -9,-4zM440,131c4,-2 8,0 8,4c0,4 -4,6 -8,5z" fill="#c4c4c4" stroke="#999" stroke-width=".8"/><path d="M435,130l4,15M440,130l-4,15" stroke="#999" stroke-width="1.2"/><circle cx="434" cy="148" r="2.8" fill="none" stroke="#999" stroke-width="1.3"/><circle cx="442" cy="148" r="2.8" fill="none" stroke="#999" stroke-width="1.3"/><path d="M460,135c0,-5 5,-6 8,-4l1,8c-3,2 -9,2 -9,-4zM473,131c4,-2 8,0 8,4c0,4 -4,6 -8,5z" fill="#c4c4c4" stroke="#999" stroke-width=".8"/><path d="M468,130l4,15M473,130l-4,15" stroke="#999" stroke-width="1.2"/><circle cx="467" cy="148" r="2.8" fill="none" stroke="#999" stroke-width="1.3"/><circle cx="475" cy="148" r="2.8" fill="none" stroke="#999" stroke-width="1.3"/><g transform="translate(492,129)"><path d="M1,5c0,-5 6,-5 8,-3c2,2 5,2 7,0c3,-2 7,0 7,4c0,4 -4,6 -7,4c-2,-1 -5,-1 -7,1c-3,2 -8,1 -8,-6z" fill="#b9b9b9" stroke="#999" stroke-width=".8"/><path d="M9,4h6M9,7h6" stroke="#666"/><path d="M5,11c0,5 4,8 8,10" fill="none" stroke="#888"/></g><g transform="translate(526,129)"><path d="M1,1h20M1,8h20M1,15h20M1,22h20M1,1v7M1,15v7M21,1v7M21,15v7" stroke="#999"/><path d="M5,4h12M5,11h12M5,18h12" stroke="#bbb"/><path d="M11,2v4M11,9v4M11,16v4" stroke="#777"/></g><g transform="translate(559,129)"><path d="M6,20a8,8 0 0 1 6,-16" fill="none" stroke="#888"/><path d="M11,1h1v10" stroke="#888"/><path d="M12,1l8,4l-8,4z" fill="#b3b3b3" stroke="#999" stroke-width=".6"/><path d="M12,12l6,10h-12z" fill="#f4f4f4" stroke="#aaa"/></g><path d="M587,138h8l-4,4z" fill="#999"/><rect x="5" y="171" width="1" height="1" fill="#b4b4b4"/><rect x="8" y="171" width="1" height="1" fill="#b4b4b4"/><rect x="5" y="174" width="1" height="1" fill="#b4b4b4"/><rect x="8" y="174" width="1" height="1" fill="#b4b4b4"/><rect x="5" y="177" width="1" height="1" fill="#b4b4b4"/><rect x="8" y="177" width="1" height="1" fill="#b4b4b4"/><rect x="5" y="180" width="1" height="1" fill="#b4b4b4"/><rect x="8" y="180" width="1" height="1" fill="#b4b4b4"/><rect x="5" y="183" width="1" height="1" fill="#b4b4b4"/><rect x="8" y="183" width="1" height="1" fill="#b4b4b4"/><rect x="5" y="186" width="1" height="1" fill="#b4b4b4"/><rect x="8" y="186" width="1" height="1" fill="#b4b4b4"/><g transform="translate(19,168)"><path d="M3,20c0,-8 6,-16 14,-17" fill="none" stroke="#aaa"/><rect x="1" y="18" width="3" height="3" fill="#fff" stroke="#aaa" stroke-width=".8"/><rect x="16" y="1" width="3" height="3" fill="#fff" stroke="#aaa" stroke-width=".8"/><rect x="11.5" y="12.5" width="10" height="10" rx="1.5" fill="#bdbdbd" stroke="#a8a8a8"/><path d="M16.5,14.5v6M13.8,16l5.4,3M13.8,19l5.4,-3" stroke="#fff" stroke-width="1.2"/></g><path d="M47,177h8l-4,4z" fill="#999"/><g transform="translate(63,168)"><circle cx="9" cy="9" r="7.5" fill="none" stroke="#c4c4c4" stroke-width="3"/><rect x="2" y="12" width="3" height="3" fill="#fff" stroke="#aaa" stroke-width=".8"/><rect x="12" y="3" width="3" height="3" fill="#fff" stroke="#aaa" stroke-width=".8"/><rect x="12.5" y="12.5" width="10" height="10" rx="1.5" fill="#bdbdbd" stroke="#a8a8a8"/><path d="M17.5,14.5v6M14.8,16l5.4,3M14.8,19l5.4,-3" stroke="#fff" stroke-width="1.2"/></g><path d="M92,177h8l-4,4z" fill="#999"/><g transform="translate(107,168)"><ellipse cx="10" cy="8" rx="9" ry="5" fill="none" stroke="#bbb" stroke-width="1.8" transform="rotate(-20 10 8)"/><circle cx="9" cy="7" r="1.8" fill="none" stroke="#aaa"/><rect x="12.5" y="12.5" width="10" height="10" rx="1.5" fill="#bdbdbd" stroke="#a8a8a8"/><path d="M17.5,14.5v6M14.8,16l5.4,3M14.8,19l5.4,-3" stroke="#fff" stroke-width="1.2"/></g><path d="M137,177h8l-4,4z" fill="#999"/><g transform="translate(154,168)"><rect x="1.5" y="2.5" width="17" height="12" fill="none" stroke="#c4c4c4" stroke-width="3"/><rect x="6" y="7" width="3" height="3" fill="#fff" stroke="#aaa" stroke-width=".8"/><rect x="11.5" y="12.5" width="10" height="10" rx="1.5" fill="#bdbdbd" stroke="#a8a8a8"/><path d="M16.5,14.5v6M13.8,16l5.4,3M13.8,19l5.4,-3" stroke="#fff" stroke-width="1.2"/></g><path d="M182,177h8l-4,4z" fill="#999"/><g transform="translate(198,168)"><path d="M4,4l9,-3l6,5l-2,9l-8,1l-7,-6z" fill="none" stroke="#c4c4c4" stroke-width="3"/><rect x="12.5" y="12.5" width="10" height="10" rx="1.5" fill="#bdbdbd" stroke="#a8a8a8"/><path d="M17.5,14.5v6M14.8,16l5.4,3M14.8,19l5.4,-3" stroke="#fff" stroke-width="1.2"/></g><path d="M227,177h8l-4,4z" fill="#999"/><rect x="246" y="172" width="1" height="1" fill="#b4b4b4"/><rect x="249" y="172" width="1" height="1" fill="#b4b4b4"/><rect x="246" y="175" width="1" height="1" fill="#b4b4b4"/><rect x="249" y="175" width="1" height="1" fill="#b4b4b4"/><rect x="246" y="178" width="1" height="1" fill="#b4b4b4"/><rect x="249" y="178" width="1" height="1" fill="#b4b4b4"/><rect x="246" y="181" width="1" height="1" fill="#b4b4b4"/><rect x="249" y="181" width="1" height="1" fill="#b4b4b4"/><rect x="246" y="184" width="1" height="1" fill="#b4b4b4"/><rect x="249" y="184" width="1" height="1" fill="#b4b4b4"/><g transform="translate(260,168)"><path d="M5,5l15,-4l2,8l-4,12l-12,0l-5,-6z" fill="#fff" stroke="#444" stroke-width="1"/><path d="M1,15l4,-10l4,10z" fill="#bbb" stroke="#444" stroke-width=".7"/><path d="M1,15l8,0l-3,6z" fill="#555"/><path d="M9,15l9,-1l0,7l-12,0z" fill="#ccc" stroke="#444" stroke-width=".7"/></g><rect x="295" y="172" width="1" height="1" fill="#b4b4b4"/><rect x="298" y="172" width="1" height="1" fill="#b4b4b4"/><rect x="295" y="175" width="1" height="1" fill="#b4b4b4"/><rect x="298" y="175" width="1" height="1" fill="#b4b4b4"/><rect x="295" y="178" width="1" height="1" fill="#b4b4b4"/><rect x="298" y="178" width="1" height="1" fill="#b4b4b4"/><rect x="295" y="181" width="1" height="1" fill="#b4b4b4"/><rect x="298" y="181" width="1" height="1" fill="#b4b4b4"/><rect x="295" y="184" width="1" height="1" fill="#b4b4b4"/><rect x="298" y="184" width="1" height="1" fill="#b4b4b4"/><path d="M309,174c0,-5 8,-6 12,-4c4,1 9,0 9,4c0,5 -6,5 -10,5c-5,0 -11,2 -11,-5z" fill="#c8c8c8" stroke="#999" stroke-width=".8"/><path d="M308,190c0,-4 3,-9 8,-9c2,4 -2,9 -8,9z" fill="#bdbdbd" stroke="#999" stroke-width=".8"/><path d="M319,181l6,-7M319,177l6,7" stroke="#888"/><ellipse cx="326" cy="182" rx="3" ry="2" fill="none" stroke="#888"/><path d="M337,177h8l-4,4z" fill="#999"/><path d="M354,174c0,-5 8,-6 12,-4c4,1 9,0 9,4c0,5 -6,5 -10,5c-5,0 -11,2 -11,-5z" fill="#c8c8c8" stroke="#999" stroke-width=".8"/><path d="M353,190c0,-4 3,-9 8,-9c2,4 -2,9 -8,9z" fill="#bdbdbd" stroke="#999" stroke-width=".8"/><path d="M364,181l6,-7M364,177l6,7" stroke="#888"/><ellipse cx="371" cy="182" rx="3" ry="2" fill="none" stroke="#888"/><rect x="365.5" y="180.5" width="10" height="10" rx="1.5" fill="#bdbdbd" stroke="#a8a8a8"/><path d="M370.5,182.5v6M367.8,184l5.4,3M367.8,187l5.4,-3" stroke="#fff" stroke-width="1.2"/><path d="M387,174c0,-5 5,-6 8,-4l1,8c-3,2 -9,2 -9,-4zM400,170c4,-2 8,0 8,4c0,4 -4,6 -8,5z" fill="#c4c4c4" stroke="#999" stroke-width=".8"/><path d="M395,169l4,15M400,169l-4,15" stroke="#999" stroke-width="1.2"/><circle cx="394" cy="187" r="2.8" fill="none" stroke="#999" stroke-width="1.3"/><circle cx="402" cy="187" r="2.8" fill="none" stroke="#999" stroke-width="1.3"/><g transform="translate(418,168)"><path d="M1,5c0,-5 6,-5 9,-3c2,2 4,2 6,0c3,-2 8,0 8,4c0,4 -4,6 -8,5c-2,-1 -5,-1 -7,1c-3,2 -8,0 -8,-7z" fill="#b9b9b9" stroke="#999" stroke-width=".8"/><path d="M11,3h6M11,6h6M11,9h6M11,3v7M14,3v7" stroke="#777"/><path d="M9,13c3,3 -3,5 1,9" fill="none" stroke="#888"/></g><g transform="translate(451,168)"><rect x=".5" y=".5" width="23" height="23" fill="none" stroke="#ccc" stroke-dasharray="2,2"/><path d="M2,5c0,-5 6,-5 10,-3c4,1 10,0 10,4c0,4 -6,5 -10,5c-5,0 -10,0 -10,-6z" fill="#ddd" stroke="#999" stroke-width=".8"/><path d="M2,22c0,-4 3,-8 7,-8c1,4 -2,8 -7,8z" fill="#e4e4e4" stroke="#999" stroke-width=".8"/><rect x="13" y="13" width="10" height="10" rx="1.5" fill="#999"/><circle cx="18" cy="18" r="2.5" fill="none" stroke="#fff" stroke-width="1.3"/></g><g transform="translate(485,171)"><path d="M1,6c0,-4 4,-6 9,-5c4,1 6,1 10,0c3,0 4,3 3,6c-1,4 -4,4 -8,4c-3,0 -6,2 -9,2c-3,0 -5,-2 -5,-7z" fill="#bdbdbd" stroke="#999" stroke-width=".8"/><ellipse cx="8" cy="6" rx="5" ry="3" fill="#e4e4e4" stroke="#999" stroke-width=".6" stroke-dasharray="1,1"/></g><g transform="translate(517,171)"><path d="M1,6c0,-4 4,-6 9,-5c4,1 6,1 10,0c3,0 4,3 3,6c-1,4 -4,4 -8,4c-3,0 -6,2 -9,2c-3,0 -5,-2 -5,-7z" fill="none" stroke="#999" stroke-width=".9" stroke-dasharray="2,1.5"/><path d="M3,6c0,-3 2,-4 5,-4c3,0 4,2 4,4c0,2 -2,3 -5,3c-3,0 -4,-1 -4,-3z" fill="#bdbdbd" stroke="#999" stroke-width=".6"/></g><g transform="translate(551,168)"><path d="M1,6c0,-4 4,-6 9,-5c4,1 6,1 10,0c3,0 4,3 3,6c-1,4 -4,4 -8,4c-3,0 -6,2 -9,2c-3,0 -5,-2 -5,-7z" fill="#e8e8e8" stroke="#999" stroke-width=".8"/><path d="M4,6c0,-3 2,-4 5,-4c3,0 4,2 4,4c0,2 -2,3 -5,3c-3,0 -4,-1 -4,-3z" fill="#bdbdbd" stroke="#999" stroke-width=".6"/><rect x="12.5" y="12.5" width="10" height="10" rx="1.5" fill="#bdbdbd" stroke="#a8a8a8"/><path d="M17.5,14.5v6M14.8,16l5.4,3M14.8,19l5.4,-3" stroke="#fff" stroke-width="1.2"/></g><path d="M580,177h8l-4,4z" fill="#999"/><g transform="translate(595,168)"><path d="M1,6c0,-5 5,-6 9,-5c4,1 4,6 2,9c-2,3 -11,4 -11,-4z" fill="#ececec" stroke="#888" stroke-width=".8"/><path d="M9,3c4,-3 13,-3 14,2c1,5 -2,7 -6,7c-4,0 -10,-1 -8,-9z" fill="#d8d8d8" stroke="#888" stroke-width=".8"/><rect x="12.5" y="12.5" width="10" height="10" rx="1.5" fill="#bdbdbd" stroke="#a8a8a8"/><path d="M17.5,14.5v6M14.8,16l5.4,3M14.8,19l5.4,-3" stroke="#fff" stroke-width="1.2"/></g><path d="M625,177h8l-4,4z" fill="#999"/><g transform="translate(640,168)"><path d="M1,6c0,-5 5,-6 9,-5c4,1 4,6 2,9c-2,3 -11,4 -11,-4z" fill="#aaa" stroke="#777" stroke-width=".8"/><path d="M9,3c4,-3 13,-3 14,2c1,5 -2,7 -6,7c-4,0 -10,-1 -8,-9z" fill="#c8c8c8" stroke="#777" stroke-width=".8"/><rect x="12.5" y="12.5" width="10" height="10" rx="1.5" fill="#bdbdbd" stroke="#a8a8a8"/><path d="M17.5,14.5v6M14.8,16l5.4,3M14.8,19l5.4,-3" stroke="#fff" stroke-width="1.2"/></g><g transform="translate(672,168)"><path d="M1,7c0,-5 5,-6 9,-4c4,2 2,11 -2,11c-4,0 -7,-2 -7,-7z" fill="#c4c4c4" stroke="#999" stroke-width=".8"/><path d="M13,4c4,-3 11,-1 11,4c0,5 -4,8 -7,8c-4,0 -6,-4 -4,-12z" fill="#b9b9b9" stroke="#999" stroke-width=".8"/><path d="M3,2l10,13M16,2h7" stroke="#999"/><rect x="11" y="14" width="12" height="9" fill="#e8e8e8" stroke="#bbb" stroke-dasharray="1.5,1.5"/></g><g transform="translate(706,168)"><path d="M4,6l5,15l6,-10l8,-10M11,4l4,7" fill="none" stroke="#c8c8c8" stroke-width="2"/><circle cx="4" cy="6" r="1.8" fill="#fff" stroke="#ccc"/><circle cx="20" cy="3" r="2" fill="#fff" stroke="#bbb"/><circle cx="24" cy="3" r="2" fill="#fff" stroke="#bbb"/><rect x="13" y="12" width="11" height="11" rx="1.5" fill="#999"/><circle cx="18.5" cy="17.5" r="2.5" fill="none" stroke="#fff" stroke-width="1.3"/></g><path d="M736,177h8l-4,4z" fill="#999"/><path d="M753,173c3,-3 6,-3 10,-1c4,2 8,-3 11,0c2,3 0,7 0,10c0,3 -5,3 -8,2c-4,-1 -10,3 -12,0c-2,-3 -1,-9 -1,-11z" fill="#e4e4e4" stroke="#999" stroke-width=".8"/><path d="M756,185l6,-3l12,-1" fill="none" stroke="#aaa"/><text x="769" y="191" font-size="10" font-family="Liberation Serif" fill="#555">ʃ</text><path d="M786,173c3,-3 6,-3 10,-1c4,2 8,-3 11,0c2,3 0,7 0,10c0,3 -5,3 -8,2c-4,-1 -10,3 -12,0c-2,-3 -1,-9 -1,-11z" fill="#e4e4e4" stroke="#999" stroke-width=".8"/><path d="M789,185l6,-3l12,-1" fill="none" stroke="#aaa"/><text x="802" y="191" font-size="10" font-family="Liberation Serif" fill="#555">d</text><path d="M819,173c3,-3 6,-3 10,-1c4,2 8,-3 11,0c2,3 0,7 0,10c0,3 -5,3 -8,2c-4,-1 -10,3 -12,0c-2,-3 -1,-9 -1,-11z" fill="#e4e4e4" stroke="#999" stroke-width=".8"/><path d="M822,185l6,-3l12,-1" fill="none" stroke="#aaa"/><text x="835" y="191" font-size="10" font-family="Liberation Serif" fill="#555">ʃ</text><g transform="translate(852,170)"><path d="M1,10l9,-9l11,11l-9,9z" fill="#a9a9a9" stroke="#999" stroke-width=".6"/><path d="M3,2l16,18" stroke="#e0e0e0" stroke-width="1.5" stroke-dasharray="2,1"/></g><rect x="887" y="171" width="1" height="1" fill="#b4b4b4"/><rect x="890" y="171" width="1" height="1" fill="#b4b4b4"/><rect x="887" y="174" width="1" height="1" fill="#b4b4b4"/><rect x="890" y="174" width="1" height="1" fill="#b4b4b4"/><rect x="887" y="177" width="1" height="1" fill="#b4b4b4"/><rect x="890" y="177" width="1" height="1" fill="#b4b4b4"/><rect x="887" y="180" width="1" height="1" fill="#b4b4b4"/><rect x="890" y="180" width="1" height="1" fill="#b4b4b4"/><rect x="887" y="183" width="1" height="1" fill="#b4b4b4"/><rect x="890" y="183" width="1" height="1" fill="#b4b4b4"/><rect x="887" y="186" width="1" height="1" fill="#b4b4b4"/><rect x="890" y="186" width="1" height="1" fill="#b4b4b4"/><g transform="translate(900,169)"><rect x=".5" y=".5" width="14" height="8" fill="#fff" stroke="#999"/><path d="M13,8v2" stroke="#2a4fb0" stroke-width="2"/><path d="M13,12c-2,-1 -3,1 -2,3l3,5c1,2 6,2 7,-1c1,-3 0,-6 -2,-6l-4,0l-1,-2" fill="#fff" stroke="#777" stroke-width="1"/></g><rect x="936" y="172" width="1" height="1" fill="#b4b4b4"/><rect x="939" y="172" width="1" height="1" fill="#b4b4b4"/><rect x="936" y="175" width="1" height="1" fill="#b4b4b4"/><rect x="939" y="175" width="1" height="1" fill="#b4b4b4"/><rect x="936" y="178" width="1" height="1" fill="#b4b4b4"/><rect x="939" y="178" width="1" height="1" fill="#b4b4b4"/><rect x="936" y="181" width="1" height="1" fill="#b4b4b4"/><rect x="939" y="181" width="1" height="1" fill="#b4b4b4"/><rect x="936" y="184" width="1" height="1" fill="#b4b4b4"/><rect x="939" y="184" width="1" height="1" fill="#b4b4b4"/><g transform="translate(948,167)"><rect x="0" y="0" width="24" height="24" fill="#5fb33f"/><rect x="0" y="0" width="24" height="12" fill="#4fa02f"/><circle cx="14" cy="10" r="6.5" fill="none" stroke="#fff" stroke-width="2.4"/><path d="M3,21l6,-6" stroke="#fff" stroke-width="3" stroke-linecap="round"/></g><g transform="translate(982,168)"><path d="M1,4l7,-2l7,2l7,-2v18l-7,2l-7,-2l-7,2z" fill="#dfd6a8" stroke="#999" stroke-width=".5"/><path d="M1,10l6,3l4,-2l6,4M4,18l6,-6" stroke="#5f8fc4" stroke-width="1.5"/><path d="M8,16l11,-14l3,2l-11,14z" fill="#c0662a"/><rect x="0" y="2" width="4" height="4" fill="#5fb33f"/></g><rect x="1018" y="172" width="1" height="1" fill="#b4b4b4"/><rect x="1021" y="172" width="1" height="1" fill="#b4b4b4"/><rect x="1018" y="175" width="1" height="1" fill="#b4b4b4"/><rect x="1021" y="175" width="1" height="1" fill="#b4b4b4"/><rect x="1018" y="178" width="1" height="1" fill="#b4b4b4"/><rect x="1021" y="178" width="1" height="1" fill="#b4b4b4"/><rect x="1018" y="181" width="1" height="1" fill="#b4b4b4"/><rect x="1021" y="181" width="1" height="1" fill="#b4b4b4"/><rect x="1018" y="184" width="1" height="1" fill="#b4b4b4"/><rect x="1021" y="184" width="1" height="1" fill="#b4b4b4"/><g transform="translate(1029,167)"><path d="M1,2h22v4h-2v4h-2v5h-3v4h-3v4h-12z" fill="#2f8a3a"/><path d="M3,5h17v4h-2v4h-2v4h-3v3h-10z" fill="#f39a2a" stroke="#0f3f6a" stroke-width=".8" stroke-dasharray="1.5,1"/><path d="M10,7v8M6,11h8" stroke="#fff" stroke-width="2"/></g><g transform="translate(1063,167)"><path d="M2,23l6,-7" stroke="#111" stroke-width="3.2" stroke-linecap="round"/><circle cx="14" cy="10" r="9" fill="#a9d0d8" stroke="#111" stroke-width="1.8"/><path d="M7,12c4,-4 8,0 13,-5" stroke="#e43a3a" stroke-width="2" fill="none"/><path d="M7,14c4,-2 8,1 13,-3" stroke="#3fae3f" stroke-width="1.6" fill="none"/></g><circle cx="1099.5" cy="179" r="6" fill="#000"/><circle cx="1099.5" cy="179" r="3" fill="#bbb"/><path d="M1216,176h9l-4.5,5z" fill="#444"/><g transform="translate(1237,167)"><path d="M13,2l9,0v20h-13z" fill="#e8e8e8" opacity=".7"/><path d="M14,12h8v3h-10z" fill="#f4b0b0" opacity=".8"/><path d="M11,16h11v3h-12z" fill="#b0e0b0" opacity=".8"/><path d="M9,20h13v3h-13z" fill="#b0c8f0" opacity=".8"/><path d="M1,23c3,-15 6,-22 11,-22s8,7 11,22" fill="none" stroke="#1f5f8a" stroke-width="2"/><text x="2.5" y="22" font-size="16" font-weight="bold" font-family="Liberation Sans" fill="#111">%</text></g><path d="M1291,175.5l3,2.8l-3,2.8M1295,175.5l3,2.8l-3,2.8" fill="none" stroke="#000" stroke-width="1.7"/><rect x="1309" y="172" width="1" height="1" fill="#b4b4b4"/><rect x="1312" y="172" width="1" height="1" fill="#b4b4b4"/><rect x="1309" y="175" width="1" height="1" fill="#b4b4b4"/><rect x="1312" y="175" width="1" height="1" fill="#b4b4b4"/><rect x="1309" y="178" width="1" height="1" fill="#b4b4b4"/><rect x="1312" y="178" width="1" height="1" fill="#b4b4b4"/><rect x="1309" y="181" width="1" height="1" fill="#b4b4b4"/><rect x="1312" y="181" width="1" height="1" fill="#b4b4b4"/><rect x="1309" y="184" width="1" height="1" fill="#b4b4b4"/><rect x="1312" y="184" width="1" height="1" fill="#b4b4b4"/><g transform="translate(1321,167)"><rect x="0" y="0" width="24" height="24" fill="#2fbf8f"/><rect x="5" y="3" width="14" height="18" fill="#f26b2a"/><path d="M5.0,3v18" stroke="#1f8f6f" stroke-width=".8"/><path d="M8.5,3v18" stroke="#1f8f6f" stroke-width=".8"/><path d="M12.0,3v18" stroke="#1f8f6f" stroke-width=".8"/><path d="M15.5,3v18" stroke="#1f8f6f" stroke-width=".8"/><path d="M19.0,3v18" stroke="#1f8f6f" stroke-width=".8"/><path d="M5,3.0h14" stroke="#1f8f6f" stroke-width=".8"/><path d="M5,6.6h14" stroke="#1f8f6f" stroke-width=".8"/><path d="M5,10.2h14" stroke="#1f8f6f" stroke-width=".8"/><path d="M5,13.8h14" stroke="#1f8f6f" stroke-width=".8"/><path d="M5,17.4h14" stroke="#1f8f6f" stroke-width=".8"/><path d="M5,21.0h14" stroke="#1f8f6f" stroke-width=".8"/></g><path d="M1353,175.5l3,2.8l-3,2.8M1357,175.5l3,2.8l-3,2.8" fill="none" stroke="#000" stroke-width="1.7"/><rect x="19" y="205" width="1" height="1" fill="#b4b4b4"/><rect x="19" y="208" width="1" height="1" fill="#b4b4b4"/><rect x="22" y="205" width="1" height="1" fill="#b4b4b4"/><rect x="22" y="208" width="1" height="1" fill="#b4b4b4"/><rect x="25" y="205" width="1" height="1" fill="#b4b4b4"/><rect x="25" y="208" width="1" height="1" fill="#b4b4b4"/><rect x="28" y="205" width="1" height="1" fill="#b4b4b4"/><rect x="28" y="208" width="1" height="1" fill="#b4b4b4"/><rect x="31" y="205" width="1" height="1" fill="#b4b4b4"/><rect x="31" y="208" width="1" height="1" fill="#b4b4b4"/><rect x="34" y="205" width="1" height="1" fill="#b4b4b4"/><rect x="34" y="208" width="1" height="1" fill="#b4b4b4"/><g transform="translate(8,213)"><path d="M2,3l8,19l9,-19h6" fill="none" stroke="#263b57" stroke-width="1.5"/><circle cx="2" cy="3" r="2" fill="#fff" stroke="#263b57"/><circle cx="10" cy="22" r="2" fill="#fff" stroke="#263b57"/><circle cx="19" cy="3" r="2" fill="#fff" stroke="#263b57"/><circle cx="25" cy="3" r="2" fill="#fff" stroke="#263b57"/><rect x="14.5" y="14.5" width="10" height="10" rx="1.5" fill="#4f9a4f" stroke="#3d7d3d"/><path d="M19.5,16.5v6M16.5,19.5h6" stroke="#fff" stroke-width="2"/></g><g transform="translate(8,246)"><rect x="0" y="0" width="19" height="19" fill="#6b98cc"/><rect x="0" y="0" width="6" height="6" fill="#1f3f6a"/><rect x="12" y="0" width="7" height="6" fill="#1f3f6a"/><rect x="6" y="6" width="6" height="7" fill="#1f3f6a"/><rect x="0" y="13" width="6" height="6" fill="#1f3f6a"/><rect x="14.5" y="14.5" width="10" height="10" rx="1.5" fill="#4f9a4f" stroke="#3d7d3d"/><path d="M19.5,16.5v6M16.5,19.5h6" stroke="#fff" stroke-width="2"/></g><g transform="translate(8,280)"><path d="M4,4c0,-4 8,-4 8,2c0,6 -5,11 -8,13c3,-4 4,-7 2,-9c-2,0 -3,-1 -2,-6z" fill="#5f8fc4" stroke="#3f6aa3" stroke-width=".8"/><rect x="14.5" y="12.5" width="10" height="10" rx="1.5" fill="#4f9a4f" stroke="#3d7d3d"/><path d="M19.5,14.5v6M16.5,17.5h6" stroke="#fff" stroke-width="2"/></g><g transform="translate(8,311)"><path d="M1,23c2,-8 8,-18 21,-22c-2,8 -8,16 -18,19z" fill="#6b98cc" stroke="#3f6aa3"/><path d="M2,22l14,-16" stroke="#dde8f4" stroke-width="1"/><rect x="14.5" y="13.5" width="10" height="10" rx="1.5" fill="#4f9a4f" stroke="#3d7d3d"/><path d="M19.5,15.5v6M16.5,18.5h6" stroke="#fff" stroke-width="2"/></g><g transform="translate(8,344)"><rect x=".5" y="4.5" width="20" height="18" rx="2" fill="#a9c6e6" stroke="#5f8fc4"/><path d="M3,4l7,14l8,-14h5" fill="none" stroke="#263b57" stroke-width="1.3"/><circle cx="3" cy="4" r="1.8" fill="#fff" stroke="#263b57" stroke-width=".8"/><circle cx="18" cy="4" r="1.8" fill="#fff" stroke="#263b57" stroke-width=".8"/><circle cx="10" cy="18" r="1.8" fill="#fff" stroke="#263b57" stroke-width=".8"/><rect x="13.5" y="12.5" width="10" height="10" rx="1.5" fill="#4f9a4f" stroke="#3d7d3d"/><path d="M18.5,14.5v6M15.5,17.5h6" stroke="#fff" stroke-width="2"/></g><g transform="translate(8,376)"><path d="M3,12c-2,-3 -2,-9 3,-10c2,-1 4,0 5,1c2,-2 6,-2 8,0c2,2 2,5 0,7c-1,1 -2,1 -2,3c0,2 -1,4 -2,5c-1,0 -1,-3 -2,-5c-1,2 -2,4 -3,4c-1,-1 -1,-3 -1,-5c-2,1 -4,1 -6,0z" fill="#6b98cc" stroke="#2f4f7f" stroke-width=".8"/><path d="M11,3c-1,2 -1,4 1,5" fill="none" stroke="#2f4f7f" stroke-width=".6"/><rect x="13.5" y="13.5" width="10" height="10" rx="1.5" fill="#4f9a4f" stroke="#3d7d3d"/><path d="M18.5,15.5v6M15.5,18.5h6" stroke="#fff" stroke-width="2"/></g><path d="M37,385h8l-4,4z" fill="#555"/><g transform="translate(8,408)"><circle cx="10" cy="10" r="9.5" fill="#9dbde3" stroke="#3f6aa3"/><path d="M4,5c2,0 3,1 4,3c1,2 -1,3 0,5l2,3M12,3c1,1 3,1 4,2c1,2 -1,3 1,5M3,11c2,1 3,3 3,5" fill="none" stroke="#2f4f7f" stroke-width="2"/><path d="M1,10h18M10,1v18" stroke="#dde8f4" stroke-width=".6"/><rect x="13.5" y="13.5" width="10" height="10" rx="1.5" fill="#4f9a4f" stroke="#3d7d3d"/><path d="M18.5,15.5v6M15.5,18.5h6" stroke="#fff" stroke-width="2"/></g><path d="M37,417h8l-4,4z" fill="#555"/><g transform="translate(8,440)"><circle cx="10" cy="10" r="9.5" fill="#3f74b0" stroke="#263b57"/><path d="M1,7h18M1,13h18M10,1v18" stroke="#fff" stroke-width="1.2"/><ellipse cx="10" cy="10" rx="4.5" ry="9.5" fill="none" stroke="#fff" stroke-width="1.2"/><rect x="13.5" y="13.5" width="10" height="10" rx="1.5" fill="#4f9a4f" stroke="#3d7d3d"/><path d="M18.5,15.5v6M15.5,18.5h6" stroke="#fff" stroke-width="2"/></g><g transform="translate(8,472)"><circle cx="10" cy="10" r="9.5" fill="#e6eef8" stroke="#5f8fc4"/><path d="M1,10h18M10,1v18" stroke="#a9c6e6"/><path d="M4,4l6,12l6,-12" fill="none" stroke="#263b57" stroke-width="1.3"/><circle cx="4" cy="4" r="1.8" fill="#fff" stroke="#263b57" stroke-width=".8"/><circle cx="16" cy="4" r="1.8" fill="#fff" stroke="#263b57" stroke-width=".8"/><circle cx="10" cy="16" r="1.8" fill="#fff" stroke="#263b57" stroke-width=".8"/><rect x="13.5" y="13.5" width="10" height="10" rx="1.5" fill="#4f9a4f" stroke="#3d7d3d"/><path d="M18.5,15.5v6M15.5,18.5h6" stroke="#fff" stroke-width="2"/></g><path d="M37,481h8l-4,4z" fill="#555"/><g transform="translate(8,504)"><path d="M1,8l5,-4h14v12l-5,6h-14z" fill="#f2c94c" stroke="#333" stroke-width=".8"/><circle cx="13" cy="9" r="9.5" fill="#9dbde3" stroke="#3f6aa3"/><path d="M7,4c2,0 3,1 4,3c1,2 -1,3 0,5l2,3M15,2c1,1 3,1 4,2c1,2 -1,3 1,5M6,10c2,1 3,3 3,5" fill="none" stroke="#2f4f7f" stroke-width="2"/><path d="M4,9h18M13,0v18" stroke="#dde8f4" stroke-width=".6"/><path d="M1,8h14v14h-14z" fill="#f2c94c" stroke="#333" stroke-width=".8"/><path d="M15,8l5,-4v12l-5,6z" fill="#d4a91c" stroke="#333" stroke-width=".8"/><rect x="13.5" y="13.5" width="10" height="10" rx="1.5" fill="#c8a414" stroke="#a78600"/><path d="M18.5,15.5v6M15.8,17l5.4,3M15.8,20l5.4,-3" stroke="#fff" stroke-width="1.2"/></g><path d="M37,513h8l-4,4z" fill="#555"/><g transform="translate(16,537)"><rect x="6" y="1" width="5" height="12" rx="1" fill="#5f8fc4" stroke="#2f5f9f" stroke-width=".8"/><rect x=".5" y="3.5" width="19" height="7" fill="#c9dcf0" stroke="#2f5f9f"/><rect x="6" y="1" width="5" height="12" rx="1" fill="#5f8fc4" stroke="#2f5f9f" stroke-width=".8"/><path d="M14,4v6M17,4v6" stroke="#8fb3dd"/><path d="M0,13a7,7 0 0 0 8,8M0,16a5,5 0 0 0 5,5M1,11a10,10 0 0 0 9,11" fill="none" stroke="#444" stroke-width=".8"/><rect x="12.5" y="12.5" width="10" height="10" rx="1.5" fill="#c8a414" stroke="#a78600"/><path d="M17.5,14.5v6M14.8,16l5.4,3M14.8,19l5.4,-3" stroke="#fff" stroke-width="1.2"/></g><g transform="translate(60,225)"><path d="M2,8l6,-3l4,6l-6,4z" fill="#e8c83a"/><path d="M1,10l5,-2l3,5l-5,3z" fill="#e03a3a"/><path d="M3,7l4,-2l2,3" fill="#4f86c6"/><path d="M6,13l3,-2l2,3l-3,2z" fill="#c9975a"/><path d="M9,10l6,-8" stroke="#c9975a" stroke-width="2"/></g><g transform="translate(85,225)"><rect x="1" y="5" width="9" height="10" fill="none" stroke="#777"/><rect x="4" y="3" width="9" height="10" fill="#fff" stroke="#777"/><path d="M8,1v8" stroke="#4f86c6" stroke-width="2"/><circle cx="12" cy="13" r="3.5" fill="#4f9a4f"/><path d="M12,11v4M10,13h4" stroke="#fff"/></g><g transform="translate(110,226)"><path d="M1,8c4,-6 12,-6 16,0c-4,6 -12,6 -16,0z" fill="#dde8f4" stroke="#888"/><circle cx="9" cy="7.5" r="3.2" fill="#3f6aa3"/><circle cx="9" cy="7.5" r="1.2" fill="#111"/><path d="M13,13h5l-2.5,3z" fill="#333"/></g><g transform="translate(136,225)"><path d="M1,2h14l-5,6v8l-4,-2v-6z" fill="#5f8fc4" stroke="#3f6aa3" stroke-width=".6"/><rect x="1" y="1" width="14" height="2" fill="#e8d84a"/></g><g transform="translate(161,225)"><text x="0" y="12" font-size="14" font-family="Liberation Serif" fill="#aaa">ε</text><path d="M8,10h6v6h-6z" fill="#ddd" stroke="#bbb"/></g><path d="M182,231h8l-4,4z" fill="#999"/><g transform="translate(198,225)"><rect x=".5" y=".5" width="8" height="15" fill="none" stroke="#888" stroke-width=".8"/><rect x="2" y="3" width="3" height="3" fill="#f39a2a"/><rect x="2" y="10" width="3" height="3" fill="#f39a2a"/><path d="M11,1v10h-3l5,5l5,-5h-3v-10z" fill="#5f8fc4" stroke="#3f6aa3" stroke-width=".6"/></g><g transform="translate(223,225)"><rect x=".5" y=".5" width="8" height="15" fill="none" stroke="#888" stroke-width=".8"/><rect x="2" y="3" width="3" height="3" fill="#f39a2a"/><rect x="2" y="10" width="3" height="3" fill="#f39a2a"/><path d="M11,16v-10h-3l5,-5l5,5h-3v10z" fill="#5f8fc4" stroke="#3f6aa3" stroke-width=".6"/></g><g transform="translate(248,226)"><rect x=".5" y=".5" width="11" height="12" fill="#fff" stroke="#555"/><rect x="8" y="10" width="7" height="5" rx="1" fill="#e02a2a"/><path d="M9.5,12.5h4" stroke="#fff"/></g>
</svg>
</body></html>
